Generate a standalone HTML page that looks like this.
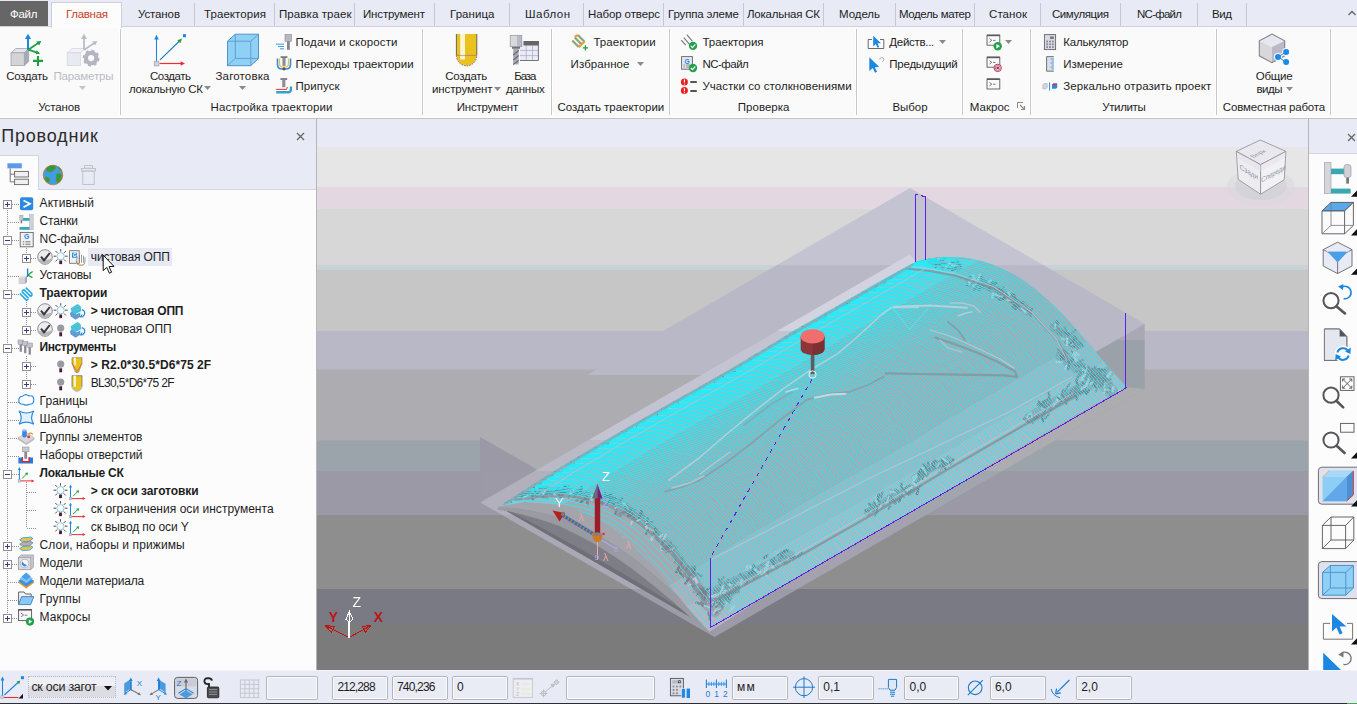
<!DOCTYPE html>
<html lang="ru">
<head>
<meta charset="utf-8">
<title>PowerMill</title>
<style>
html,body{margin:0;padding:0;}
body{width:1357px;height:704px;overflow:hidden;position:relative;background:#e8ebf5;font-family:"Liberation Sans",sans-serif;font-size:11.5px;color:#1e1e1e;}
.t{position:absolute;white-space:nowrap;display:block;}
.abs{position:absolute;}
#tabbar{position:absolute;left:0;top:0;width:1357px;height:27px;background:#e8ebf5;}
#ribbon{position:absolute;left:0;top:27px;width:1357px;height:90px;background:#fafafa;border-top:0;}
.vsep{position:absolute;width:1px;background:#c9c9c9;box-shadow:-1px 0 0 #fff,1px 0 0 #fff;}
.tsep{position:absolute;top:3px;width:1px;height:23px;background:#c6c8d2;}
.tb{position:absolute;height:23.5px;top:676.2px;background:#e9ecf5;border:1px solid #b4b5ba;box-shadow:inset 0 0 0 1px #fcfcfe;box-sizing:border-box;border-radius:2px;}
svg{position:absolute;overflow:visible;}
</style>
</head>
<body>

<div id="tabbar"></div>
<div class="abs" style="left:0;top:26px;width:1357px;height:1px;background:#cfd2dc"></div>
<div id="ribbon"></div>
<div class="abs" style="left:0;top:117px;width:1357px;height:1px;background:#fff"></div>
<div class="abs" style="left:0;top:118px;width:1357px;height:1px;background:#c2c2c2"></div>
<div class="abs" style="left:0;top:1px;width:48px;height:25px;background:#666"></div>
<span class="t" style="left:10.0px;top:7.52px;font-size:11.5px;line-height:13.8px;letter-spacing:-0.258px;color:#fff;">Файл</span>
<div class="abs" style="left:51px;top:2px;width:71px;height:26px;background:#fcfcfc;border:1px solid #cdd0d8;border-bottom:0;box-sizing:border-box"></div>
<span class="t" style="left:66.0px;top:7.52px;font-size:11.5px;line-height:13.8px;letter-spacing:-0.295px;color:#c43e2c;">Главная</span>
<span class="t" style="left:138.0px;top:7.52px;font-size:11.5px;line-height:13.8px;letter-spacing:-0.113px;color:#1e1e1e;">Установ</span>
<span class="t" style="left:204.0px;top:7.52px;font-size:11.5px;line-height:13.8px;letter-spacing:0.077px;color:#1e1e1e;">Траектория</span>
<span class="t" style="left:279.0px;top:7.52px;font-size:11.5px;line-height:13.8px;letter-spacing:0.088px;color:#1e1e1e;">Правка траек</span>
<span class="t" style="left:363.0px;top:7.52px;font-size:11.5px;line-height:13.8px;letter-spacing:-0.160px;color:#1e1e1e;">Инструмент</span>
<span class="t" style="left:450.0px;top:7.52px;font-size:11.5px;line-height:13.8px;letter-spacing:0.062px;color:#1e1e1e;">Граница</span>
<span class="t" style="left:525.0px;top:7.52px;font-size:11.5px;line-height:13.8px;letter-spacing:0.482px;color:#1e1e1e;">Шаблон</span>
<span class="t" style="left:588.0px;top:7.52px;font-size:11.5px;line-height:13.8px;letter-spacing:-0.110px;color:#1e1e1e;">Набор отверс</span>
<span class="t" style="left:668.0px;top:7.52px;font-size:11.5px;line-height:13.8px;letter-spacing:-0.152px;color:#1e1e1e;">Группа элеме</span>
<span class="t" style="left:747.0px;top:7.52px;font-size:11.5px;line-height:13.8px;letter-spacing:-0.227px;color:#1e1e1e;">Локальная СК</span>
<span class="t" style="left:839.0px;top:7.52px;font-size:11.5px;line-height:13.8px;letter-spacing:-0.056px;color:#1e1e1e;">Модель</span>
<span class="t" style="left:899.0px;top:7.52px;font-size:11.5px;line-height:13.8px;letter-spacing:-0.405px;color:#1e1e1e;">Модель матер</span>
<span class="t" style="left:989.0px;top:7.52px;font-size:11.5px;line-height:13.8px;letter-spacing:0.076px;color:#1e1e1e;">Станок</span>
<span class="t" style="left:1052.0px;top:7.52px;font-size:11.5px;line-height:13.8px;letter-spacing:-0.430px;color:#1e1e1e;">Симуляция</span>
<span class="t" style="left:1137.0px;top:7.52px;font-size:11.5px;line-height:13.8px;letter-spacing:-0.739px;color:#1e1e1e;">NC-файл</span>
<span class="t" style="left:1212.0px;top:7.52px;font-size:11.5px;line-height:13.8px;letter-spacing:-0.403px;color:#1e1e1e;">Вид</span>
<div class="tsep" style="left:194px"></div>
<div class="tsep" style="left:274px"></div>
<div class="tsep" style="left:354px"></div>
<div class="tsep" style="left:434px"></div>
<div class="tsep" style="left:509px"></div>
<div class="tsep" style="left:583px"></div>
<div class="tsep" style="left:663px"></div>
<div class="tsep" style="left:743px"></div>
<div class="tsep" style="left:823px"></div>
<div class="tsep" style="left:895px"></div>
<div class="tsep" style="left:974px"></div>
<div class="tsep" style="left:1040px"></div>
<div class="tsep" style="left:1120px"></div>
<div class="tsep" style="left:1197px"></div>
<div class="tsep" style="left:1246px"></div>
<svg style="left:1347px;top:9px" width="10" height="8"><path d="M1.5 6 L5 2.5 L8.5 6" fill="none" stroke="#666" stroke-width="1.4"/></svg>
<div class="vsep" style="left:120px;top:29px;height:86px"></div>
<div class="vsep" style="left:422px;top:29px;height:86px"></div>
<div class="vsep" style="left:551px;top:29px;height:86px"></div>
<div class="vsep" style="left:669px;top:29px;height:86px"></div>
<div class="vsep" style="left:856px;top:29px;height:86px"></div>
<div class="vsep" style="left:962px;top:29px;height:86px"></div>
<div class="vsep" style="left:1030px;top:29px;height:86px"></div>
<div class="vsep" style="left:1216px;top:29px;height:86px"></div>
<div class="vsep" style="left:1330px;top:29px;height:86px"></div>
<span class="t" style="left:38.2px;top:100.72px;font-size:11.5px;line-height:13.8px;letter-spacing:-0.146px;color:#1e1e1e;">Установ</span>
<span class="t" style="left:210.5px;top:100.72px;font-size:11.5px;line-height:13.8px;letter-spacing:0.095px;color:#1e1e1e;">Настройка траектории</span>
<span class="t" style="left:456.8px;top:100.72px;font-size:11.5px;line-height:13.8px;letter-spacing:-0.227px;color:#1e1e1e;">Инструмент</span>
<span class="t" style="left:557.5px;top:100.72px;font-size:11.5px;line-height:13.8px;letter-spacing:-0.035px;color:#1e1e1e;">Создать траектории</span>
<span class="t" style="left:737.8px;top:100.72px;font-size:11.5px;line-height:13.8px;letter-spacing:0.013px;color:#1e1e1e;">Проверка</span>
<span class="t" style="left:892.5px;top:100.72px;font-size:11.5px;line-height:13.8px;letter-spacing:-0.054px;color:#1e1e1e;">Выбор</span>
<span class="t" style="left:969.8px;top:100.72px;font-size:11.5px;line-height:13.8px;letter-spacing:0.024px;color:#1e1e1e;">Макрос</span>
<span class="t" style="left:1102.3px;top:100.72px;font-size:11.5px;line-height:13.8px;letter-spacing:-0.377px;color:#1e1e1e;">Утилиты</span>
<span class="t" style="left:1222.8px;top:100.72px;font-size:11.5px;line-height:13.8px;letter-spacing:-0.177px;color:#1e1e1e;">Совместная работа</span>
<span class="t" style="left:6.2px;top:70.02px;font-size:11.5px;line-height:13.8px;letter-spacing:-0.334px;color:#1e1e1e;">Создать</span>
<span class="t" style="left:53.5px;top:70.02px;font-size:11.5px;line-height:13.8px;letter-spacing:-0.163px;color:#b9bcc6;">Параметры</span>
<span class="t" style="left:150.0px;top:70.02px;font-size:11.5px;line-height:13.8px;letter-spacing:-0.451px;color:#1e1e1e;">Создать</span>
<span class="t" style="left:129.0px;top:83.02px;font-size:11.5px;line-height:13.8px;letter-spacing:-0.231px;color:#1e1e1e;">локальную СК</span>
<span class="t" style="left:215.5px;top:70.02px;font-size:11.5px;line-height:13.8px;letter-spacing:0.156px;color:#1e1e1e;">Заготовка</span>
<span class="t" style="left:445.3px;top:70.02px;font-size:11.5px;line-height:13.8px;letter-spacing:-0.284px;color:#1e1e1e;">Создать</span>
<span class="t" style="left:432.0px;top:83.02px;font-size:11.5px;line-height:13.8px;letter-spacing:-0.111px;color:#1e1e1e;">инструмент</span>
<span class="t" style="left:514.3px;top:70.02px;font-size:11.5px;line-height:13.8px;letter-spacing:-1.127px;color:#1e1e1e;">База</span>
<span class="t" style="left:506.0px;top:83.02px;font-size:11.5px;line-height:13.8px;letter-spacing:-0.205px;color:#1e1e1e;">данных</span>
<span class="t" style="left:1255.8px;top:69.72px;font-size:11.5px;line-height:13.8px;letter-spacing:-0.228px;color:#1e1e1e;">Общие</span>
<span class="t" style="left:1256.5px;top:82.62px;font-size:11.5px;line-height:13.8px;letter-spacing:-0.503px;color:#1e1e1e;">виды</span>
<span class="t" style="left:295.4px;top:36.02px;font-size:11.5px;line-height:13.8px;letter-spacing:0.129px;color:#1e1e1e;">Подачи и скорости</span>
<span class="t" style="left:295.4px;top:58.02px;font-size:11.5px;line-height:13.8px;letter-spacing:0.043px;color:#1e1e1e;">Переходы траектории</span>
<span class="t" style="left:295.4px;top:79.82px;font-size:11.5px;line-height:13.8px;letter-spacing:0.081px;color:#1e1e1e;">Припуск</span>
<span class="t" style="left:593.4px;top:36.02px;font-size:11.5px;line-height:13.8px;letter-spacing:0.077px;color:#1e1e1e;">Траектории</span>
<span class="t" style="left:570.6px;top:58.02px;font-size:11.5px;line-height:13.8px;letter-spacing:0.077px;color:#1e1e1e;">Избранное</span>
<span class="t" style="left:702.4px;top:36.02px;font-size:11.5px;line-height:13.8px;letter-spacing:-0.012px;color:#1e1e1e;">Траектория</span>
<span class="t" style="left:702.4px;top:58.02px;font-size:11.5px;line-height:13.8px;letter-spacing:-0.505px;color:#1e1e1e;">NC-файл</span>
<span class="t" style="left:702.4px;top:79.82px;font-size:11.5px;line-height:13.8px;letter-spacing:0.048px;color:#1e1e1e;">Участки со столкновениями</span>
<span class="t" style="left:889.3px;top:36.02px;font-size:11.5px;line-height:13.8px;letter-spacing:-0.290px;color:#1e1e1e;">Действ...</span>
<span class="t" style="left:889.3px;top:58.02px;font-size:11.5px;line-height:13.8px;letter-spacing:-0.239px;color:#1e1e1e;">Предыдущий</span>
<span class="t" style="left:1063.3px;top:36.02px;font-size:11.5px;line-height:13.8px;letter-spacing:-0.232px;color:#1e1e1e;">Калькулятор</span>
<span class="t" style="left:1063.3px;top:58.02px;font-size:11.5px;line-height:13.8px;letter-spacing:-0.038px;color:#1e1e1e;">Измерение</span>
<span class="t" style="left:1063.3px;top:79.82px;font-size:11.5px;line-height:13.8px;letter-spacing:0.074px;color:#1e1e1e;">Зеркально отразить проект</span>
<svg style="left:79.0px;top:86.4px" width="7" height="4"><path d="M0 0 H7 L3.5 4 Z" fill="#c3c5cc"/></svg>
<svg style="left:203.9px;top:86.4px" width="7" height="4"><path d="M0 0 H7 L3.5 4 Z" fill="#8a8a8a"/></svg>
<svg style="left:239.0px;top:86.4px" width="7" height="4"><path d="M0 0 H7 L3.5 4 Z" fill="#8a8a8a"/></svg>
<svg style="left:493.5px;top:87px" width="7" height="4"><path d="M0 0 H7 L3.5 4 Z" fill="#8a8a8a"/></svg>
<svg style="left:637.0px;top:61.5px" width="7" height="4"><path d="M0 0 H7 L3.5 4 Z" fill="#8a8a8a"/></svg>
<svg style="left:939.0px;top:40px" width="7" height="4"><path d="M0 0 H7 L3.5 4 Z" fill="#8a8a8a"/></svg>
<svg style="left:1285.5px;top:87px" width="7" height="4"><path d="M0 0 H7 L3.5 4 Z" fill="#8a8a8a"/></svg>
<svg style="left:1004.5px;top:40px" width="7" height="4"><path d="M0 0 H7 L3.5 4 Z" fill="#8a8a8a"/></svg>
<svg style="left:1017px;top:102px" width="9" height="9"><path d="M0.5 6 V0.5 H6" fill="none" stroke="#8a8a8a"/><path d="M3 3 L7.5 7.5 M7.5 4 V7.5 H4" fill="none" stroke="#8a8a8a" stroke-width="1.2"/></svg>
<svg style="left:0;top:0" width="1357" height="120" viewBox="0 0 1357 120">
<!-- Setup create -->
<g>
<path d="M11 52.8 L15.9 48.5 H28.7 L24.3 52.8 Z" fill="#e4e6ee" stroke="#a2a2b0" stroke-width="0.8"/>
<path d="M24.3 52.8 L28.7 48.5 V61.5 L24.3 65.6 Z" fill="#a9a9b5" stroke="#a2a2b0" stroke-width="0.8"/>
<rect x="11" y="52.8" width="13.3" height="12.8" fill="#d4d4d6" stroke="#a2a2b0" stroke-width="0.8"/>
<path d="M28 50 V38" stroke="#1c86e0" stroke-width="2"/><path d="M24.9 39 H31.1 L28 33.8 Z" fill="#1c86e0"/>
<path d="M28.3 49.7 L39 42.6 M28.3 49.7 L38.5 53.2" stroke="#1fa040" stroke-width="1.8" fill="none"/>
<path d="M41.3 41.1 L36.2 41.6 L39.2 45.6 Z M40.2 53.8 L36.6 50.2 L35.8 54.2 Z" fill="#1fa040"/>
<path d="M33 60.9 H43 M38 56 V66" stroke="#1fa040" stroke-width="2.1"/>
</g>
<!-- Setup params (disabled) -->
<g>
<path d="M67.2 52.8 L72.1 48.5 H84.9 L80.5 52.8 Z" fill="#f1f2f7" stroke="#d6d6de" stroke-width="0.8"/>
<rect x="67.2" y="52.8" width="13.3" height="12.8" fill="#e8eaf2" stroke="#d6d6de" stroke-width="0.8"/>
<path d="M84 50 V38" stroke="#babbc7" stroke-width="1.8"/><path d="M81 39 H87 L84 33.8 Z" fill="#babbc7"/>
<path d="M84.3 49.7 L95 42.6" stroke="#babbc7" stroke-width="1.8" fill="none"/><path d="M97.3 41.1 L92.2 41.6 L95.2 45.6 Z" fill="#babbc7"/>
<circle cx="91.1" cy="58.1" r="5.2" fill="none" stroke="#b4b5c2" stroke-width="4.2"/>
<circle cx="91.1" cy="58.1" r="7.2" fill="none" stroke="#b4b5c2" stroke-width="2.4" stroke-dasharray="2.9 2.75"/>
</g>
<!-- create workplane -->
<g>
<path d="M156.5 61 V38" stroke="#1c86e0" stroke-width="1.1"/><path d="M154.2 39.4 H158.8 L156.5 34.8 Z" fill="#1c86e0"/>
<path d="M159.5 63.5 H181" stroke="#e83030" stroke-width="1.2"/><path d="M180.6 61.2 V65.8 L185 63.5 Z" fill="#e83030"/>
<path d="M160 59.8 L179.5 41" stroke="#1c7ab8" stroke-width="1.1"/><path d="M182 38.6 L177.4 40.2 L180.4 43.2 Z" fill="#2a9a40"/>
<rect x="183" y="34.2" width="3" height="3" fill="#1c86e0"/>
<rect x="154.3" y="61.3" width="4.6" height="4.6" fill="#d2d2da" stroke="#a4a4b2" stroke-width="0.8"/>
</g>
<!-- block -->
<g stroke="#4f93cc" stroke-width="1" fill="#8fd0f5">
<path d="M227.5 41.2 L235.3 34.2 H258.5 V58.4 L250.8 65.7 H227.5 Z"/>
<path d="M227.5 41.2 H250.8 V65.7 M250.8 41.2 L258.5 34.2 M235.3 34.2 V58.4 H258.5 M235.3 58.4 L227.5 65.7" fill="none" stroke="#5a9ad0" stroke-width="0.9"/>
</g>
<!-- feeds -->
<g>
<path d="M276 44.2 H284 M278 46.5 H284 M280 48.8 H284" stroke="#3a9ae8" stroke-width="1"/>
<rect x="285" y="34.3" width="6.5" height="7" fill="#b8b8c2" stroke="#8c8c96" stroke-width="0.6"/>
<rect x="287" y="41.3" width="2.8" height="8.5" fill="#85858f"/>
</g>
<!-- links -->
<g fill="none">
<path d="M277.5 58.5 V64.5 Q277.5 69 282 69 H286 Q290.5 69 290.5 64.5 V58.5" stroke="#3a8ad8" stroke-width="1.6"/>
<path d="M279.6 58.5 V64 Q279.6 67 282.4 67 H285.6 Q288.4 67 288.4 64 V58.5" stroke="#e8c040" stroke-width="1.1"/>
<rect x="280.6" y="56.3" width="6.8" height="1.6" fill="#6a6a74"/>
<rect x="282.4" y="57.9" width="3.2" height="8" fill="#8e8e98"/>
<circle cx="284" cy="68.8" r="1.6" fill="#55555f"/>
</g>
<!-- thickness -->
<g fill="none">
<rect x="280.4" y="78.2" width="6.8" height="1.6" fill="#6a6a74"/>
<rect x="282.2" y="79.8" width="3.2" height="7.4" fill="#8e8e98"/>
<path d="M276.2 89.4 H286.6 L287.4 87" stroke="#e83030" stroke-width="1"/>
<path d="M276.2 92.3 H288.5 Q290.6 92.3 290.8 90 L291 86.5" stroke="#38a0c8" stroke-width="2.4"/>
</g>
<!-- create tool -->
<g>
<path d="M456.4 34 V55.5 A10.2 10.4 0 0 0 476.8 55.5 V34 Z" fill="#e9c21e"/>
<path d="M460.2 34 H465 V59.5 H460.2 Z" fill="#fbf5d2"/>
<path d="M456.4 34 V55.5 M476.8 34 V55.5" stroke="#5a5a5e" stroke-width="0.9" fill="none"/>
<path d="M456.4 55.5 A10.2 10.4 0 0 0 476.8 55.5" stroke="#6a5ab0" stroke-width="0.9" fill="none" stroke-dasharray="1.5 1.2"/>
<path d="M456.4 55.4 H476.8" stroke="#9a6a90" stroke-width="0.6"/>
</g>
<!-- database -->
<g>
<rect x="520" y="41" width="18.8" height="19.9" fill="#e9ebf5"/>
<path d="M526.3 45.5 V60.5 M532.5 45.5 V60.5 M520 50.5 H538.5 M520 55.6 H538.5" stroke="#a6a6c8" stroke-width="0.7"/>
<rect x="523.5" y="41" width="15.3" height="4.5" fill="#666"/>
<path d="M538.4 41 V60.5 H520" stroke="#666" stroke-width="0.9" fill="none"/>
<rect x="510.2" y="35.3" width="6.6" height="11.4" fill="#d9d9db"/><rect x="516.8" y="35.3" width="5" height="11.4" fill="#b9b9c9"/>
<rect x="510.2" y="35.3" width="11.6" height="11.4" fill="none" stroke="#9494a4" stroke-width="0.7"/>
<rect x="512" y="46.8" width="8" height="2" fill="#70707a"/>
<rect x="513.2" y="48.8" width="5.5" height="15.6" fill="#a9a9b5"/>
<path d="M513.2 55 L518.7 50.5 M513.2 60 L518.7 55.5 M513.2 64.4 L518.7 60.5" stroke="#6c6c78" stroke-width="1.2"/>
</g>
<!-- toolpaths (create) -->
<g fill="none">
<path d="M572.5 41.5 L579 35 M575 44.5 L581.5 38 M578 47 L584.3 40.8 M579 35 Q580.8 36 581.5 38 M575 44.5 Q573 43.5 572.5 41.5 M581.5 38 Q583.5 39 584.3 40.8" stroke="#f0a030" stroke-width="2.4" transform="rotate(90 578.4 41)"/>
<path d="M572.5 41.5 L579 35 M575 44.5 L581.5 38 M578 47 L584.3 40.8" stroke="#38b4ea" stroke-width="1.2" transform="rotate(90 578.4 41)"/>
<path d="M582.8 47.8 H588 M585.4 45.2 V50.4" stroke="#1fa040" stroke-width="1.3"/>
</g>
<!-- verify toolpath -->
<g fill="none">
<path d="M681.5 40 L688 34.5 M684.5 43 L691 37.5 M687 45.5 L692 41" stroke="#7c7c86" stroke-width="1.2" transform="rotate(90 686.8 40)"/>
<circle cx="693" cy="45.9" r="4.2" fill="#22a04a"/><path d="M690.8 45.9 L692.5 47.6 L695.3 44.4" stroke="#fff" stroke-width="1.2"/>
</g>
<!-- verify NC -->
<g fill="none">
<rect x="681.6" y="56.6" width="10.8" height="12.6" fill="#e4e6ee" stroke="#666" stroke-width="0.9"/>
<text x="684.4" y="63.6" font-family="Liberation Sans, sans-serif" font-size="6.5" font-weight="bold" fill="#1c86e0">G</text>
<path d="M683.5 65 H685 M686 65 H690 M683.5 67 H685 M686 67 H690" stroke="#666" stroke-width="0.7"/>
<circle cx="693" cy="68" r="4.2" fill="#22a04a"/><path d="M690.8 68 L692.5 69.7 L695.3 66.5" stroke="#fff" stroke-width="1.2"/>
</g>
<!-- collisions -->
<g>
<circle cx="684.4" cy="81.9" r="3.5" fill="#e82020"/><circle cx="684.4" cy="90.6" r="3.5" fill="#e82020"/>
<path d="M684.4 79.6 V82.6 M684.4 88.3 V91.3" stroke="#fff" stroke-width="1.1"/><circle cx="684.4" cy="84" r="0.6" fill="#fff"/><circle cx="684.4" cy="92.7" r="0.6" fill="#fff"/>
<path d="M690.3 82 H696.8 M690.3 91 H696.8" stroke="#555" stroke-width="1.8"/>
</g>
<!-- select -->
<g fill="none">
<path d="M872 39.5 H868.2 V48.5 H883.8 V39.5 H880" stroke="#5a5a5e" stroke-width="0.9"/>
<path d="M873.2 35.8 L873.2 46.4 L875.8 44 L877.6 47.8 L879.2 47 L877.5 43.3 L881 43.2 Z" fill="#1c86e0"/>
<path d="M869.3 57.3 L869.3 71 L872.7 68 L875 72.8 L877 71.8 L874.8 67.2 L879.2 67 Z" fill="#1c86e0"/>
<path d="M879.8 59.6 A2 2 0 1 1 882 61.5" stroke="#9a9aa4" stroke-width="0.8"/>
</g>
<!-- macros -->
<g fill="none" stroke="#5a5a5e">
<rect x="987" y="35.2" width="12.8" height="10" stroke-width="0.9"/><path d="M987 35.4 H999.8" stroke-width="1.6"/><path d="M989.5 38.6 L991.8 40.3 L989.5 42 M993 40.4 H995.5" stroke-width="0.8"/>
<rect x="987" y="57.2" width="12.8" height="10" stroke-width="0.9"/><path d="M987 57.4 H999.8" stroke-width="1.6"/><path d="M989.5 60.6 L991.8 62.3 L989.5 64 M993 62.4 H995.5" stroke-width="0.8"/>
<rect x="987" y="79" width="12.8" height="10" stroke-width="0.9"/><path d="M987 79.2 H999.8" stroke-width="1.6"/><path d="M989.5 82.4 L991.8 84.1 L989.5 85.8 M993 84.2 H995.5" stroke-width="0.8"/>
</g>
<circle cx="997.7" cy="46.3" r="4.2" fill="#22a04a"/><path d="M996.4 44 V48.6 L1000 46.3 Z" fill="#fff"/>
<circle cx="997.7" cy="67.9" r="3.7" fill="#fff" stroke="#e02828" stroke-width="1"/><circle cx="997.7" cy="67.9" r="2.4" fill="none" stroke="#3a6ae0" stroke-width="0.8"/><circle cx="997.7" cy="67.9" r="1.4" fill="#e02828"/>
<!-- calculator -->
<g>
<rect x="1044.4" y="34.6" width="11.2" height="15" fill="#d9d9e1" stroke="#66666a" stroke-width="0.9"/>
<rect x="1050" y="36.5" width="3.8" height="2.4" fill="#74747e"/>
<g fill="#8a8a96"><rect x="1046.2" y="40.6" width="1.8" height="1.8"/><rect x="1049.1" y="40.6" width="1.8" height="1.8"/><rect x="1052" y="40.6" width="1.8" height="1.8"/><rect x="1046.2" y="43.4" width="1.8" height="1.8"/><rect x="1049.1" y="43.4" width="1.8" height="1.8"/><rect x="1052" y="43.4" width="1.8" height="1.8"/><rect x="1046.2" y="46.2" width="1.8" height="1.8"/><rect x="1049.1" y="46.2" width="1.8" height="1.8"/><rect x="1052" y="46.2" width="1.8" height="1.8"/></g>
</g>
<!-- ruler -->
<g>
<path d="M1053.8 56.6 H1046.6 V71.2 H1053.8" fill="#dcdee8" stroke="#66666a" stroke-width="0.9"/>
<path d="M1050.5 59 H1053.8 M1051.8 61 H1053.8 M1050.5 63 H1053.8 M1051.8 65 H1053.8 M1050.5 67 H1053.8 M1051.8 69 H1053.8" stroke="#2a8ae0" stroke-width="0.8"/>
</g>
<!-- mirror -->
<g>
<path d="M1042.8 85 L1044 83.6 H1047.2 V87.4 L1046 88.8 H1042.8 Z" fill="#d4d4dc" stroke="#a8a8b4" stroke-width="0.6"/>
<path d="M1049.6 82.4 V90.6" stroke="#2a8ae0" stroke-width="1"/>
<path d="M1052 85 L1053.2 83.6 H1057.2 V87.4 L1056 88.8 H1052 Z" fill="#2a8ae0"/><path d="M1052 85 L1053.2 83.6 H1057.2 L1056 85 Z" fill="#e03030"/>
</g>
<!-- shared views -->
<g>
<path d="M1271.9 34.1 L1284.7 40.8 L1271.9 47.1 L1259.3 40.8 Z" fill="#e6e8f0"/>
<path d="M1259.3 40.8 L1271.9 47.1 V62.7 L1259.3 55.8 Z" fill="#d8d8da"/>
<path d="M1284.7 40.8 L1271.9 47.1 V62.7 L1284.7 55.8 Z" fill="#b9b9c7"/>
<path d="M1271.9 34.1 L1284.7 40.8 V55.8 L1271.9 62.7 L1259.3 55.8 V40.8 Z" fill="none" stroke="#84848c" stroke-width="1.1"/>
<path d="M1286.1 52.1 L1278 56.9 L1286.1 62.1" stroke="#fafafa" stroke-width="3" fill="none"/>
<circle cx="1286.1" cy="52.1" r="4" fill="#fafafa"/><circle cx="1278" cy="56.9" r="4" fill="#fafafa"/><circle cx="1286.1" cy="62.1" r="4" fill="#fafafa"/>
<path d="M1286.1 52.1 L1278 56.9 L1286.1 62.1" stroke="#1c8ae6" stroke-width="1" fill="none"/>
<circle cx="1286.1" cy="52.1" r="3" fill="#1c8ae6"/><circle cx="1278" cy="56.9" r="3" fill="#1c8ae6"/><circle cx="1286.1" cy="62.1" r="3" fill="#1c8ae6"/>
</g>
</svg>

<div class="abs" style="left:0;top:119px;width:316px;height:71px;background:#e8ebf5"></div>
<div class="abs" style="left:0;top:190px;width:316px;height:480px;background:#fcfcfc"></div>
<div class="abs" style="left:0;top:189px;width:316px;height:1px;background:#d4d6de"></div>
<div class="abs" style="left:316px;top:119px;width:1px;height:551px;background:#b5b5b5"></div>
<div class="abs" style="left:0;top:155px;width:39px;height:35px;background:#fcfcfc;border-top:1px solid #d4d6de;border-right:1px solid #d4d6de;box-sizing:border-box"></div>
<span class="t" style="left:1.2px;top:126.46px;font-size:18px;line-height:21.6px;letter-spacing:0.799px;color:#2b2b2b;">Проводник</span>
<svg style="left:296px;top:132px" width="9" height="9"><path d="M1 1 L8 8 M8 1 L1 8" stroke="#6a6a6a" stroke-width="1.4" fill="none"/></svg>
<div class="abs" style="left:88px;top:248px;width:84px;height:18px;background:#e7eaf4"></div>
<span class="t" style="left:39.6px;top:196.14px;font-size:12px;line-height:14.4px;letter-spacing:0.069px;color:#1e1e1e;">Активный</span>
<span class="t" style="left:39.6px;top:214.14px;font-size:12px;line-height:14.4px;letter-spacing:-0.176px;color:#1e1e1e;">Станки</span>
<span class="t" style="left:39.6px;top:232.14px;font-size:12px;line-height:14.4px;letter-spacing:-0.115px;color:#1e1e1e;">NC-файлы</span>
<span class="t" style="left:90.8px;top:250.14px;font-size:12px;line-height:14.4px;letter-spacing:-0.102px;color:#1e1e1e;">чистовая ОПП</span>
<span class="t" style="left:39.6px;top:268.14px;font-size:12px;line-height:14.4px;letter-spacing:-0.180px;color:#1e1e1e;">Установы</span>
<span class="t" style="left:39.6px;top:286.14px;font-size:12px;line-height:14.4px;letter-spacing:-0.110px;color:#1e1e1e;font-weight:bold;">Траектории</span>
<span class="t" style="left:90.8px;top:304.14px;font-size:12px;line-height:14.4px;letter-spacing:-0.194px;color:#1e1e1e;font-weight:bold;">&gt; чистовая ОПП</span>
<span class="t" style="left:90.8px;top:322.14px;font-size:12px;line-height:14.4px;letter-spacing:-0.121px;color:#1e1e1e;">черновая ОПП</span>
<span class="t" style="left:39.6px;top:340.14px;font-size:12px;line-height:14.4px;letter-spacing:-0.434px;color:#1e1e1e;font-weight:bold;">Инструменты</span>
<span class="t" style="left:90.8px;top:358.14px;font-size:12px;line-height:14.4px;letter-spacing:0.064px;color:#1e1e1e;font-weight:bold;">&gt; R2.0*30.5*D6*75 2F</span>
<span class="t" style="left:90.8px;top:376.14px;font-size:12px;line-height:14.4px;letter-spacing:-0.693px;color:#1e1e1e;">BL30,5*D6*75 2F</span>
<span class="t" style="left:39.6px;top:394.14px;font-size:12px;line-height:14.4px;letter-spacing:0.017px;color:#1e1e1e;">Границы</span>
<span class="t" style="left:39.6px;top:412.14px;font-size:12px;line-height:14.4px;letter-spacing:-0.028px;color:#1e1e1e;">Шаблоны</span>
<span class="t" style="left:39.6px;top:430.14px;font-size:12px;line-height:14.4px;letter-spacing:0.006px;color:#1e1e1e;">Группы элементов</span>
<span class="t" style="left:39.6px;top:448.14px;font-size:12px;line-height:14.4px;letter-spacing:-0.068px;color:#1e1e1e;">Наборы отверстий</span>
<span class="t" style="left:39.6px;top:466.14px;font-size:12px;line-height:14.4px;letter-spacing:-0.248px;color:#1e1e1e;font-weight:bold;">Локальные СК</span>
<span class="t" style="left:90.8px;top:484.14px;font-size:12px;line-height:14.4px;letter-spacing:-0.075px;color:#1e1e1e;font-weight:bold;">&gt; ск оси заготовки</span>
<span class="t" style="left:90.8px;top:502.14px;font-size:12px;line-height:14.4px;letter-spacing:0.030px;color:#1e1e1e;">ск ограничения оси инструмента</span>
<span class="t" style="left:90.8px;top:520.14px;font-size:12px;line-height:14.4px;letter-spacing:-0.118px;color:#1e1e1e;">ск вывод по оси Y</span>
<span class="t" style="left:39.6px;top:538.14px;font-size:12px;line-height:14.4px;letter-spacing:0.107px;color:#1e1e1e;">Слои, наборы и прижимы</span>
<span class="t" style="left:39.6px;top:556.14px;font-size:12px;line-height:14.4px;letter-spacing:-0.125px;color:#1e1e1e;">Модели</span>
<span class="t" style="left:39.6px;top:574.14px;font-size:12px;line-height:14.4px;letter-spacing:-0.172px;color:#1e1e1e;">Модели материала</span>
<span class="t" style="left:39.6px;top:592.14px;font-size:12px;line-height:14.4px;letter-spacing:0.223px;color:#1e1e1e;">Группы</span>
<span class="t" style="left:39.6px;top:610.14px;font-size:12px;line-height:14.4px;letter-spacing:0.112px;color:#1e1e1e;">Макросы</span>
<div class="abs" style="left:7px;top:204px;width:1px;height:414px;background:repeating-linear-gradient(180deg,#8f8f8f 0 1px,transparent 1px 2px)"></div>
<div class="abs" style="left:8px;top:204px;width:11px;height:1px;background:repeating-linear-gradient(90deg,#8f8f8f 0 1px,transparent 1px 2px)"></div>
<div class="abs" style="left:8px;top:222px;width:11px;height:1px;background:repeating-linear-gradient(90deg,#8f8f8f 0 1px,transparent 1px 2px)"></div>
<div class="abs" style="left:8px;top:240px;width:11px;height:1px;background:repeating-linear-gradient(90deg,#8f8f8f 0 1px,transparent 1px 2px)"></div>
<div class="abs" style="left:27px;top:258px;width:10px;height:1px;background:repeating-linear-gradient(90deg,#8f8f8f 0 1px,transparent 1px 2px)"></div>
<div class="abs" style="left:8px;top:276px;width:11px;height:1px;background:repeating-linear-gradient(90deg,#8f8f8f 0 1px,transparent 1px 2px)"></div>
<div class="abs" style="left:8px;top:294px;width:11px;height:1px;background:repeating-linear-gradient(90deg,#8f8f8f 0 1px,transparent 1px 2px)"></div>
<div class="abs" style="left:27px;top:312px;width:10px;height:1px;background:repeating-linear-gradient(90deg,#8f8f8f 0 1px,transparent 1px 2px)"></div>
<div class="abs" style="left:27px;top:330px;width:10px;height:1px;background:repeating-linear-gradient(90deg,#8f8f8f 0 1px,transparent 1px 2px)"></div>
<div class="abs" style="left:8px;top:348px;width:11px;height:1px;background:repeating-linear-gradient(90deg,#8f8f8f 0 1px,transparent 1px 2px)"></div>
<div class="abs" style="left:27px;top:366px;width:10px;height:1px;background:repeating-linear-gradient(90deg,#8f8f8f 0 1px,transparent 1px 2px)"></div>
<div class="abs" style="left:27px;top:384px;width:10px;height:1px;background:repeating-linear-gradient(90deg,#8f8f8f 0 1px,transparent 1px 2px)"></div>
<div class="abs" style="left:8px;top:402px;width:11px;height:1px;background:repeating-linear-gradient(90deg,#8f8f8f 0 1px,transparent 1px 2px)"></div>
<div class="abs" style="left:8px;top:420px;width:11px;height:1px;background:repeating-linear-gradient(90deg,#8f8f8f 0 1px,transparent 1px 2px)"></div>
<div class="abs" style="left:8px;top:438px;width:11px;height:1px;background:repeating-linear-gradient(90deg,#8f8f8f 0 1px,transparent 1px 2px)"></div>
<div class="abs" style="left:8px;top:456px;width:11px;height:1px;background:repeating-linear-gradient(90deg,#8f8f8f 0 1px,transparent 1px 2px)"></div>
<div class="abs" style="left:8px;top:474px;width:11px;height:1px;background:repeating-linear-gradient(90deg,#8f8f8f 0 1px,transparent 1px 2px)"></div>
<div class="abs" style="left:27px;top:492px;width:10px;height:1px;background:repeating-linear-gradient(90deg,#8f8f8f 0 1px,transparent 1px 2px)"></div>
<div class="abs" style="left:27px;top:510px;width:10px;height:1px;background:repeating-linear-gradient(90deg,#8f8f8f 0 1px,transparent 1px 2px)"></div>
<div class="abs" style="left:27px;top:528px;width:10px;height:1px;background:repeating-linear-gradient(90deg,#8f8f8f 0 1px,transparent 1px 2px)"></div>
<div class="abs" style="left:8px;top:546px;width:11px;height:1px;background:repeating-linear-gradient(90deg,#8f8f8f 0 1px,transparent 1px 2px)"></div>
<div class="abs" style="left:8px;top:564px;width:11px;height:1px;background:repeating-linear-gradient(90deg,#8f8f8f 0 1px,transparent 1px 2px)"></div>
<div class="abs" style="left:8px;top:582px;width:11px;height:1px;background:repeating-linear-gradient(90deg,#8f8f8f 0 1px,transparent 1px 2px)"></div>
<div class="abs" style="left:8px;top:600px;width:11px;height:1px;background:repeating-linear-gradient(90deg,#8f8f8f 0 1px,transparent 1px 2px)"></div>
<div class="abs" style="left:8px;top:618px;width:11px;height:1px;background:repeating-linear-gradient(90deg,#8f8f8f 0 1px,transparent 1px 2px)"></div>
<div class="abs" style="left:26px;top:248px;width:1px;height:10px;background:repeating-linear-gradient(180deg,#8f8f8f 0 1px,transparent 1px 2px)"></div>
<div class="abs" style="left:26px;top:302px;width:1px;height:28px;background:repeating-linear-gradient(180deg,#8f8f8f 0 1px,transparent 1px 2px)"></div>
<div class="abs" style="left:26px;top:356px;width:1px;height:28px;background:repeating-linear-gradient(180deg,#8f8f8f 0 1px,transparent 1px 2px)"></div>
<div class="abs" style="left:26px;top:482px;width:1px;height:46px;background:repeating-linear-gradient(180deg,#8f8f8f 0 1px,transparent 1px 2px)"></div>
<svg style="left:3px;top:200px" width="9" height="9"><rect x="0.5" y="0.5" width="8" height="8" fill="#fff" stroke="#919191"/><path d="M2 4.5 H7 M4.5 2 V7" stroke="#3a3a8a" stroke-width="1" fill="none"/></svg>
<svg style="left:3px;top:236px" width="9" height="9"><rect x="0.5" y="0.5" width="8" height="8" fill="#fff" stroke="#919191"/><path d="M2 4.5 H7" stroke="#3a3a8a" stroke-width="1" fill="none"/></svg>
<svg style="left:22px;top:254px" width="9" height="9"><rect x="0.5" y="0.5" width="8" height="8" fill="#fff" stroke="#919191"/><path d="M2 4.5 H7 M4.5 2 V7" stroke="#3a3a8a" stroke-width="1" fill="none"/></svg>
<svg style="left:3px;top:290px" width="9" height="9"><rect x="0.5" y="0.5" width="8" height="8" fill="#fff" stroke="#919191"/><path d="M2 4.5 H7" stroke="#3a3a8a" stroke-width="1" fill="none"/></svg>
<svg style="left:22px;top:308px" width="9" height="9"><rect x="0.5" y="0.5" width="8" height="8" fill="#fff" stroke="#919191"/><path d="M2 4.5 H7 M4.5 2 V7" stroke="#3a3a8a" stroke-width="1" fill="none"/></svg>
<svg style="left:22px;top:326px" width="9" height="9"><rect x="0.5" y="0.5" width="8" height="8" fill="#fff" stroke="#919191"/><path d="M2 4.5 H7 M4.5 2 V7" stroke="#3a3a8a" stroke-width="1" fill="none"/></svg>
<svg style="left:3px;top:344px" width="9" height="9"><rect x="0.5" y="0.5" width="8" height="8" fill="#fff" stroke="#919191"/><path d="M2 4.5 H7" stroke="#3a3a8a" stroke-width="1" fill="none"/></svg>
<svg style="left:22px;top:362px" width="9" height="9"><rect x="0.5" y="0.5" width="8" height="8" fill="#fff" stroke="#919191"/><path d="M2 4.5 H7 M4.5 2 V7" stroke="#3a3a8a" stroke-width="1" fill="none"/></svg>
<svg style="left:22px;top:380px" width="9" height="9"><rect x="0.5" y="0.5" width="8" height="8" fill="#fff" stroke="#919191"/><path d="M2 4.5 H7 M4.5 2 V7" stroke="#3a3a8a" stroke-width="1" fill="none"/></svg>
<svg style="left:3px;top:470px" width="9" height="9"><rect x="0.5" y="0.5" width="8" height="8" fill="#fff" stroke="#919191"/><path d="M2 4.5 H7" stroke="#3a3a8a" stroke-width="1" fill="none"/></svg>
<svg style="left:3px;top:542px" width="9" height="9"><rect x="0.5" y="0.5" width="8" height="8" fill="#fff" stroke="#919191"/><path d="M2 4.5 H7 M4.5 2 V7" stroke="#3a3a8a" stroke-width="1" fill="none"/></svg>
<svg style="left:3px;top:560px" width="9" height="9"><rect x="0.5" y="0.5" width="8" height="8" fill="#fff" stroke="#919191"/><path d="M2 4.5 H7 M4.5 2 V7" stroke="#3a3a8a" stroke-width="1" fill="none"/></svg>
<svg style="left:3px;top:614px" width="9" height="9"><rect x="0.5" y="0.5" width="8" height="8" fill="#fff" stroke="#919191"/><path d="M2 4.5 H7 M4.5 2 V7" stroke="#3a3a8a" stroke-width="1" fill="none"/></svg>
<svg style="left:0;top:119px" width="316" height="551" viewBox="0 119 316 551">
<rect x="7.4" y="163.3" width="14.4" height="5" fill="#5a9ae8"/>
<path d="M10.2 168.3 V181.8 H14.4 M10.2 174.2 H14.4" stroke="#666" stroke-width="0.9" fill="none"/>
<rect x="14.6" y="171.4" width="13.8" height="5.6" fill="#f0f0f4" stroke="#666" stroke-width="0.9"/><rect x="14.6" y="179.2" width="13.8" height="5.4" fill="#f0f0f4" stroke="#666" stroke-width="0.9"/>
<circle cx="53" cy="175" r="9.8" fill="#3a9ee8" stroke="#c07828" stroke-width="0.8"/>
<path d="M46 168 Q50 164.5 55 165.5 Q57 168 54 170 Q52 173 49 172 Q46 172 46 168 Z M56 174 Q60 172 62 175 Q62 180 58 183 Q55 181 56 178 Z M45 177 Q48 176 50 179 Q50 183 47.5 182.5 Q44.5 180 45 177 Z M58 166.5 Q61 168 62 171 Q59 171 58 166.5Z" fill="#2a9c44" stroke="#c07828" stroke-width="0.5"/>
<rect x="84.6" y="165.6" width="7.8" height="2.6" fill="none" stroke="#bcbcc2" stroke-width="0.9"/><rect x="81.6" y="168.4" width="13.8" height="2.6" fill="#e8ebf5" stroke="#bcbcc2" stroke-width="0.9"/><rect x="82.8" y="171.2" width="11.4" height="13.2" fill="#e8ebf5" stroke="#bcbcc2" stroke-width="0.9"/>
<rect x="20" y="197.2" width="13.2" height="13" rx="2" fill="#2a8ae0"/><path d="M23.5 200.4 L30 203.8 L23.5 207.2" stroke="#fff" stroke-width="1.7" fill="none"/>
<rect x="29.5" y="214.4" width="3.7" height="15.4" fill="#d0d0d4" stroke="#b0b0b8" stroke-width="0.5"/><rect x="21" y="218" width="8.5" height="2.8" fill="#3aa8b0"/><rect x="19.5" y="227" width="10" height="2.8" fill="#3aa8b0"/><rect x="19.8" y="215.2" width="3.2" height="5.5" fill="#c8c8d0" stroke="#9a9aa4" stroke-width="0.5"/><rect x="20.7" y="220.7" width="1.5" height="2.6" fill="#777"/>
<rect x="20.2" y="232.4" width="13" height="14.4" fill="#f1f1f5" stroke="#666" stroke-width="0.9"/>
<text x="24.1" y="239.0" font-family="Liberation Sans, sans-serif" font-size="6.8" font-weight="bold" fill="#1c86e0">G</text>
<path d="M22.8 241.8 h1.4 m1.2 0 h5 M22.8 244.2 h1.4 m1.2 0 h5" stroke="#555" stroke-width="0.8" fill="none"/>
<circle cx="45" cy="257.0" r="7.3" fill="#ececee" stroke="#8e8e92" stroke-width="1"/><path d="M38.2 258.5 A6.9 6.9 0 0 0 51.8 258.5 Q45 261.4 38.2 258.5Z" fill="#b8b8bc"/><path d="M41 256.6 L44 260.4 L49.8 253.0" stroke="#3a3a3e" stroke-width="2" fill="none"/>
<path d="M53.7 256.2 h2.6 M65.10000000000001 256.2 h2.6 M60.7 249.2 v2.4 M55.5 251.0 l1.9 1.9 M65.9 251.0 l-1.9 1.9 M55.5 261.4 l1.9 -1.9 M65.9 261.4 l-1.9 -1.9" stroke="#222" stroke-width="0.8" fill="none"/>
<circle cx="60.7" cy="256.2" r="3.6" fill="#fdfdf4" stroke="#8cc4ec" stroke-width="1"/><rect x="59.300000000000004" y="260.5" width="2.8" height="3.6" fill="#4a1a30"/>
<rect x="69.6" y="250.7" width="9.6" height="12.6" fill="#f1f1f5" stroke="#666" stroke-width="0.8"/><rect x="72" y="252.7" width="5" height="5" fill="#1c86e0"/><text x="72.7" y="256.9" font-family="Liberation Sans, sans-serif" font-size="5" font-weight="bold" fill="#fff">G</text>
<path d="M77 263.7 Q76 258.7 77.5 256.7 M79.5 262.7 V255.2 M81.5 262.7 V254.89999999999998 M83.5 262.7 V255.7  M85 261.7 V257.2 M76 261.2 Q77.5 265.7 82 265.3 Q85 264.7 85 261.7" stroke="#777" stroke-width="0.7" fill="none"/><path d="M75.5 263.2 Q79 266.5 83.5 264.7" stroke="#e8b040" stroke-width="0.8" fill="none"/>
<path d="M18.6 277.5 L20.8 275.5 H27 L25 277.5 Z" fill="#e4e6ee"/><rect x="18.6" y="277.5" width="6.4" height="6.6" fill="#d2d2d6"/><path d="M25 277.5 L27 275.5 V282 L25 284.1 Z" fill="#a9a9b5"/>
<path d="M27.6 277 V268.5" stroke="#1c86e0" stroke-width="1.4"/><path d="M27.8 275 L32.6 271.4 M27.8 275 L32.4 277.6" stroke="#1fa040" stroke-width="1.3" fill="none"/>
<g transform="rotate(45 26.2 294)" stroke="#20a8e0" stroke-width="1.5" fill="none"><path d="M21.4 289.8 H31 M21.4 292.6 H31 M21.4 295.4 H31 M21.4 298.2 H31 M31 289.8 V292.6 M21.4 292.6 V295.4 M31 295.4 V298.2"/></g>
<circle cx="45" cy="311.0" r="7.3" fill="#ececee" stroke="#8e8e92" stroke-width="1"/><path d="M38.2 312.5 A6.9 6.9 0 0 0 51.8 312.5 Q45 315.4 38.2 312.5Z" fill="#b8b8bc"/><path d="M41 310.6 L44 314.4 L49.8 307.0" stroke="#3a3a3e" stroke-width="2" fill="none"/>
<path d="M53.7 310.2 h2.6 M65.10000000000001 310.2 h2.6 M60.7 303.2 v2.4 M55.5 305.0 l1.9 1.9 M65.9 305.0 l-1.9 1.9 M55.5 315.4 l1.9 -1.9 M65.9 315.4 l-1.9 -1.9" stroke="#222" stroke-width="0.8" fill="none"/>
<circle cx="60.7" cy="310.2" r="3.6" fill="#fdfdf4" stroke="#8cc4ec" stroke-width="1"/><rect x="59.300000000000004" y="314.5" width="2.8" height="3.6" fill="#4a1a30"/>
<path d="M70 312.9 L72 311.3 L76 314.5 L80.4 312.5 L80 316.7 L75.6 319.7 L70.6 316.3 Z" fill="#5a98d8"/>
<path d="M70.6 308.3 L77.6 304.09999999999997 L80.6 306.3 L81.4 311.09999999999997 L75.2 314.3 L71.6 312.09999999999997 Z" fill="#3cc4e4"/>
<path d="M72.6 308.7 l0.1 0 M75.4 307.09999999999997 l0.1 0 M78 306.3 l0.1 0 M74 311.09999999999997 l0.1 0 M77 309.7 l0.1 0 M79.6 308.9 l0.1 0 M72.6 315.3 l0.1 0 M76 317.09999999999997 l0.1 0 M78.6 315.3 l0.1 0" stroke="#e8a850" stroke-width="0.9" stroke-linecap="round" fill="none"/>
<path d="M82 309.7 A3.6 3.6 0 0 1 83 316.3 M83.4 316.7 l-2.8 0.2 l1.6 -2.4" stroke="#1c86e0" stroke-width="1.2" fill="none"/>
<circle cx="45" cy="329.0" r="7.3" fill="#ececee" stroke="#8e8e92" stroke-width="1"/><path d="M38.2 330.5 A6.9 6.9 0 0 0 51.8 330.5 Q45 333.4 38.2 330.5Z" fill="#b8b8bc"/><path d="M41 328.6 L44 332.4 L49.8 325.0" stroke="#3a3a3e" stroke-width="2" fill="none"/>
<circle cx="60.7" cy="328.09999999999997" r="3.6" fill="#9a9aa2"/><rect x="59.300000000000004" y="332.3" width="2.8" height="4" fill="#4a1a30"/>
<path d="M70 330.9 L72 329.3 L76 332.5 L80.4 330.5 L80 334.7 L75.6 337.7 L70.6 334.3 Z" fill="#5a98d8"/>
<path d="M70.6 326.3 L77.6 322.09999999999997 L80.6 324.3 L81.4 329.09999999999997 L75.2 332.3 L71.6 330.09999999999997 Z" fill="#3cc4e4"/>
<path d="M72.6 326.7 l0.1 0 M75.4 325.09999999999997 l0.1 0 M78 324.3 l0.1 0 M74 329.09999999999997 l0.1 0 M77 327.7 l0.1 0 M79.6 326.9 l0.1 0 M72.6 333.3 l0.1 0 M76 335.09999999999997 l0.1 0 M78.6 333.3 l0.1 0" stroke="#e8a850" stroke-width="0.9" stroke-linecap="round" fill="none"/>
<path d="M82 327.7 A3.6 3.6 0 0 1 83 334.3 M83.4 334.7 l-2.8 0.2 l1.6 -2.4" stroke="#1c86e0" stroke-width="1.2" fill="none"/>
<rect x="18" y="340" width="5.4" height="4.2" fill="#c4c4cc" stroke="#8c8c96" stroke-width="0.5"/><rect x="19.6" y="344.2" width="2.3" height="7.5" fill="#8a8a94"/>
<rect x="22.5" y="341.5" width="5.4" height="4.2" fill="#c4c4cc" stroke="#8c8c96" stroke-width="0.5"/><rect x="24.1" y="345.7" width="2.3" height="7.5" fill="#8a8a94"/>
<rect x="27" y="343" width="5.4" height="4.2" fill="#c4c4cc" stroke="#8c8c96" stroke-width="0.5"/><rect x="28.6" y="347.2" width="2.3" height="7.5" fill="#8a8a94"/>
<circle cx="60.7" cy="364.09999999999997" r="3.6" fill="#9a9aa2"/><rect x="59.300000000000004" y="368.3" width="2.8" height="4" fill="#4a1a30"/>
<path d="M72 357.7 H82 V363.2 L78.6 372.09999999999997 Q77 373.7 75.4 372.09999999999997 L72 363.2 Z" fill="#e9c21e" stroke="#77705a" stroke-width="0.6"/><path d="M73.5 357.7 h2.4 v6 l-0.4 2 h-1 Z" fill="#fbf5d2"/><path d="M72 363.2 L77 371.7 L82 363.2" stroke="#e05050" stroke-width="0.7" fill="none"/>
<circle cx="60.7" cy="382.09999999999997" r="3.6" fill="#9a9aa2"/><rect x="59.300000000000004" y="386.3" width="2.8" height="4" fill="#4a1a30"/>
<path d="M72 375.7 H82 V386.09999999999997 A5 5 0 0 1 72 386.09999999999997 Z" fill="#e9c21e" stroke="#66666a" stroke-width="0.7"/><path d="M73.6 375.7 h2.4 v11 h-2.4 Z" fill="#fbf5d2"/><path d="M72.6 386.7 A4.4 4.4 0 0 0 81.4 386.7" stroke="#c8c8d0" stroke-width="1.3" fill="none"/>
<path d="M22.6 396.2 Q26 393.2 29 396.0 Q33.4 394.8 33.8 399.2 Q34.2 404.40000000000003 29.4 404.2 Q26 406.0 23.2 404.2 Q18.4 404.40000000000003 18.8 400.2 Q18.8 396.40000000000003 22.6 396.2 Z" fill="#fdfdff" stroke="#2a8ae0" stroke-width="1.1"/>
<path d="M19 411.0 Q26.4 415.0 33.8 411.0 Q29.4 417.6 33.8 424.20000000000005 Q26.4 420.20000000000005 19 424.20000000000005 Q23.4 417.6 19 411.0 Z" fill="#e4f0fc" stroke="#2a8ae0" stroke-width="1.2"/>
<path d="M18 437.9 L26.4 432.5 L34.4 437.9 L26.4 443.5 Z" fill="#d8d8dc" stroke="#b0b0b8" stroke-width="0.6"/><path d="M18 437.9 L26.4 443.5 L34.4 437.9 V439.5 L26.4 445.1 L18 439.5 Z" fill="#b4b4bc"/>
<rect x="22.2" y="429.9" width="4.6" height="7.6" rx="2" fill="#3a8ae0"/><ellipse cx="24.5" cy="430.3" rx="2.3" ry="1.1" fill="#8cc0f0"/><path d="M28.4 433.9 q2.6 -2 4.4 0.6" stroke="#e88a30" stroke-width="1.2" fill="none"/><rect x="27.4" y="435.5" width="2.6" height="2.6" fill="#e04040"/>
<rect x="22.4" y="447" width="6.6" height="4.8" fill="#c8c8d0" stroke="#8c8c96" stroke-width="0.5"/><rect x="24.3" y="451.8" width="2.8" height="7" fill="#8a8a94"/><path d="M18.4 457.6 H23 V461 H28.6 V457.6 H33 V463.4 H18.4 Z" fill="#2a7ad8"/><path d="M22.4 457 V461.6 H29.2 V457" stroke="#e02828" stroke-width="1.2" fill="none"/>
<path d="M19.4 480.9 V468.3" stroke="#1c86e0" stroke-width="1"/><path d="M17.9 469.9 L19.4 467.1 L20.9 469.9 Z" fill="#1c86e0"/>
<path d="M19.4 480.9 H32.4" stroke="#e83030" stroke-width="1"/><path d="M31.599999999999998 479.4 L34.4 480.9 L31.599999999999998 482.4 Z" fill="#e83030"/>
<path d="M22.0 478.5 L27.0 473.5" stroke="#1fa040" stroke-width="1"/><path d="M28.0 472.5 l-3 0.6 l2.4 2.4 Z" fill="#1fa040"/>
<rect x="18.099999999999998" y="479.6" width="2.6" height="2.6" fill="#c8c8d0" stroke="#9a9aa8" stroke-width="0.4"/>
<path d="M53.5 490.2 h2.6 M64.9 490.2 h2.6 M60.5 483.2 v2.4 M55.3 485.0 l1.9 1.9 M65.7 485.0 l-1.9 1.9 M55.3 495.4 l1.9 -1.9 M65.7 495.4 l-1.9 -1.9" stroke="#222" stroke-width="0.8" fill="none"/>
<circle cx="60.5" cy="490.2" r="3.6" fill="#fdfdf4" stroke="#8cc4ec" stroke-width="1"/><rect x="59.1" y="494.5" width="2.8" height="3.6" fill="#4a1a30"/>
<path d="M70.5 498.59999999999997 V486.0" stroke="#1c86e0" stroke-width="1"/><path d="M69.0 487.59999999999997 L70.5 484.8 L72.0 487.59999999999997 Z" fill="#1c86e0"/>
<path d="M70.5 498.59999999999997 H83.5" stroke="#e83030" stroke-width="1"/><path d="M82.7 497.09999999999997 L85.5 498.59999999999997 L82.7 500.09999999999997 Z" fill="#e83030"/>
<path d="M73.1 496.2 L78.1 491.2" stroke="#1fa040" stroke-width="1"/><path d="M79.1 490.2 l-3 0.6 l2.4 2.4 Z" fill="#1fa040"/>
<rect x="69.2" y="497.3" width="2.6" height="2.6" fill="#c8c8d0" stroke="#9a9aa8" stroke-width="0.4"/>
<path d="M53.5 508.2 h2.6 M64.9 508.2 h2.6 M60.5 501.2 v2.4 M55.3 503.0 l1.9 1.9 M65.7 503.0 l-1.9 1.9 M55.3 513.4 l1.9 -1.9 M65.7 513.4 l-1.9 -1.9" stroke="#222" stroke-width="0.8" fill="none"/>
<circle cx="60.5" cy="508.2" r="3.6" fill="#fdfdf4" stroke="#8cc4ec" stroke-width="1"/><rect x="59.1" y="512.5" width="2.8" height="3.6" fill="#4a1a30"/>
<path d="M70.5 516.6 V504.0" stroke="#1c86e0" stroke-width="1"/><path d="M69.0 505.59999999999997 L70.5 502.8 L72.0 505.59999999999997 Z" fill="#1c86e0"/>
<path d="M70.5 516.6 H83.5" stroke="#e83030" stroke-width="1"/><path d="M82.7 515.1 L85.5 516.6 L82.7 518.1 Z" fill="#e83030"/>
<path d="M73.1 514.2 L78.1 509.2" stroke="#1fa040" stroke-width="1"/><path d="M79.1 508.2 l-3 0.6 l2.4 2.4 Z" fill="#1fa040"/>
<rect x="69.2" y="515.3" width="2.6" height="2.6" fill="#c8c8d0" stroke="#9a9aa8" stroke-width="0.4"/>
<path d="M53.5 526.2 h2.6 M64.9 526.2 h2.6 M60.5 519.2 v2.4 M55.3 521.0 l1.9 1.9 M65.7 521.0 l-1.9 1.9 M55.3 531.4000000000001 l1.9 -1.9 M65.7 531.4000000000001 l-1.9 -1.9" stroke="#222" stroke-width="0.8" fill="none"/>
<circle cx="60.5" cy="526.2" r="3.6" fill="#fdfdf4" stroke="#8cc4ec" stroke-width="1"/><rect x="59.1" y="530.5" width="2.8" height="3.6" fill="#4a1a30"/>
<path d="M70.5 534.6 V522.0" stroke="#1c86e0" stroke-width="1"/><path d="M69.0 523.6 L70.5 520.8000000000001 L72.0 523.6 Z" fill="#1c86e0"/>
<path d="M70.5 534.6 H83.5" stroke="#e83030" stroke-width="1"/><path d="M82.7 533.1 L85.5 534.6 L82.7 536.1 Z" fill="#e83030"/>
<path d="M73.1 532.2 L78.1 527.2" stroke="#1fa040" stroke-width="1"/><path d="M79.1 526.2 l-3 0.6 l2.4 2.4 Z" fill="#1fa040"/>
<rect x="69.2" y="533.3000000000001" width="2.6" height="2.6" fill="#c8c8d0" stroke="#9a9aa8" stroke-width="0.4"/>
<path d="M19.6 539.8 Q23 536.4 27 537.5999999999999 Q30.6 536.0 33 538.4 Q30 542.4 26 541.5999999999999 Q22 543.0 19.6 539.8 Z" fill="#e8c050" stroke="#38a8d8" stroke-width="0.9"/>
<path d="M19.6 544.1999999999999 Q23 540.8 27 541.9999999999999 Q30.6 540.4 33 542.8 Q30 546.8 26 545.9999999999999 Q22 547.4 19.6 544.1999999999999 Z" fill="#b0b0b8" stroke="#8a8a94" stroke-width="0.9"/>
<path d="M19.6 548.5999999999999 Q23 545.1999999999999 27 546.3999999999999 Q30.6 544.8 33 547.1999999999999 Q30 551.1999999999999 26 550.3999999999999 Q22 551.8 19.6 548.5999999999999 Z" fill="#e8c050" stroke="#38a8d8" stroke-width="0.9"/>
<path d="M18.4 557.4 L21 555 H33.4 V567.2 L30.8 569.6 H18.4 Z" fill="#c8c8cc" stroke="#9a9aa2" stroke-width="0.7"/><rect x="18.4" y="557.4" width="12.4" height="12.2" fill="#dcdce0" stroke="#9a9aa2" stroke-width="0.7"/><circle cx="24.6" cy="563.5" r="4.3" fill="#f4f4f8" stroke="#a8a8b4" stroke-width="0.8"/><path d="M22.6 561.6 A2.8 2.8 0 1 0 27 565 Q24 564.8 22.6 561.6 Z" fill="#3a8ae0"/>
<path d="M18 582.6 L26.2 577 L34.4 582.6 L26.2 588.4 Z" fill="#e8982a"/><path d="M18 581 L26.2 575.4 L34.4 581 L26.2 586.6 Z" fill="#3a90e0"/><path d="M19.6 578.4 L26.2 573.4 L32.8 578.4 L26.2 583.2 Z" fill="#7cc0f4"/><path d="M21.6 576.4 L26.2 572.6 L30.8 576.4 L26.2 580 Z" fill="#4aa0e8"/>
<path d="M18.6 604.6 V592.0 H24 L25.6 594.0 H31.2 V596.6" fill="#f4f4f8" stroke="#55555a" stroke-width="0.9"/><path d="M18.6 604.6 L21.6 596.6 H33.8 L30.6 604.6 Z" fill="#8cc8f4" stroke="#3a80c0" stroke-width="0.9"/>
<rect x="18.6" y="609.6" width="13" height="11" fill="#f6f6f8" stroke="#55555a" stroke-width="0.9"/><path d="M18.6 609.8 H31.6" stroke="#55555a" stroke-width="1.6"/><path d="M21 613.2 L23.6 615 L21 616.8 M24.6 615.2 H27.4" stroke="#66666a" stroke-width="0.8" fill="none"/><circle cx="30" cy="621.6" r="4.1" fill="#22a04a"/><path d="M28.8 619.4 V623.8 L32.2 621.6 Z" fill="#fff"/>
<path d="M103.2 255.2 V270.6 L106.8 267.4 L109.4 273.2 L111.6 272.2 L109 266.6 L114 266.4 Z" fill="#fff" stroke="#111" stroke-width="1" stroke-linejoin="round"/>
</svg>
<svg id="vp" style="left:317px;top:119px" width="991" height="551" viewBox="317 119 991 551">
<rect x="317" y="119" width="991" height="551" fill="#e8ebf5"/>
<rect x="317" y="147" width="991" height="523" fill="#e6e6e6"/>
<rect x="317" y="187" width="991" height="483" fill="#e3d8e2"/>
<rect x="317" y="209" width="991" height="461" fill="#d7d7d7"/>
<rect x="317" y="265" width="991" height="405" fill="#c7d2d8"/>
<rect x="317" y="270" width="991" height="400" fill="#c6c6c6"/>
<rect x="317" y="331" width="991" height="339" fill="#b9b8c6"/>
<rect x="317" y="369.5" width="991" height="300.5" fill="#adacb0"/>
<rect x="317" y="440.5" width="991" height="229.5" fill="#9ca4ab"/>
<rect x="317" y="471" width="991" height="199" fill="#9a99a5"/>
<rect x="317" y="515" width="991" height="155" fill="#8e8e8e"/>
<rect x="317" y="589" width="991" height="81" fill="#7a7a84"/>
<rect x="317" y="624" width="991" height="46" fill="#7b7b7b"/>
<clipPath id="c1"><polygon points="480.0,437.0 910.0,188.0 1144.7,323.8 714.5,571.3"/></clipPath>
<g clip-path="url(#c1)">
<rect x="479" y="180" width="667" height="85" fill="#c4c3d1"/>
<rect x="479" y="265" width="667" height="110" fill="#b9b8c6"/>
<rect x="479" y="375" width="667" height="205" fill="#adacb0"/>
</g>
<clipPath id="c2"><polygon points="480.0,437.0 714.5,571.3 714.5,637.0 480.3,502.5"/></clipPath>
<g clip-path="url(#c2)">
<rect x="479" y="430" width="236" height="41" fill="#9a99a5"/>
<rect x="479" y="471" width="236" height="44" fill="#9b9aa6"/>
<rect x="479" y="515" width="236" height="74" fill="#908f97"/>
<rect x="479" y="589" width="236" height="51" fill="#84848e"/>
</g>
<clipPath id="c3"><polygon points="714.5,571.3 1144.7,323.8 1144.7,388.9 714.5,637.0"/></clipPath>
<g clip-path="url(#c3)">
<rect x="714" y="320" width="432" height="19.5" fill="#a9a8b4"/>
<rect x="714" y="339.5" width="432" height="101.0" fill="#9ba1a9"/>
<rect x="714" y="440.5" width="432" height="30.5" fill="#9a9fa8"/>
<rect x="714" y="471" width="432" height="44" fill="#96959f"/>
<rect x="714" y="515" width="432" height="74" fill="#8f8f97"/>
<rect x="714" y="589" width="432" height="51" fill="#85858f"/>
</g>
<clipPath id="c4"><polygon points="480.3,502.5 714.5,637.0 709.7,628.3 498.7,506.5 516.1,495.4 533.5,484.3 550.8,473.3 568.2,462.6 585.6,452.2 603.0,441.9 620.4,431.8 637.7,421.7 655.1,411.9 672.5,402.1 689.9,392.2 707.2,382.4 724.6,372.5 742.0,362.3 759.4,351.8 776.8,341.2 794.1,330.6 811.5,320.7 828.9,310.8 846.3,300.8 863.7,290.8 881.0,280.7 898.4,271.3 915.8,261.8 910.0,254.3"/></clipPath>
<g clip-path="url(#c4)">
<rect x="479" y="250" width="437" height="81" fill="#d3d3df"/>
<rect x="479" y="331" width="437" height="109.5" fill="#c4c3d1"/>
<rect x="479" y="440.5" width="437" height="30.5" fill="#bab9c6"/>
<rect x="479" y="471" width="437" height="44" fill="#b1b0bc"/>
<rect x="479" y="515" width="437" height="74" fill="#a9a8b4"/>
<rect x="479" y="589" width="437" height="51" fill="#9c9ba7"/>
</g>
<clipPath id="c5"><polygon points="714.5,637.0 1144.7,388.9 1127.0,387.3 709.7,628.3"/></clipPath>
<g clip-path="url(#c5)">
<rect x="709" y="375" width="437" height="96" fill="#adacb0"/>
<rect x="709" y="471" width="437" height="44" fill="#a0a5ae"/>
<rect x="709" y="515" width="437" height="74" fill="#a3a2ae"/>
<rect x="709" y="589" width="437" height="51" fill="#9c9ba7"/>
</g>
<polygon points="498.7,507.4 512.0,508.0 526.2,509.8 545.0,513.5 562.4,518.3 580.0,526.0 598.6,535.2 617.0,546.5 634.9,559.3 650.0,571.5 663.8,583.5 676.0,595.0 688.0,607.6 698.0,619.0 709.7,628.3 709.7,628.3 498.7,506.5" fill="#7e7e87"/>
<polygon points="498.7,506.5 709.7,628.3 709.7,628.3 688.0,613.5 666.3,599.8 644.8,586.6 623.4,573.8 602.2,561.4 581.2,549.4 560.4,537.9 539.7,526.7 519.2,516.0 498.7,506.5" fill="#6f6f78"/>
<polygon points="498.7,507.4 512.0,508.0 526.2,509.8 545.0,513.5 562.4,518.3 580.0,526.0 598.6,535.2 617.0,546.5 634.9,559.3 650.0,571.5 663.8,583.5 676.0,595.0 688.0,607.6 698.0,619.0 709.7,628.3 707.7,630.3 695.6,622.6 685.1,612.6 672.8,601.4 660.2,591.0 646.2,579.8 631.0,568.1 613.0,555.5 594.7,544.0 576.2,534.3 558.8,525.8 541.8,519.9 523.3,514.8 509.6,511.6 496.7,509.4" fill="#9a9aa2"/>
<clipPath id="msil"><polygon points="498.7,506.5 516.1,495.4 533.5,484.3 550.8,473.3 568.2,462.6 585.6,452.2 603.0,441.9 620.4,431.8 637.7,421.7 655.1,411.9 672.5,402.1 689.9,392.2 707.2,382.4 724.6,372.5 742.0,362.3 759.4,351.8 776.8,341.2 794.1,330.6 811.5,320.7 828.9,310.8 846.3,300.8 863.7,290.8 881.0,280.7 898.4,271.3 915.8,261.8 921.2,260.2 926.6,259.1 932.0,258.3 937.4,257.8 942.8,257.3 948.2,257.0 953.7,257.1 959.1,257.3 964.5,257.8 969.9,258.5 975.3,259.7 980.7,260.9 986.1,262.5 991.5,264.2 996.9,266.5 1002.3,268.8 1007.7,271.4 1013.1,273.9 1018.5,277.3 1024.0,280.8 1029.4,284.7 1034.8,288.8 1040.2,293.2 1045.6,297.9 1051.0,302.8 1056.4,307.9 1061.8,313.3 1067.2,319.0 1072.6,324.9 1078.0,331.1 1083.4,337.4 1088.8,343.6 1094.3,350.0 1099.7,356.7 1105.1,363.4 1110.5,369.6 1115.9,375.9 1121.3,381.7 1126.7,387.0 1127.0,387.3 709.7,628.3 704.2,626.4 698.8,620.6 693.4,614.3 688.0,608.1 682.6,601.4 677.2,594.7 671.7,588.3 666.3,582.1 660.9,575.8 655.5,569.6 650.1,563.7 644.7,558.0 639.3,552.6 633.9,547.5 628.5,542.6 623.1,537.9 617.7,533.5 612.3,529.4 606.9,525.5 601.4,522.0 596.0,518.6 590.6,516.1 585.2,513.5 579.8,511.2 574.4,508.9 569.0,507.2 563.6,505.6 558.2,504.4 552.8,503.2 547.4,502.5 542.0,502.0 536.6,501.8 531.1,501.7 525.7,502.0 520.3,502.5 514.9,503.0 509.5,503.8 504.1,504.9 498.7,506.5"/></clipPath>
<polygon points="498.7,506.5 504.1,504.9 509.5,503.8 514.9,503.0 520.3,502.5 525.7,502.0 531.1,501.7 536.6,501.8 542.0,502.0 547.4,502.5 552.8,503.2 558.2,504.4 563.6,505.6 569.0,507.2 574.4,508.9 579.8,511.2 585.2,513.5 590.6,516.1 596.0,518.6 601.4,522.0 606.9,525.5 612.3,529.4 617.7,533.5 623.1,537.9 628.5,542.6 633.9,547.5 639.3,552.6 644.7,558.0 650.1,563.7 655.5,569.6 660.9,575.8 666.3,582.1 671.7,588.3 677.2,594.7 682.6,601.4 688.0,608.1 693.4,614.3 698.8,620.6 704.2,626.4 709.6,631.7 709.7,628.3 698.0,619.0 688.0,607.6 676.0,595.0 663.8,583.5 650.0,571.5 634.9,559.3 617.0,546.5 598.6,535.2 580.0,526.0 562.4,518.3 545.0,513.5 526.2,509.8 512.0,508.0 498.7,507.4" fill="#a4a4ac"/>
<polygon points="498.7,506.5 516.1,495.4 533.5,484.3 550.8,473.3 568.2,462.6 585.6,452.2 603.0,441.9 620.4,431.8 637.7,421.7 655.1,411.9 672.5,402.1 689.9,392.2 707.2,382.4 724.6,372.5 742.0,362.3 759.4,351.8 776.8,341.2 794.1,330.6 811.5,320.7 828.9,310.8 846.3,300.8 863.7,290.8 881.0,280.7 898.4,271.3 915.8,261.8 921.2,260.2 926.6,259.1 932.0,258.3 937.4,257.8 942.8,257.3 948.2,257.0 953.7,257.1 959.1,257.3 964.5,257.8 969.9,258.5 975.3,259.7 980.7,260.9 986.1,262.5 991.5,264.2 996.9,266.5 1002.3,268.8 1007.7,271.4 1013.1,273.9 1018.5,277.3 1024.0,280.8 1029.4,284.7 1034.8,288.8 1040.2,293.2 1045.6,297.9 1051.0,302.8 1056.4,307.9 1061.8,313.3 1067.2,319.0 1072.6,324.9 1078.0,331.1 1083.4,337.4 1088.8,343.6 1094.3,350.0 1099.7,356.7 1105.1,363.4 1110.5,369.6 1115.9,375.9 1121.3,381.7 1126.7,387.0 1127.0,387.3 709.7,628.3 704.2,626.4 698.8,620.6 693.4,614.3 688.0,608.1 682.6,601.4 677.2,594.7 671.7,588.3 666.3,582.1 660.9,575.8 655.5,569.6 650.1,563.7 644.7,558.0 639.3,552.6 633.9,547.5 628.5,542.6 623.1,537.9 617.7,533.5 612.3,529.4 606.9,525.5 601.4,522.0 596.0,518.6 590.6,516.1 585.2,513.5 579.8,511.2 574.4,508.9 569.0,507.2 563.6,505.6 558.2,504.4 552.8,503.2 547.4,502.5 542.0,502.0 536.6,501.8 531.1,501.7 525.7,502.0 520.3,502.5 514.9,503.0 509.5,503.8 504.1,504.9 498.7,506.5" fill="#a8a8b0"/>
<polygon points="498.7,506.5 513.1,497.3 527.5,488.1 541.8,479.0 556.2,469.9 570.6,461.2 585.0,452.6 599.4,444.0 613.8,435.6 628.1,427.3 642.5,419.0 656.9,410.9 671.3,402.7 685.7,394.6 700.1,386.5 714.4,378.4 728.8,370.0 743.2,361.6 757.6,352.9 772.0,344.1 786.4,335.3 800.7,326.9 815.1,318.7 829.5,310.4 843.9,302.2 858.3,293.9 872.7,285.6 887.0,277.5 901.4,269.6 915.8,261.8 941.1,257.4 926.7,265.3 912.3,273.1 898.0,281.2 883.6,289.5 869.2,297.8 854.8,306.1 840.4,314.3 826.0,322.5 811.7,330.9 797.3,339.7 782.9,348.5 768.5,357.3 754.1,365.7 739.7,374.0 725.4,382.1 711.0,390.3 696.6,398.4 682.2,406.5 667.8,414.6 653.5,422.9 639.1,431.3 624.7,439.6 610.3,448.2 595.9,456.8 581.5,465.5 567.2,474.6 552.8,483.8 538.4,492.9 524.0,502.1" fill="#86ccd8" opacity="1"/>
<polygon points="524.0,502.1 538.4,492.9 552.8,483.8 567.2,474.6 581.5,465.5 595.9,456.8 610.3,448.2 624.7,439.6 639.1,431.3 653.5,422.9 667.8,414.6 682.2,406.5 696.6,398.4 711.0,390.3 725.4,382.1 739.7,374.0 754.1,365.7 768.5,357.3 782.9,348.5 797.3,339.7 811.7,330.9 826.0,322.5 840.4,314.3 854.8,306.1 869.2,297.8 883.6,289.5 898.0,281.2 912.3,273.1 926.7,265.3 941.1,257.4 979.1,260.4 964.7,268.3 950.3,276.1 935.9,284.2 921.5,292.5 907.2,300.8 892.8,309.1 878.4,317.3 864.0,325.5 849.6,333.9 835.2,342.7 820.9,351.5 806.5,360.3 792.1,368.7 777.7,377.0 763.3,385.1 748.9,393.3 734.6,401.4 720.2,409.5 705.8,417.7 691.4,425.9 677.0,434.3 662.6,442.6 648.3,451.2 633.9,459.8 619.5,468.5 605.1,477.7 590.7,486.8 576.4,495.9 562.0,505.1" fill="#98bcc8" opacity="1"/>
<polygon points="712.0,559.0 870.0,478.0 1010.0,411.5 1072.0,377.0 1057.4,357.0 1041.8,365.8 1026.1,374.9 1010.5,383.9 994.9,392.8 979.2,401.8 963.6,410.7 947.9,420.2 932.3,429.8 916.7,439.4 901.0,448.5 885.4,457.6 869.7,466.4 854.1,475.3 838.5,484.1 822.8,492.9 807.2,501.8 791.5,510.9 775.9,519.9 760.2,529.2 744.6,538.5 729.0,548.0 713.3,557.9 697.7,567.8 682.0,577.8" fill="#c0c0cc"/>
<polygon points="669.5,585.8 683.9,576.6 698.3,567.4 712.7,558.3 727.1,549.2 741.4,540.4 755.8,531.8 770.2,523.2 784.6,514.9 799.0,506.6 813.4,498.3 827.7,490.2 842.1,482.0 856.5,473.9 870.9,465.8 885.3,457.6 899.7,449.3 914.0,440.9 928.4,432.2 942.8,423.4 957.2,414.6 971.6,406.2 985.9,397.9 1000.3,389.7 1014.7,381.5 1029.1,373.2 1043.5,364.9 1057.9,356.7 1072.2,348.9 1086.6,341.1 1103.5,361.5 1089.1,369.3 1074.7,377.1 1060.4,385.2 1046.0,393.5 1031.6,401.8 1017.2,410.1 1002.8,418.3 988.4,426.5 974.1,434.9 959.7,443.8 945.3,452.6 930.9,461.3 916.5,469.7 902.1,478.0 887.8,486.1 873.4,494.3 859.0,502.4 844.6,510.5 830.2,518.7 815.8,526.9 801.5,535.3 787.1,543.6 772.7,552.2 758.3,560.8 743.9,569.5 729.5,578.7 715.2,587.8 700.8,597.0 686.4,606.2" fill="#b0b0bc" opacity="1"/>
<polygon points="686.4,606.2 700.8,597.0 715.2,587.8 729.5,578.7 743.9,569.5 758.3,560.8 772.7,552.2 787.1,543.6 801.5,535.3 815.8,526.9 830.2,518.7 844.6,510.5 859.0,502.4 873.4,494.3 887.8,486.1 902.1,478.0 916.5,469.7 930.9,461.3 945.3,452.6 959.7,443.8 974.1,434.9 988.4,426.5 1002.8,418.3 1017.2,410.1 1031.6,401.8 1046.0,393.5 1060.4,385.2 1074.7,377.1 1089.1,369.3 1103.5,361.5 1126.7,387.0 1112.3,394.8 1097.9,402.7 1083.6,410.8 1069.2,419.1 1054.8,427.4 1040.4,435.6 1026.0,443.9 1011.6,452.1 997.3,460.5 982.9,469.3 968.5,478.1 954.1,486.8 939.7,495.2 925.3,503.6 911.0,511.7 896.6,519.8 882.2,527.9 867.8,536.1 853.4,544.2 839.0,552.5 824.7,560.8 810.3,569.2 795.9,577.8 781.5,586.4 767.1,595.1 752.7,604.2 738.4,613.3 724.0,622.5 709.6,631.7" fill="#b6b6c2" opacity="1"/>
<g clip-path="url(#msil)" stroke-linecap="round" fill="none"><path d="M868.0 512.0 L892.0 498.0 L915.0 486.0" stroke="#8a8a94" stroke-width="8.3" opacity="0.45"/>
<path d="M873.4 508.2l0.1 4.6" stroke="#7f7f89" stroke-width="1.7"/>
<path d="M869.3 510.1l-0.6 5.3" stroke="#94949e" stroke-width="1.9"/>
<path d="M865.7 510.3l3.0 1.4" stroke="#7f7f89" stroke-width="2.4"/>
<path d="M869.4 503.6l2.5 2.4" stroke="#878791" stroke-width="2.5"/>
<path d="M876.6 510.0l-3.8 3.7" stroke="#c4c4d0" stroke-width="1.7"/>
<path d="M868.5 511.5l3.7 -5.3" stroke="#8f8f99" stroke-width="2.2"/>
<path d="M875.1 506.0l-0.5 4.2" stroke="#878791" stroke-width="1.7"/>
<path d="M874.5 501.8l-2.3 3.8" stroke="#94949e" stroke-width="2.6"/>
<path d="M876.9 506.4l-0.3 3.8" stroke="#94949e" stroke-width="2.2"/>
<path d="M875.5 499.4l2.6 6.2" stroke="#8f8f99" stroke-width="2.0"/>
<path d="M880.2 508.2l3.6 -1.7" stroke="#94949e" stroke-width="2.0"/>
<path d="M874.8 515.4l3.2 -5.0" stroke="#8f8f99" stroke-width="2.5"/>
<path d="M876.1 500.8l4.6 0.9" stroke="#8f8f99" stroke-width="1.8"/>
<path d="M877.4 501.4l1.4 -6.7" stroke="#7f7f89" stroke-width="2.7"/>
<path d="M885.5 501.0l-3.8 5.0" stroke="#8f8f99" stroke-width="2.6"/>
<path d="M880.0 505.0l-2.6 5.6" stroke="#7f7f89" stroke-width="2.8"/>
<path d="M875.6 502.9l2.2 5.2" stroke="#7f7f89" stroke-width="2.6"/>
<path d="M875.4 497.8l1.7 6.8" stroke="#c4c4d0" stroke-width="2.0"/>
<path d="M878.7 509.3l2.4 -3.7" stroke="#c4c4d0" stroke-width="2.1"/>
<path d="M890.5 499.6l-0.4 3.2" stroke="#8f8f99" stroke-width="1.8"/>
<path d="M885.6 503.3l5.2 -4.2" stroke="#c4c4d0" stroke-width="1.7"/>
<path d="M887.8 500.9l0.8 -4.0" stroke="#878791" stroke-width="2.7"/>
<path d="M882.4 492.7l-1.2 4.5" stroke="#8f8f99" stroke-width="2.6"/>
<path d="M888.3 508.9l2.1 -2.9" stroke="#878791" stroke-width="1.8"/>
<path d="M888.1 500.7l3.5 -5.3" stroke="#878791" stroke-width="2.0"/>
<path d="M893.5 499.4l5.0 1.1" stroke="#94949e" stroke-width="2.4"/>
<path d="M888.8 500.6l4.6 -2.2" stroke="#94949e" stroke-width="2.5"/>
<path d="M888.3 495.8l5.8 2.9" stroke="#94949e" stroke-width="2.1"/>
<path d="M887.5 501.7l0.9 -4.8" stroke="#c4c4d0" stroke-width="1.7"/>
<path d="M891.6 499.2l3.0 3.7" stroke="#7f7f89" stroke-width="2.1"/>
<path d="M890.6 490.2l5.2 1.0" stroke="#94949e" stroke-width="1.7"/>
<path d="M894.5 500.2l0.9 3.2" stroke="#878791" stroke-width="2.5"/>
<path d="M891.9 494.6l6.0 -3.2" stroke="#94949e" stroke-width="2.1"/>
<path d="M890.8 491.5l4.9 0.9" stroke="#c4c4d0" stroke-width="2.3"/>
<path d="M895.9 489.8l2.2 2.6" stroke="#8f8f99" stroke-width="2.6"/>
<path d="M902.7 495.1l1.9 -3.1" stroke="#7f7f89" stroke-width="1.9"/>
<path d="M901.0 495.8l-1.8 5.5" stroke="#7f7f89" stroke-width="2.7"/>
<path d="M905.5 489.6l-0.1 6.5" stroke="#8f8f99" stroke-width="2.3"/>
<path d="M901.1 496.7l2.9 -2.6" stroke="#94949e" stroke-width="2.7"/>
<path d="M901.1 484.2l1.4 5.3" stroke="#878791" stroke-width="2.7"/>
<path d="M904.5 496.7l1.7 -3.5" stroke="#94949e" stroke-width="2.3"/>
<path d="M903.6 486.3l3.9 4.8" stroke="#c4c4d0" stroke-width="2.0"/>
<path d="M906.2 487.6l-3.4 3.4" stroke="#8f8f99" stroke-width="2.9"/>
<path d="M903.9 493.5l2.2 2.6" stroke="#c4c4d0" stroke-width="1.9"/>
<path d="M909.0 494.4l5.7 -4.0" stroke="#94949e" stroke-width="2.8"/>
<path d="M908.3 493.7l2.5 -3.6" stroke="#7f7f89" stroke-width="2.8"/>
<path d="M906.6 486.8l4.1 4.5" stroke="#878791" stroke-width="2.3"/>
<path d="M905.3 490.3l4.4 -3.4" stroke="#7f7f89" stroke-width="2.7"/>
<path d="M917.0 494.0l1.4 -5.8" stroke="#7f7f89" stroke-width="2.6"/>
<path d="M908.8 486.7l3.0 -0.6" stroke="#94949e" stroke-width="2.9"/>
<path d="M907.2 489.9l4.7 -2.6" stroke="#c4c4d0" stroke-width="2.5"/>
<path d="M912.9 480.2l3.1 4.1" stroke="#7f7f89" stroke-width="1.6"/>
<path d="M912.7 483.0l5.8 3.4" stroke="#c4c4d0" stroke-width="3.0"/>
<path d="M917.8 487.1l3.6 -1.3" stroke="#8f8f99" stroke-width="1.9"/>
<path d="M915.0 478.0 L932.0 468.0 L949.0 460.0" stroke="#8a8a94" stroke-width="7.3" opacity="0.45"/>
<path d="M920.4 474.1l-1.2 5.2" stroke="#8f8f99" stroke-width="2.4"/>
<path d="M913.4 480.7l3.5 -4.9" stroke="#c4c4d0" stroke-width="2.5"/>
<path d="M921.1 475.3l-2.4 6.2" stroke="#94949e" stroke-width="1.8"/>
<path d="M913.2 477.6l2.6 -1.7" stroke="#c4c4d0" stroke-width="2.7"/>
<path d="M919.1 471.4l-0.2 6.2" stroke="#878791" stroke-width="1.8"/>
<path d="M919.6 477.9l-3.0 4.3" stroke="#8f8f99" stroke-width="2.6"/>
<path d="M921.2 469.5l-2.8 5.5" stroke="#7f7f89" stroke-width="2.8"/>
<path d="M921.7 473.7l3.9 1.2" stroke="#7f7f89" stroke-width="2.3"/>
<path d="M922.8 472.3l-0.3 6.6" stroke="#7f7f89" stroke-width="2.2"/>
<path d="M927.1 472.0l-3.9 3.7" stroke="#878791" stroke-width="2.6"/>
<path d="M926.6 476.0l1.7 -6.0" stroke="#94949e" stroke-width="2.9"/>
<path d="M926.3 468.1l-4.5 5.0" stroke="#8f8f99" stroke-width="2.9"/>
<path d="M923.6 472.3l3.4 -1.1" stroke="#7f7f89" stroke-width="2.1"/>
<path d="M923.4 463.9l2.6 3.0" stroke="#7f7f89" stroke-width="1.9"/>
<path d="M928.4 463.0l0.9 6.5" stroke="#878791" stroke-width="2.9"/>
<path d="M922.2 467.8l4.0 5.2" stroke="#c4c4d0" stroke-width="1.9"/>
<path d="M926.4 469.2l4.5 2.0" stroke="#878791" stroke-width="1.8"/>
<path d="M928.7 466.9l2.9 -3.6" stroke="#c4c4d0" stroke-width="1.9"/>
<path d="M927.7 464.6l2.9 3.4" stroke="#8f8f99" stroke-width="2.4"/>
<path d="M931.9 467.0l1.9 -4.1" stroke="#94949e" stroke-width="2.5"/>
<path d="M935.1 461.2l-2.5 2.4" stroke="#878791" stroke-width="3.0"/>
<path d="M933.7 460.9l4.0 0.7" stroke="#878791" stroke-width="2.0"/>
<path d="M933.1 468.8l6.0 -2.2" stroke="#8f8f99" stroke-width="2.2"/>
<path d="M942.6 468.2l-3.7 3.8" stroke="#8f8f99" stroke-width="1.7"/>
<path d="M933.0 465.7l2.8 2.5" stroke="#7f7f89" stroke-width="2.0"/>
<path d="M940.6 465.3l5.1 3.5" stroke="#7f7f89" stroke-width="2.5"/>
<path d="M936.3 467.6l3.8 -5.2" stroke="#c4c4d0" stroke-width="1.6"/>
<path d="M948.2 456.1l-2.4 6.2" stroke="#94949e" stroke-width="1.8"/>
<path d="M946.1 463.2l-3.8 5.6" stroke="#878791" stroke-width="2.0"/>
<path d="M940.5 465.6l2.8 -3.2" stroke="#8f8f99" stroke-width="2.3"/>
<path d="M940.1 461.4l3.6 -3.5" stroke="#878791" stroke-width="2.0"/>
<path d="M942.7 460.8l2.0 2.5" stroke="#7f7f89" stroke-width="2.6"/>
<path d="M948.5 461.9l-3.7 3.5" stroke="#878791" stroke-width="2.9"/>
<path d="M943.1 458.5l4.5 3.3" stroke="#c4c4d0" stroke-width="2.4"/>
<path d="M950.4 463.3l2.6 -3.4" stroke="#878791" stroke-width="3.0"/>
<path d="M716.0 592.0 L740.0 580.0 L765.0 568.0 L790.0 556.0" stroke="#8a8a94" stroke-width="11.7" opacity="0.45"/>
<path d="M708.2 592.3l3.7 5.3" stroke="#878791" stroke-width="2.2"/>
<path d="M714.9 590.0l-0.1 6.3" stroke="#7f7f89" stroke-width="1.7"/>
<path d="M718.7 595.0l1.3 2.9" stroke="#c4c4d0" stroke-width="2.8"/>
<path d="M718.8 579.4l1.7 5.5" stroke="#7f7f89" stroke-width="2.2"/>
<path d="M712.9 594.3l2.1 -2.1" stroke="#8f8f99" stroke-width="2.9"/>
<path d="M720.4 593.1l-0.9 3.0" stroke="#8f8f99" stroke-width="1.9"/>
<path d="M722.1 587.5l2.4 -3.8" stroke="#c4c4d0" stroke-width="2.0"/>
<path d="M725.9 587.0l4.2 -4.4" stroke="#7f7f89" stroke-width="2.0"/>
<path d="M712.3 596.6l5.2 1.1" stroke="#c4c4d0" stroke-width="1.6"/>
<path d="M716.2 588.7l0.9 3.2" stroke="#94949e" stroke-width="2.8"/>
<path d="M727.8 588.9l5.2 -2.7" stroke="#94949e" stroke-width="2.1"/>
<path d="M719.2 588.5l1.0 4.9" stroke="#8f8f99" stroke-width="2.6"/>
<path d="M720.0 582.4l3.6 -5.2" stroke="#94949e" stroke-width="2.5"/>
<path d="M728.0 586.4l-0.7 5.0" stroke="#94949e" stroke-width="2.4"/>
<path d="M729.7 586.7l3.9 3.7" stroke="#878791" stroke-width="1.7"/>
<path d="M727.2 583.1l4.3 0.9" stroke="#7f7f89" stroke-width="2.1"/>
<path d="M726.4 585.0l1.7 -5.2" stroke="#94949e" stroke-width="2.6"/>
<path d="M735.9 584.4l0.4 -4.8" stroke="#7f7f89" stroke-width="2.6"/>
<path d="M737.7 579.0l-2.3 2.5" stroke="#94949e" stroke-width="1.7"/>
<path d="M732.6 584.1l0.2 -3.3" stroke="#8f8f99" stroke-width="1.9"/>
<path d="M733.6 586.5l3.8 -4.1" stroke="#c4c4d0" stroke-width="2.3"/>
<path d="M738.5 592.4l-0.5 -6.6" stroke="#8f8f99" stroke-width="2.7"/>
<path d="M738.5 578.1l-1.9 3.3" stroke="#94949e" stroke-width="1.8"/>
<path d="M734.1 577.5l1.4 5.6" stroke="#94949e" stroke-width="2.4"/>
<path d="M741.4 575.3l4.4 2.3" stroke="#7f7f89" stroke-width="2.6"/>
<path d="M741.1 585.0l0.5 -5.0" stroke="#c4c4d0" stroke-width="2.3"/>
<path d="M740.4 574.4l3.3 4.1" stroke="#8f8f99" stroke-width="3.0"/>
<path d="M748.3 581.1l-0.6 -4.8" stroke="#94949e" stroke-width="3.0"/>
<path d="M745.0 584.8l2.8 -3.6" stroke="#878791" stroke-width="1.7"/>
<path d="M748.4 575.2l5.0 1.1" stroke="#8f8f99" stroke-width="1.8"/>
<path d="M744.8 576.4l-0.9 3.3" stroke="#8f8f99" stroke-width="1.9"/>
<path d="M746.8 569.5l0.7 -3.6" stroke="#c4c4d0" stroke-width="2.6"/>
<path d="M754.3 577.6l0.4 -3.5" stroke="#8f8f99" stroke-width="2.1"/>
<path d="M752.1 569.0l2.2 2.1" stroke="#8f8f99" stroke-width="2.8"/>
<path d="M755.4 570.7l2.5 2.8" stroke="#7f7f89" stroke-width="2.9"/>
<path d="M750.5 566.6l1.8 2.7" stroke="#c4c4d0" stroke-width="3.0"/>
<path d="M752.5 569.4l-0.6 6.7" stroke="#8f8f99" stroke-width="2.8"/>
<path d="M751.1 572.8l4.0 4.9" stroke="#8f8f99" stroke-width="2.5"/>
<path d="M753.8 578.7l2.8 -2.9" stroke="#94949e" stroke-width="2.0"/>
<path d="M753.6 565.5l0.7 4.7" stroke="#7f7f89" stroke-width="2.7"/>
<path d="M755.0 577.4l3.8 -5.6" stroke="#94949e" stroke-width="1.9"/>
<path d="M760.7 574.6l5.9 0.8" stroke="#c4c4d0" stroke-width="2.5"/>
<path d="M749.3 573.5l3.7 -1.9" stroke="#7f7f89" stroke-width="2.9"/>
<path d="M767.0 568.2l-0.6 4.8" stroke="#8f8f99" stroke-width="2.0"/>
<path d="M758.2 567.8l1.2 6.8" stroke="#8f8f99" stroke-width="2.2"/>
<path d="M758.0 574.0l3.8 -3.6" stroke="#c4c4d0" stroke-width="1.8"/>
<path d="M761.7 577.1l3.0 -4.0" stroke="#c4c4d0" stroke-width="2.4"/>
<path d="M764.5 568.0l3.9 -5.8" stroke="#c4c4d0" stroke-width="2.2"/>
<path d="M768.3 570.4l-0.6 3.3" stroke="#8f8f99" stroke-width="2.4"/>
<path d="M762.6 563.8l2.2 3.4" stroke="#94949e" stroke-width="1.9"/>
<path d="M755.2 569.4l3.6 3.0" stroke="#c4c4d0" stroke-width="2.6"/>
<path d="M764.0 558.2l3.3 -2.8" stroke="#7f7f89" stroke-width="2.3"/>
<path d="M762.7 563.7l-2.5 2.4" stroke="#94949e" stroke-width="2.3"/>
<path d="M771.9 567.6l4.0 -5.3" stroke="#c4c4d0" stroke-width="2.2"/>
<path d="M773.1 562.0l0.9 -4.1" stroke="#7f7f89" stroke-width="1.8"/>
<path d="M765.0 571.4l2.8 -6.0" stroke="#c4c4d0" stroke-width="3.0"/>
<path d="M776.0 566.0l-0.6 -4.5" stroke="#94949e" stroke-width="2.8"/>
<path d="M780.2 560.9l0.2 -3.4" stroke="#878791" stroke-width="1.8"/>
<path d="M771.7 565.3l3.9 4.4" stroke="#c4c4d0" stroke-width="1.7"/>
<path d="M783.1 562.3l3.5 0.4" stroke="#94949e" stroke-width="2.9"/>
<path d="M785.2 556.5l0.0 5.5" stroke="#94949e" stroke-width="2.5"/>
<path d="M778.1 560.3l4.1 0.8" stroke="#94949e" stroke-width="1.9"/>
<path d="M771.0 559.9l3.0 4.5" stroke="#7f7f89" stroke-width="2.4"/>
<path d="M784.7 561.9l0.4 -4.2" stroke="#878791" stroke-width="2.3"/>
<path d="M780.1 567.1l2.6 -1.7" stroke="#c4c4d0" stroke-width="2.6"/>
<path d="M775.9 551.3l2.5 2.8" stroke="#c4c4d0" stroke-width="1.7"/>
<path d="M777.9 555.1l6.0 -3.0" stroke="#878791" stroke-width="2.3"/>
<path d="M790.5 557.7l0.9 4.4" stroke="#c4c4d0" stroke-width="1.9"/>
<path d="M781.5 552.7l0.9 4.9" stroke="#878791" stroke-width="2.3"/>
<path d="M797.5 556.9l4.6 -4.3" stroke="#878791" stroke-width="2.3"/>
<path d="M784.2 556.3l0.7 4.1" stroke="#94949e" stroke-width="2.3"/>
<path d="M789.5 558.2l4.7 -1.4" stroke="#7f7f89" stroke-width="2.9"/>
<path d="M784.4 551.2l3.1 -0.8" stroke="#7f7f89" stroke-width="3.0"/>
<path d="M715.0 612.0 L722.0 600.0 L735.0 588.0" stroke="#8a8a94" stroke-width="10.4" opacity="0.45"/>
<path d="M715.1 613.6l4.6 -3.6" stroke="#878791" stroke-width="2.2"/>
<path d="M708.3 612.4l1.3 6.9" stroke="#878791" stroke-width="2.1"/>
<path d="M716.9 610.4l4.5 -2.3" stroke="#c4c4d0" stroke-width="1.6"/>
<path d="M713.7 613.3l3.6 -5.9" stroke="#c4c4d0" stroke-width="1.8"/>
<path d="M712.7 602.8l3.3 0.5" stroke="#c4c4d0" stroke-width="2.9"/>
<path d="M716.3 600.3l5.1 3.1" stroke="#c4c4d0" stroke-width="2.1"/>
<path d="M719.4 598.6l0.5 4.7" stroke="#7f7f89" stroke-width="2.6"/>
<path d="M715.6 607.5l5.1 -4.3" stroke="#878791" stroke-width="2.1"/>
<path d="M726.5 603.0l-0.5 -4.6" stroke="#c4c4d0" stroke-width="1.7"/>
<path d="M711.2 600.1l5.5 2.8" stroke="#7f7f89" stroke-width="2.0"/>
<path d="M714.2 599.2l3.0 3.2" stroke="#8f8f99" stroke-width="2.1"/>
<path d="M722.5 602.4l-0.4 6.0" stroke="#8f8f99" stroke-width="2.9"/>
<path d="M725.7 596.3l4.2 4.3" stroke="#7f7f89" stroke-width="1.6"/>
<path d="M730.4 610.8l3.6 -4.6" stroke="#c4c4d0" stroke-width="2.9"/>
<path d="M719.9 593.5l3.2 -5.8" stroke="#c4c4d0" stroke-width="1.8"/>
<path d="M722.6 602.5l0.1 -6.2" stroke="#8f8f99" stroke-width="2.8"/>
<path d="M712.7 599.7l3.8 -2.1" stroke="#8f8f99" stroke-width="2.2"/>
<path d="M723.9 592.6l-0.3 3.8" stroke="#878791" stroke-width="1.9"/>
<path d="M725.8 599.6l4.0 2.9" stroke="#94949e" stroke-width="2.1"/>
<path d="M722.2 600.1l3.8 -5.8" stroke="#8f8f99" stroke-width="2.5"/>
<path d="M722.6 594.4l3.0 -4.0" stroke="#c4c4d0" stroke-width="1.8"/>
<path d="M725.7 598.7l4.3 -3.4" stroke="#878791" stroke-width="2.6"/>
<path d="M724.4 584.0l3.1 2.8" stroke="#8f8f99" stroke-width="2.4"/>
<path d="M730.3 585.4l2.2 3.4" stroke="#c4c4d0" stroke-width="1.9"/>
<path d="M728.8 601.4l2.8 -3.0" stroke="#94949e" stroke-width="1.9"/>
<path d="M727.3 586.0l6.4 2.8" stroke="#94949e" stroke-width="2.3"/>
<path d="M722.6 594.1l5.7 4.1" stroke="#7f7f89" stroke-width="1.6"/>
<path d="M728.8 594.0l6.3 -2.1" stroke="#7f7f89" stroke-width="2.8"/>
<path d="M735.3 591.4l2.3 -3.0" stroke="#94949e" stroke-width="1.9"/>
<path d="M729.3 584.3l6.0 2.5" stroke="#c4c4d0" stroke-width="2.4"/>
<path d="M719.3 582.1l5.3 1.0" stroke="#94949e" stroke-width="2.1"/>
<path d="M733.1 586.6l3.3 1.4" stroke="#878791" stroke-width="3.0"/>
<path d="M1030.0 418.0 L1060.0 400.0 L1090.0 384.0 L1108.0 372.0" stroke="#8a8a94" stroke-width="11.7" opacity="0.45"/>
<path d="M1029.5 415.9l4.7 3.1" stroke="#878791" stroke-width="2.7"/>
<path d="M1030.9 418.8l1.9 4.1" stroke="#94949e" stroke-width="2.0"/>
<path d="M1026.9 417.4l2.8 -4.1" stroke="#c4c4d0" stroke-width="1.7"/>
<path d="M1024.1 418.5l4.2 3.8" stroke="#878791" stroke-width="2.5"/>
<path d="M1032.8 416.2l3.7 2.7" stroke="#8f8f99" stroke-width="2.2"/>
<path d="M1042.0 417.2l1.1 4.5" stroke="#7f7f89" stroke-width="2.0"/>
<path d="M1038.1 415.8l-3.1 3.5" stroke="#7f7f89" stroke-width="2.8"/>
<path d="M1030.9 413.0l1.2 4.4" stroke="#c4c4d0" stroke-width="1.9"/>
<path d="M1038.0 404.5l3.3 1.6" stroke="#7f7f89" stroke-width="2.7"/>
<path d="M1045.4 410.9l1.5 -4.2" stroke="#878791" stroke-width="1.8"/>
<path d="M1042.0 407.9l4.8 2.9" stroke="#c4c4d0" stroke-width="1.7"/>
<path d="M1048.9 414.3l-4.1 4.3" stroke="#878791" stroke-width="1.8"/>
<path d="M1038.7 401.5l2.2 3.0" stroke="#7f7f89" stroke-width="1.8"/>
<path d="M1042.6 415.8l2.8 -5.5" stroke="#878791" stroke-width="2.0"/>
<path d="M1042.5 403.9l3.1 3.8" stroke="#7f7f89" stroke-width="2.5"/>
<path d="M1049.3 398.4l-0.4 -5.8" stroke="#878791" stroke-width="2.5"/>
<path d="M1042.6 402.3l4.8 -2.6" stroke="#878791" stroke-width="2.8"/>
<path d="M1049.1 404.0l2.7 -1.6" stroke="#94949e" stroke-width="1.8"/>
<path d="M1044.0 402.7l2.5 3.1" stroke="#878791" stroke-width="1.7"/>
<path d="M1046.6 402.9l-3.7 4.3" stroke="#8f8f99" stroke-width="1.8"/>
<path d="M1050.7 399.8l-2.5 5.9" stroke="#8f8f99" stroke-width="2.5"/>
<path d="M1049.7 405.7l1.4 4.5" stroke="#8f8f99" stroke-width="2.2"/>
<path d="M1054.3 407.0l0.0 -3.0" stroke="#c4c4d0" stroke-width="2.3"/>
<path d="M1056.6 401.5l2.8 -5.4" stroke="#c4c4d0" stroke-width="2.8"/>
<path d="M1059.3 405.0l0.6 -3.2" stroke="#8f8f99" stroke-width="2.2"/>
<path d="M1057.7 397.6l3.7 3.4" stroke="#7f7f89" stroke-width="1.7"/>
<path d="M1055.6 406.4l3.5 -4.8" stroke="#94949e" stroke-width="1.7"/>
<path d="M1072.1 394.0l-3.8 4.1" stroke="#878791" stroke-width="1.6"/>
<path d="M1062.1 395.2l3.7 4.6" stroke="#7f7f89" stroke-width="1.9"/>
<path d="M1066.0 403.6l0.6 -6.2" stroke="#878791" stroke-width="2.6"/>
<path d="M1067.4 387.1l2.6 -3.6" stroke="#8f8f99" stroke-width="1.8"/>
<path d="M1063.1 389.8l-1.5 6.1" stroke="#878791" stroke-width="2.0"/>
<path d="M1065.7 395.5l0.2 -4.0" stroke="#94949e" stroke-width="1.9"/>
<path d="M1063.2 397.8l2.5 2.7" stroke="#878791" stroke-width="2.5"/>
<path d="M1076.3 379.5l1.5 6.4" stroke="#878791" stroke-width="2.7"/>
<path d="M1066.7 394.2l3.2 4.0" stroke="#8f8f99" stroke-width="3.0"/>
<path d="M1070.0 395.2l1.6 -5.1" stroke="#7f7f89" stroke-width="2.0"/>
<path d="M1067.1 387.4l-2.3 3.9" stroke="#8f8f99" stroke-width="2.0"/>
<path d="M1075.8 395.7l1.4 4.2" stroke="#7f7f89" stroke-width="2.2"/>
<path d="M1071.8 390.3l6.0 -3.3" stroke="#8f8f99" stroke-width="2.7"/>
<path d="M1074.2 387.7l3.4 5.9" stroke="#94949e" stroke-width="2.9"/>
<path d="M1078.5 388.7l1.1 5.9" stroke="#878791" stroke-width="1.8"/>
<path d="M1076.2 389.3l-2.4 4.0" stroke="#8f8f99" stroke-width="2.9"/>
<path d="M1071.4 395.1l4.5 -3.1" stroke="#7f7f89" stroke-width="1.6"/>
<path d="M1083.6 382.9l3.6 2.2" stroke="#94949e" stroke-width="2.1"/>
<path d="M1081.5 385.5l3.3 -2.6" stroke="#878791" stroke-width="1.9"/>
<path d="M1088.4 390.7l-2.3 2.8" stroke="#7f7f89" stroke-width="2.9"/>
<path d="M1080.4 392.9l4.4 -2.0" stroke="#7f7f89" stroke-width="2.5"/>
<path d="M1081.9 382.1l1.8 3.7" stroke="#7f7f89" stroke-width="1.7"/>
<path d="M1085.2 383.6l-3.6 4.0" stroke="#94949e" stroke-width="2.2"/>
<path d="M1086.8 384.6l-2.3 3.3" stroke="#7f7f89" stroke-width="1.7"/>
<path d="M1085.6 386.5l-0.2 3.7" stroke="#878791" stroke-width="1.7"/>
<path d="M1091.4 381.8l5.2 0.6" stroke="#878791" stroke-width="1.8"/>
<path d="M1081.8 388.5l4.6 -3.1" stroke="#c4c4d0" stroke-width="2.7"/>
<path d="M1095.4 383.1l2.7 -1.8" stroke="#7f7f89" stroke-width="3.0"/>
<path d="M1086.3 384.8l1.3 -2.7" stroke="#c4c4d0" stroke-width="2.6"/>
<path d="M1100.8 375.8l-0.4 -5.6" stroke="#878791" stroke-width="1.9"/>
<path d="M1094.4 378.5l5.3 1.7" stroke="#7f7f89" stroke-width="2.1"/>
<path d="M1091.7 380.3l0.8 4.0" stroke="#94949e" stroke-width="2.6"/>
<path d="M1092.7 379.2l-3.0 2.9" stroke="#878791" stroke-width="1.7"/>
<path d="M1104.2 377.3l-0.2 4.0" stroke="#878791" stroke-width="2.8"/>
<path d="M1092.4 370.5l5.8 -1.4" stroke="#8f8f99" stroke-width="1.9"/>
<path d="M1094.3 370.8l0.5 -3.9" stroke="#94949e" stroke-width="2.3"/>
<path d="M1110.4 372.6l-3.6 5.4" stroke="#c4c4d0" stroke-width="2.9"/>
<path d="M1096.0 370.9l3.6 -2.2" stroke="#878791" stroke-width="2.1"/>
<path d="M1099.1 370.1l-0.6 6.6" stroke="#878791" stroke-width="1.6"/>
<path d="M1095.6 381.1l6.6 1.2" stroke="#8f8f99" stroke-width="3.0"/>
<path d="M1100.7 369.7l3.5 0.4" stroke="#7f7f89" stroke-width="2.6"/>
<path d="M1105.6 378.8l5.3 0.8" stroke="#8f8f99" stroke-width="1.9"/>
<path d="M1115.1 368.6l-2.2 2.4" stroke="#c4c4d0" stroke-width="1.7"/>
<path d="M1062.0 356.0 L1080.0 368.0 L1100.0 380.0 L1112.0 392.0" stroke="#8a8a94" stroke-width="13.0" opacity="0.45"/>
<path d="M1062.2 357.9l2.1 -2.3" stroke="#7f7f89" stroke-width="2.8"/>
<path d="M1064.8 356.2l1.3 3.3" stroke="#878791" stroke-width="2.0"/>
<path d="M1058.3 349.4l1.3 2.8" stroke="#8f8f99" stroke-width="2.9"/>
<path d="M1063.6 350.3l3.5 2.8" stroke="#8f8f99" stroke-width="2.7"/>
<path d="M1073.4 355.5l-2.7 5.8" stroke="#94949e" stroke-width="2.6"/>
<path d="M1061.2 359.6l-0.5 -5.0" stroke="#7f7f89" stroke-width="2.1"/>
<path d="M1062.7 357.6l3.3 2.0" stroke="#7f7f89" stroke-width="2.4"/>
<path d="M1071.6 351.4l1.8 2.4" stroke="#878791" stroke-width="2.0"/>
<path d="M1056.7 361.8l4.9 0.5" stroke="#c4c4d0" stroke-width="2.6"/>
<path d="M1065.9 362.3l5.2 -1.2" stroke="#94949e" stroke-width="2.0"/>
<path d="M1071.0 361.9l2.8 -2.7" stroke="#878791" stroke-width="2.3"/>
<path d="M1073.0 355.3l4.0 4.6" stroke="#c4c4d0" stroke-width="2.7"/>
<path d="M1073.8 356.2l-3.4 4.4" stroke="#8f8f99" stroke-width="1.7"/>
<path d="M1065.3 368.7l3.3 -5.0" stroke="#c4c4d0" stroke-width="2.8"/>
<path d="M1074.4 353.1l3.9 1.6" stroke="#c4c4d0" stroke-width="2.9"/>
<path d="M1069.2 362.2l-1.1 6.8" stroke="#878791" stroke-width="2.9"/>
<path d="M1077.9 363.0l5.1 -3.3" stroke="#94949e" stroke-width="2.5"/>
<path d="M1074.2 355.8l1.5 4.9" stroke="#c4c4d0" stroke-width="2.5"/>
<path d="M1087.9 366.3l2.8 3.8" stroke="#8f8f99" stroke-width="2.4"/>
<path d="M1079.9 371.5l4.1 -3.7" stroke="#878791" stroke-width="2.3"/>
<path d="M1081.6 367.4l2.9 5.0" stroke="#94949e" stroke-width="1.8"/>
<path d="M1074.6 371.8l5.8 -1.3" stroke="#94949e" stroke-width="2.3"/>
<path d="M1078.0 377.0l4.7 -4.9" stroke="#8f8f99" stroke-width="3.0"/>
<path d="M1074.4 365.1l5.5 1.3" stroke="#878791" stroke-width="2.1"/>
<path d="M1082.2 376.5l5.5 -2.1" stroke="#c4c4d0" stroke-width="2.0"/>
<path d="M1081.8 365.0l2.8 2.0" stroke="#878791" stroke-width="2.8"/>
<path d="M1083.0 369.8l-0.5 -4.6" stroke="#c4c4d0" stroke-width="2.6"/>
<path d="M1095.2 373.6l-3.0 2.9" stroke="#7f7f89" stroke-width="1.8"/>
<path d="M1092.3 371.3l-1.8 2.5" stroke="#878791" stroke-width="2.9"/>
<path d="M1082.0 379.8l2.2 -4.9" stroke="#c4c4d0" stroke-width="2.8"/>
<path d="M1096.9 372.8l-3.7 4.3" stroke="#7f7f89" stroke-width="2.2"/>
<path d="M1085.9 375.5l3.1 4.9" stroke="#c4c4d0" stroke-width="1.9"/>
<path d="M1085.4 379.4l2.4 -5.0" stroke="#8f8f99" stroke-width="2.8"/>
<path d="M1085.1 371.4l1.3 -5.3" stroke="#c4c4d0" stroke-width="2.3"/>
<path d="M1090.9 376.4l4.1 -1.2" stroke="#7f7f89" stroke-width="2.1"/>
<path d="M1099.5 374.6l1.9 -2.8" stroke="#8f8f99" stroke-width="2.4"/>
<path d="M1088.8 370.8l6.2 -2.8" stroke="#878791" stroke-width="2.3"/>
<path d="M1081.6 365.0l3.4 3.4" stroke="#878791" stroke-width="2.6"/>
<path d="M1095.9 367.1l-0.3 6.2" stroke="#8f8f99" stroke-width="2.3"/>
<path d="M1098.9 385.9l2.2 -4.3" stroke="#878791" stroke-width="2.1"/>
<path d="M1091.6 383.7l4.2 3.4" stroke="#7f7f89" stroke-width="2.0"/>
<path d="M1096.9 384.7l0.6 -3.0" stroke="#c4c4d0" stroke-width="2.9"/>
<path d="M1095.2 381.3l1.0 3.3" stroke="#8f8f99" stroke-width="2.6"/>
<path d="M1095.5 379.3l-5.0 4.8" stroke="#c4c4d0" stroke-width="2.2"/>
<path d="M1094.3 380.9l3.8 -4.8" stroke="#878791" stroke-width="2.3"/>
<path d="M1104.3 377.9l-3.6 5.1" stroke="#878791" stroke-width="2.1"/>
<path d="M1099.3 385.8l1.0 -4.1" stroke="#94949e" stroke-width="2.5"/>
<path d="M1104.4 377.1l1.0 -6.3" stroke="#8f8f99" stroke-width="2.6"/>
<path d="M1104.4 382.1l-0.1 5.7" stroke="#c4c4d0" stroke-width="1.6"/>
<path d="M1097.2 381.7l2.6 5.0" stroke="#8f8f99" stroke-width="2.3"/>
<path d="M1095.7 391.7l1.2 -3.1" stroke="#8f8f99" stroke-width="1.8"/>
<path d="M1102.3 381.7l0.3 3.2" stroke="#94949e" stroke-width="2.9"/>
<path d="M1108.5 384.8l3.7 -2.4" stroke="#94949e" stroke-width="1.6"/>
<path d="M1106.5 379.4l3.2 0.9" stroke="#8f8f99" stroke-width="2.0"/>
<path d="M1100.2 377.1l5.4 3.4" stroke="#878791" stroke-width="2.7"/>
<path d="M1105.1 389.7l0.5 3.8" stroke="#c4c4d0" stroke-width="2.7"/>
<path d="M1105.7 393.0l5.0 -2.8" stroke="#7f7f89" stroke-width="2.5"/>
<path d="M1104.6 380.9l-3.9 5.0" stroke="#878791" stroke-width="2.3"/>
<path d="M1103.7 393.0l5.0 -3.2" stroke="#c4c4d0" stroke-width="2.5"/>
<path d="M1109.3 388.1l3.5 2.1" stroke="#878791" stroke-width="2.8"/>
<path d="M1112.6 390.7l0.8 -3.1" stroke="#c4c4d0" stroke-width="2.9"/>
<path d="M1110.4 399.0l0.2 -3.6" stroke="#94949e" stroke-width="2.8"/>
<path d="M1106.3 391.7l4.2 1.0" stroke="#94949e" stroke-width="2.3"/>
<path d="M1119.8 390.3l0.4 4.5" stroke="#c4c4d0" stroke-width="3.0"/>
<path d="M931.0 262.0 L945.0 265.0 L957.0 268.0" stroke="#8a8a94" stroke-width="6.5" opacity="0.45"/>
<path d="M930.6 259.9l4.3 1.1" stroke="#7f7f89" stroke-width="1.6"/>
<path d="M934.3 254.6l5.4 4.0" stroke="#8f8f99" stroke-width="2.7"/>
<path d="M928.2 258.6l4.3 2.4" stroke="#878791" stroke-width="1.6"/>
<path d="M937.5 265.6l1.6 -4.1" stroke="#8f8f99" stroke-width="2.1"/>
<path d="M936.2 256.8l-3.0 5.9" stroke="#8f8f99" stroke-width="2.2"/>
<path d="M937.2 265.1l0.2 -3.2" stroke="#8f8f99" stroke-width="2.0"/>
<path d="M935.3 262.1l1.0 -4.9" stroke="#8f8f99" stroke-width="2.8"/>
<path d="M935.9 261.4l-0.1 5.6" stroke="#7f7f89" stroke-width="2.1"/>
<path d="M940.1 262.3l0.7 3.4" stroke="#7f7f89" stroke-width="2.7"/>
<path d="M938.0 258.6l4.8 2.1" stroke="#c4c4d0" stroke-width="2.4"/>
<path d="M940.4 261.1l3.1 1.4" stroke="#7f7f89" stroke-width="1.9"/>
<path d="M942.1 268.4l2.0 -5.3" stroke="#94949e" stroke-width="2.9"/>
<path d="M942.9 260.5l-1.2 3.4" stroke="#94949e" stroke-width="2.8"/>
<path d="M944.9 265.2l5.5 1.5" stroke="#c4c4d0" stroke-width="2.5"/>
<path d="M943.5 259.3l2.3 -3.0" stroke="#7f7f89" stroke-width="2.2"/>
<path d="M945.3 265.1l3.8 4.2" stroke="#8f8f99" stroke-width="2.8"/>
<path d="M948.7 265.1l4.9 -1.9" stroke="#8f8f99" stroke-width="2.8"/>
<path d="M946.2 266.3l3.4 -2.6" stroke="#c4c4d0" stroke-width="2.4"/>
<path d="M953.7 262.3l-2.3 2.3" stroke="#94949e" stroke-width="2.3"/>
<path d="M949.6 262.8l3.5 3.1" stroke="#c4c4d0" stroke-width="2.2"/>
<path d="M951.2 261.4l4.3 3.2" stroke="#878791" stroke-width="2.3"/>
<path d="M954.2 267.5l1.0 -3.2" stroke="#c4c4d0" stroke-width="1.9"/>
<path d="M952.2 269.9l4.1 -2.3" stroke="#7f7f89" stroke-width="2.6"/>
<path d="M956.8 261.0l4.1 5.0" stroke="#878791" stroke-width="2.8"/>
<path d="M957.8 270.6l3.3 -2.4" stroke="#94949e" stroke-width="1.9"/>
<path d="M970.0 280.0 L990.0 287.0 L1010.0 298.0 L1028.0 311.0" stroke="#8a8a94" stroke-width="9.1" opacity="0.45"/>
<path d="M966.8 285.5l4.3 -1.2" stroke="#878791" stroke-width="2.6"/>
<path d="M969.3 284.1l4.9 1.7" stroke="#c4c4d0" stroke-width="2.2"/>
<path d="M970.1 276.1l0.1 3.2" stroke="#7f7f89" stroke-width="1.6"/>
<path d="M975.6 286.7l4.0 4.1" stroke="#94949e" stroke-width="1.7"/>
<path d="M975.3 282.3l2.7 4.7" stroke="#c4c4d0" stroke-width="2.5"/>
<path d="M972.7 275.0l2.4 4.7" stroke="#c4c4d0" stroke-width="2.3"/>
<path d="M973.9 290.0l3.9 -4.8" stroke="#8f8f99" stroke-width="2.9"/>
<path d="M969.2 282.1l4.1 -2.2" stroke="#c4c4d0" stroke-width="2.7"/>
<path d="M970.4 286.0l3.6 -5.0" stroke="#94949e" stroke-width="2.1"/>
<path d="M980.8 276.6l4.6 5.2" stroke="#94949e" stroke-width="2.1"/>
<path d="M980.6 287.3l-1.8 2.5" stroke="#878791" stroke-width="2.4"/>
<path d="M980.9 276.7l2.1 6.6" stroke="#878791" stroke-width="2.1"/>
<path d="M977.7 280.7l2.3 -6.2" stroke="#c4c4d0" stroke-width="2.0"/>
<path d="M985.3 281.8l3.8 1.4" stroke="#878791" stroke-width="2.4"/>
<path d="M987.6 287.9l3.4 1.2" stroke="#94949e" stroke-width="1.8"/>
<path d="M986.2 281.2l-3.6 5.6" stroke="#8f8f99" stroke-width="2.3"/>
<path d="M992.0 284.0l-2.8 5.5" stroke="#878791" stroke-width="2.7"/>
<path d="M988.7 282.0l2.4 -2.2" stroke="#c4c4d0" stroke-width="2.3"/>
<path d="M990.6 284.7l5.2 -1.4" stroke="#7f7f89" stroke-width="2.7"/>
<path d="M982.4 287.9l1.5 -4.9" stroke="#8f8f99" stroke-width="2.7"/>
<path d="M991.7 297.1l3.9 -3.2" stroke="#8f8f99" stroke-width="2.8"/>
<path d="M992.6 281.7l-1.4 4.8" stroke="#878791" stroke-width="1.9"/>
<path d="M999.8 292.4l3.7 -5.0" stroke="#8f8f99" stroke-width="2.1"/>
<path d="M995.3 283.2l-1.9 5.8" stroke="#878791" stroke-width="1.9"/>
<path d="M992.5 297.3l0.6 -3.4" stroke="#c4c4d0" stroke-width="2.7"/>
<path d="M995.2 290.2l2.3 -2.1" stroke="#8f8f99" stroke-width="2.3"/>
<path d="M994.7 296.8l3.8 0.7" stroke="#94949e" stroke-width="2.3"/>
<path d="M998.0 291.1l-1.3 6.6" stroke="#8f8f99" stroke-width="2.2"/>
<path d="M999.9 296.4l2.9 -5.6" stroke="#878791" stroke-width="2.0"/>
<path d="M995.2 294.4l6.5 2.5" stroke="#c4c4d0" stroke-width="1.7"/>
<path d="M1005.9 293.4l4.4 0.6" stroke="#c4c4d0" stroke-width="2.3"/>
<path d="M998.4 288.0l3.9 4.0" stroke="#7f7f89" stroke-width="2.6"/>
<path d="M1002.7 293.3l5.0 1.6" stroke="#7f7f89" stroke-width="2.9"/>
<path d="M1006.1 293.4l-1.6 4.5" stroke="#878791" stroke-width="2.1"/>
<path d="M999.6 299.3l3.8 -0.8" stroke="#7f7f89" stroke-width="2.9"/>
<path d="M1006.8 294.5l3.4 3.9" stroke="#7f7f89" stroke-width="2.8"/>
<path d="M1007.1 299.8l4.8 1.5" stroke="#c4c4d0" stroke-width="1.7"/>
<path d="M1008.8 295.9l2.2 -2.1" stroke="#878791" stroke-width="2.5"/>
<path d="M1014.1 294.7l1.4 4.6" stroke="#7f7f89" stroke-width="2.3"/>
<path d="M1008.2 292.3l1.9 3.0" stroke="#c4c4d0" stroke-width="2.1"/>
<path d="M1012.6 298.0l0.2 -3.6" stroke="#7f7f89" stroke-width="2.3"/>
<path d="M1010.1 302.8l3.4 -1.3" stroke="#878791" stroke-width="1.7"/>
<path d="M1016.9 302.4l-4.3 4.9" stroke="#878791" stroke-width="2.7"/>
<path d="M1015.1 298.9l3.0 3.4" stroke="#7f7f89" stroke-width="2.5"/>
<path d="M1014.0 302.6l2.6 -3.4" stroke="#878791" stroke-width="2.3"/>
<path d="M1018.5 301.9l2.4 3.1" stroke="#7f7f89" stroke-width="1.9"/>
<path d="M1016.4 308.7l1.1 -3.4" stroke="#878791" stroke-width="2.0"/>
<path d="M1019.6 304.7l0.2 -3.1" stroke="#94949e" stroke-width="2.8"/>
<path d="M1014.8 305.0l0.5 4.0" stroke="#7f7f89" stroke-width="2.0"/>
<path d="M1022.3 309.8l-0.3 -6.9" stroke="#7f7f89" stroke-width="2.5"/>
<path d="M1018.0 305.6l5.4 -3.3" stroke="#7f7f89" stroke-width="2.0"/>
<path d="M1020.1 308.9l4.6 -1.0" stroke="#8f8f99" stroke-width="3.0"/>
<path d="M1022.5 309.4l2.5 -3.3" stroke="#878791" stroke-width="1.7"/>
<path d="M1021.8 307.9l3.4 4.4" stroke="#c4c4d0" stroke-width="2.7"/>
<path d="M1026.1 304.8l1.7 4.5" stroke="#94949e" stroke-width="2.0"/>
<path d="M1028.3 310.0l2.7 6.1" stroke="#878791" stroke-width="2.0"/>
<path d="M1029.7 312.0l2.3 -2.9" stroke="#878791" stroke-width="2.6"/>
<path d="M1054.0 328.0 L1066.0 336.0 L1079.0 345.0" stroke="#8a8a94" stroke-width="7.8" opacity="0.45"/>
<path d="M1050.7 326.1l5.5 -3.1" stroke="#94949e" stroke-width="2.6"/>
<path d="M1056.3 320.9l2.1 2.9" stroke="#878791" stroke-width="2.4"/>
<path d="M1053.3 330.8l3.2 -4.8" stroke="#94949e" stroke-width="2.2"/>
<path d="M1057.8 329.0l3.8 2.2" stroke="#8f8f99" stroke-width="2.8"/>
<path d="M1055.4 328.8l-0.3 -4.6" stroke="#c4c4d0" stroke-width="1.8"/>
<path d="M1055.6 329.6l2.8 4.4" stroke="#8f8f99" stroke-width="1.7"/>
<path d="M1059.5 328.5l2.0 6.1" stroke="#8f8f99" stroke-width="2.3"/>
<path d="M1058.3 333.6l2.0 -2.6" stroke="#8f8f99" stroke-width="2.6"/>
<path d="M1064.9 327.1l1.0 6.4" stroke="#94949e" stroke-width="2.7"/>
<path d="M1061.9 338.6l3.2 1.1" stroke="#c4c4d0" stroke-width="2.2"/>
<path d="M1063.9 332.3l4.5 2.6" stroke="#7f7f89" stroke-width="1.9"/>
<path d="M1065.7 332.9l3.6 1.0" stroke="#7f7f89" stroke-width="2.0"/>
<path d="M1067.6 339.8l-2.0 2.4" stroke="#7f7f89" stroke-width="2.9"/>
<path d="M1071.1 334.2l4.5 -4.5" stroke="#94949e" stroke-width="2.2"/>
<path d="M1069.2 344.4l3.1 -1.4" stroke="#7f7f89" stroke-width="2.6"/>
<path d="M1065.7 338.6l4.6 1.5" stroke="#94949e" stroke-width="2.3"/>
<path d="M1074.1 336.4l2.2 2.7" stroke="#878791" stroke-width="2.4"/>
<path d="M1071.4 340.4l3.4 -1.1" stroke="#94949e" stroke-width="2.2"/>
<path d="M1067.0 344.9l0.0 -6.3" stroke="#c4c4d0" stroke-width="2.6"/>
<path d="M1074.9 342.2l-3.3 3.9" stroke="#c4c4d0" stroke-width="3.0"/>
<path d="M1079.5 342.7l3.3 2.9" stroke="#878791" stroke-width="2.8"/>
<path d="M1073.4 346.4l2.7 -4.5" stroke="#8f8f99" stroke-width="2.7"/>
<path d="M1077.7 344.1l-0.4 5.1" stroke="#8f8f99" stroke-width="1.9"/>
<path d="M1073.1 342.2l1.2 -2.8" stroke="#7f7f89" stroke-width="2.3"/>
<path d="M1071.1 346.2l3.6 1.3" stroke="#7f7f89" stroke-width="1.9"/>
<path d="M503.0 505.0 L519.8 494.5 L559.5 469.5 L599.3 445.5 L639.0 422.5 L678.8 400.0 L718.6 377.5 L745.5 362.0 L790.9 334.5 L836.4 308.5 L881.8 282.5 L912.0 265.0" stroke="#8a8a94" stroke-width="3.1" opacity="0.45"/>
<path d="M501.7 506.0l2.6 -3.5" stroke="#c4c4d0" stroke-width="1.3"/>
<path d="M503.0 502.3l3.9 0.5" stroke="#8f8f99" stroke-width="1.5"/>
<path d="M508.0 499.3l-0.9 3.5" stroke="#7f7f89" stroke-width="1.3"/>
<path d="M510.2 500.6l1.3 1.6" stroke="#878791" stroke-width="1.6"/>
<path d="M513.7 495.8l1.9 2.4" stroke="#878791" stroke-width="1.0"/>
<path d="M518.1 496.0l-3.4 3.3" stroke="#8f8f99" stroke-width="1.0"/>
<path d="M521.0 493.7l-1.1 2.2" stroke="#7f7f89" stroke-width="1.3"/>
<path d="M523.5 492.7l0.1 3.7" stroke="#8f8f99" stroke-width="1.1"/>
<path d="M522.9 489.1l2.2 1.8" stroke="#c4c4d0" stroke-width="1.3"/>
<path d="M526.5 488.2l-0.6 3.1" stroke="#94949e" stroke-width="1.4"/>
<path d="M529.8 487.8l1.6 -2.4" stroke="#c4c4d0" stroke-width="1.2"/>
<path d="M532.0 485.3l2.0 2.2" stroke="#878791" stroke-width="1.3"/>
<path d="M535.6 484.5l1.9 -2.5" stroke="#8f8f99" stroke-width="1.0"/>
<path d="M539.9 481.8l2.2 -2.0" stroke="#8f8f99" stroke-width="1.1"/>
<path d="M539.3 484.9l3.1 -3.0" stroke="#878791" stroke-width="1.3"/>
<path d="M545.8 476.7l-2.2 2.5" stroke="#7f7f89" stroke-width="1.3"/>
<path d="M546.7 478.7l0.7 -4.2" stroke="#94949e" stroke-width="1.1"/>
<path d="M550.1 477.2l3.1 -2.5" stroke="#878791" stroke-width="1.4"/>
<path d="M554.9 471.7l-1.4 2.5" stroke="#94949e" stroke-width="1.0"/>
<path d="M554.4 473.8l0.3 -3.9" stroke="#878791" stroke-width="1.2"/>
<path d="M558.9 470.8l4.3 0.4" stroke="#94949e" stroke-width="1.0"/>
<path d="M560.7 470.4l2.2 -3.0" stroke="#c4c4d0" stroke-width="1.5"/>
<path d="M564.2 464.3l0.3 3.8" stroke="#c4c4d0" stroke-width="1.5"/>
<path d="M566.0 465.7l0.3 -3.0" stroke="#8f8f99" stroke-width="1.2"/>
<path d="M571.6 460.9l-1.9 3.5" stroke="#7f7f89" stroke-width="1.5"/>
<path d="M574.0 464.8l0.5 -2.9" stroke="#94949e" stroke-width="1.1"/>
<path d="M576.5 460.0l2.5 -1.9" stroke="#878791" stroke-width="1.0"/>
<path d="M577.1 455.0l2.2 3.9" stroke="#878791" stroke-width="1.6"/>
<path d="M578.4 456.6l4.6 -1.0" stroke="#7f7f89" stroke-width="0.9"/>
<path d="M584.7 452.9l1.1 3.3" stroke="#94949e" stroke-width="1.4"/>
<path d="M588.6 451.3l-1.7 2.9" stroke="#94949e" stroke-width="1.4"/>
<path d="M590.0 451.5l0.6 -3.0" stroke="#94949e" stroke-width="1.4"/>
<path d="M594.1 452.0l2.4 -3.3" stroke="#94949e" stroke-width="1.1"/>
<path d="M594.7 447.9l0.5 -3.2" stroke="#94949e" stroke-width="1.5"/>
<path d="M595.9 446.5l4.7 -1.4" stroke="#c4c4d0" stroke-width="1.2"/>
<path d="M604.6 443.9l-2.6 2.8" stroke="#94949e" stroke-width="1.4"/>
<path d="M604.5 443.4l2.9 0.7" stroke="#7f7f89" stroke-width="1.5"/>
<path d="M609.2 439.7l-0.7 3.9" stroke="#8f8f99" stroke-width="1.4"/>
<path d="M612.0 437.7l-2.2 2.4" stroke="#878791" stroke-width="1.3"/>
<path d="M611.6 435.0l-0.9 4.6" stroke="#c4c4d0" stroke-width="1.0"/>
<path d="M619.1 433.8l-1.5 2.7" stroke="#7f7f89" stroke-width="1.4"/>
<path d="M617.2 434.3l2.2 1.9" stroke="#94949e" stroke-width="0.9"/>
<path d="M621.5 430.8l1.0 2.1" stroke="#7f7f89" stroke-width="1.4"/>
<path d="M625.2 433.1l2.8 -3.3" stroke="#94949e" stroke-width="1.1"/>
<path d="M629.0 427.3l-1.0 2.2" stroke="#878791" stroke-width="1.2"/>
<path d="M629.3 427.5l3.5 0.8" stroke="#94949e" stroke-width="1.0"/>
<path d="M631.9 426.8l4.8 0.8" stroke="#c4c4d0" stroke-width="1.5"/>
<path d="M638.4 422.3l-1.6 4.1" stroke="#7f7f89" stroke-width="1.4"/>
<path d="M640.5 419.1l-1.2 4.0" stroke="#8f8f99" stroke-width="1.1"/>
<path d="M641.7 421.3l2.2 0.7" stroke="#94949e" stroke-width="0.9"/>
<path d="M643.1 419.2l2.5 -1.9" stroke="#7f7f89" stroke-width="1.1"/>
<path d="M646.9 418.4l1.6 -4.6" stroke="#c4c4d0" stroke-width="0.9"/>
<path d="M650.3 417.0l1.5 -1.5" stroke="#94949e" stroke-width="1.5"/>
<path d="M650.8 412.7l3.2 3.3" stroke="#c4c4d0" stroke-width="1.1"/>
<path d="M658.2 411.7l-1.1 4.5" stroke="#7f7f89" stroke-width="1.1"/>
<path d="M659.8 412.6l1.5 -3.4" stroke="#c4c4d0" stroke-width="1.1"/>
<path d="M662.0 411.2l-0.5 -4.6" stroke="#7f7f89" stroke-width="1.0"/>
<path d="M665.3 409.7l0.9 1.8" stroke="#8f8f99" stroke-width="1.2"/>
<path d="M668.5 406.6l2.3 2.8" stroke="#c4c4d0" stroke-width="1.1"/>
<path d="M671.4 401.3l2.1 2.5" stroke="#8f8f99" stroke-width="1.3"/>
<path d="M673.5 403.8l0.1 -2.8" stroke="#878791" stroke-width="1.2"/>
<path d="M677.8 401.8l0.7 2.9" stroke="#878791" stroke-width="1.1"/>
<path d="M677.9 400.8l1.7 -2.2" stroke="#878791" stroke-width="1.3"/>
<path d="M681.9 399.3l2.3 -3.8" stroke="#878791" stroke-width="1.2"/>
<path d="M683.1 396.2l2.9 -1.3" stroke="#94949e" stroke-width="1.0"/>
<path d="M688.9 394.9l0.7 -2.6" stroke="#c4c4d0" stroke-width="1.4"/>
<path d="M691.9 391.6l1.0 3.2" stroke="#8f8f99" stroke-width="1.3"/>
<path d="M694.4 394.5l0.9 -2.5" stroke="#7f7f89" stroke-width="1.4"/>
<path d="M694.8 388.1l2.4 1.4" stroke="#c4c4d0" stroke-width="0.9"/>
<path d="M700.4 385.9l-0.3 2.0" stroke="#7f7f89" stroke-width="1.4"/>
<path d="M700.3 387.7l2.9 -2.7" stroke="#7f7f89" stroke-width="0.9"/>
<path d="M705.4 381.3l0.5 4.2" stroke="#878791" stroke-width="0.9"/>
<path d="M707.0 382.9l1.8 2.2" stroke="#c4c4d0" stroke-width="1.1"/>
<path d="M712.0 380.7l1.8 -2.9" stroke="#878791" stroke-width="1.6"/>
<path d="M714.6 382.7l2.3 -3.3" stroke="#8f8f99" stroke-width="1.5"/>
<path d="M714.1 375.4l3.3 2.4" stroke="#878791" stroke-width="1.6"/>
<path d="M720.1 378.2l0.6 -3.8" stroke="#878791" stroke-width="1.1"/>
<path d="M722.9 374.0l0.2 4.2" stroke="#7f7f89" stroke-width="1.2"/>
<path d="M725.4 372.3l-0.4 2.6" stroke="#8f8f99" stroke-width="1.0"/>
<path d="M727.5 371.8l3.3 2.0" stroke="#878791" stroke-width="1.3"/>
<path d="M731.8 373.2l3.6 -2.1" stroke="#8f8f99" stroke-width="1.5"/>
<path d="M734.9 367.2l-0.6 1.9" stroke="#8f8f99" stroke-width="1.5"/>
<path d="M740.5 366.6l-1.1 1.9" stroke="#878791" stroke-width="1.4"/>
<path d="M739.6 362.9l2.0 1.8" stroke="#8f8f99" stroke-width="1.4"/>
<path d="M741.9 361.7l3.8 1.8" stroke="#94949e" stroke-width="1.5"/>
<path d="M744.7 358.8l1.0 2.9" stroke="#c4c4d0" stroke-width="1.2"/>
<path d="M747.6 358.1l0.9 4.1" stroke="#c4c4d0" stroke-width="1.3"/>
<path d="M748.3 358.4l2.8 -2.2" stroke="#878791" stroke-width="1.2"/>
<path d="M753.0 356.8l2.3 -3.4" stroke="#94949e" stroke-width="1.1"/>
<path d="M756.0 351.8l-0.7 4.3" stroke="#878791" stroke-width="1.3"/>
<path d="M757.1 354.2l2.4 -0.6" stroke="#8f8f99" stroke-width="1.2"/>
<path d="M760.6 353.0l2.1 -1.1" stroke="#c4c4d0" stroke-width="1.4"/>
<path d="M765.8 348.8l1.8 -0.9" stroke="#c4c4d0" stroke-width="1.0"/>
<path d="M768.3 346.3l0.5 2.3" stroke="#878791" stroke-width="1.3"/>
<path d="M768.3 347.4l3.3 -3.0" stroke="#94949e" stroke-width="1.2"/>
<path d="M772.8 346.0l2.2 -1.1" stroke="#c4c4d0" stroke-width="1.5"/>
<path d="M777.6 342.6l1.2 -2.0" stroke="#8f8f99" stroke-width="0.9"/>
<path d="M779.3 342.9l0.1 -2.2" stroke="#8f8f99" stroke-width="1.1"/>
<path d="M782.8 335.5l2.6 2.1" stroke="#7f7f89" stroke-width="1.0"/>
<path d="M786.7 339.1l0.8 -3.0" stroke="#878791" stroke-width="1.3"/>
<path d="M787.7 335.3l4.9 0.5" stroke="#c4c4d0" stroke-width="1.0"/>
<path d="M790.2 332.5l-0.0 3.7" stroke="#7f7f89" stroke-width="1.4"/>
<path d="M794.9 334.8l1.1 -4.2" stroke="#8f8f99" stroke-width="0.9"/>
<path d="M792.5 330.7l3.2 2.2" stroke="#8f8f99" stroke-width="1.4"/>
<path d="M796.9 328.0l2.0 0.4" stroke="#c4c4d0" stroke-width="1.5"/>
<path d="M800.2 323.4l2.2 4.3" stroke="#94949e" stroke-width="1.5"/>
<path d="M802.8 326.6l2.5 -3.3" stroke="#8f8f99" stroke-width="1.4"/>
<path d="M806.8 322.6l1.8 3.5" stroke="#8f8f99" stroke-width="1.1"/>
<path d="M809.5 319.2l2.9 3.8" stroke="#8f8f99" stroke-width="1.1"/>
<path d="M811.8 321.9l4.3 0.8" stroke="#c4c4d0" stroke-width="1.5"/>
<path d="M816.8 320.7l2.9 -2.0" stroke="#878791" stroke-width="1.6"/>
<path d="M821.3 318.0l-1.1 2.0" stroke="#878791" stroke-width="1.0"/>
<path d="M823.9 319.8l1.2 -3.0" stroke="#7f7f89" stroke-width="1.5"/>
<path d="M825.3 316.3l0.1 -4.2" stroke="#7f7f89" stroke-width="0.9"/>
<path d="M831.8 313.2l-2.9 3.3" stroke="#c4c4d0" stroke-width="1.0"/>
<path d="M831.9 307.4l2.9 2.1" stroke="#c4c4d0" stroke-width="1.5"/>
<path d="M832.3 304.9l3.6 1.7" stroke="#878791" stroke-width="1.5"/>
<path d="M837.4 308.7l1.5 -1.3" stroke="#94949e" stroke-width="1.4"/>
<path d="M840.4 305.1l-0.4 2.2" stroke="#8f8f99" stroke-width="1.3"/>
<path d="M843.2 306.2l2.9 -3.8" stroke="#878791" stroke-width="1.6"/>
<path d="M848.2 301.8l-2.2 3.8" stroke="#7f7f89" stroke-width="1.4"/>
<path d="M848.8 300.6l0.8 2.8" stroke="#94949e" stroke-width="1.2"/>
<path d="M851.0 296.6l1.5 3.7" stroke="#8f8f99" stroke-width="1.5"/>
<path d="M856.1 298.2l-1.4 1.5" stroke="#878791" stroke-width="1.1"/>
<path d="M856.7 298.5l1.0 -2.2" stroke="#94949e" stroke-width="1.2"/>
<path d="M862.4 292.2l-2.2 2.2" stroke="#878791" stroke-width="1.3"/>
<path d="M862.9 294.0l0.2 -2.7" stroke="#878791" stroke-width="1.3"/>
<path d="M862.8 291.3l4.3 1.2" stroke="#7f7f89" stroke-width="1.0"/>
<path d="M867.6 288.0l0.5 2.6" stroke="#c4c4d0" stroke-width="1.1"/>
<path d="M873.3 286.9l-2.3 3.5" stroke="#94949e" stroke-width="1.3"/>
<path d="M874.2 291.3l1.8 -4.0" stroke="#878791" stroke-width="1.5"/>
<path d="M877.9 283.2l-1.9 4.1" stroke="#7f7f89" stroke-width="1.3"/>
<path d="M879.2 281.6l-0.5 4.5" stroke="#c4c4d0" stroke-width="1.3"/>
<path d="M882.8 284.2l3.7 -2.3" stroke="#878791" stroke-width="1.2"/>
<path d="M885.5 278.3l-0.2 2.7" stroke="#8f8f99" stroke-width="0.9"/>
<path d="M891.8 277.0l-2.4 2.4" stroke="#7f7f89" stroke-width="1.4"/>
<path d="M892.4 276.4l1.3 -1.9" stroke="#878791" stroke-width="1.3"/>
<path d="M895.2 274.5l2.5 3.4" stroke="#8f8f99" stroke-width="1.5"/>
<path d="M897.4 271.5l1.7 1.6" stroke="#8f8f99" stroke-width="1.3"/>
<path d="M901.8 270.4l-3.0 2.9" stroke="#7f7f89" stroke-width="1.5"/>
<path d="M902.5 268.5l2.3 2.8" stroke="#94949e" stroke-width="1.0"/>
<path d="M905.1 269.5l1.8 -1.8" stroke="#c4c4d0" stroke-width="0.9"/>
<path d="M911.6 262.2l-1.6 4.1" stroke="#c4c4d0" stroke-width="1.0"/>
<path d="M909.3 261.7l2.1 3.0" stroke="#8f8f99" stroke-width="1.5"/>
<path d="M520.0 497.0 L545.0 492.0 L570.0 492.0 L600.0 498.0 L628.0 510.0" stroke="#8a8a94" stroke-width="8.3" opacity="0.45"/>
<path d="M516.4 493.7l2.8 -4.6" stroke="#8f8f99" stroke-width="2.4"/>
<path d="M523.3 495.5l0.0 3.1" stroke="#8f8f99" stroke-width="3.0"/>
<path d="M521.4 497.3l1.7 -6.3" stroke="#7f7f89" stroke-width="1.7"/>
<path d="M526.9 494.4l-3.6 4.4" stroke="#c4c4d0" stroke-width="2.8"/>
<path d="M525.0 494.5l4.3 -2.1" stroke="#878791" stroke-width="2.8"/>
<path d="M530.6 488.8l-1.9 4.0" stroke="#94949e" stroke-width="1.9"/>
<path d="M531.7 486.1l2.7 -1.6" stroke="#878791" stroke-width="2.7"/>
<path d="M528.4 493.4l0.7 -4.8" stroke="#8f8f99" stroke-width="2.0"/>
<path d="M534.0 487.8l1.3 4.1" stroke="#7f7f89" stroke-width="1.9"/>
<path d="M539.6 487.5l-0.2 3.6" stroke="#878791" stroke-width="2.0"/>
<path d="M539.4 492.8l4.6 5.2" stroke="#8f8f99" stroke-width="2.4"/>
<path d="M537.7 493.5l-1.7 3.1" stroke="#7f7f89" stroke-width="2.9"/>
<path d="M543.1 494.0l4.3 4.4" stroke="#94949e" stroke-width="2.5"/>
<path d="M532.2 493.8l0.8 6.1" stroke="#878791" stroke-width="2.8"/>
<path d="M540.1 488.5l3.8 -1.9" stroke="#8f8f99" stroke-width="2.6"/>
<path d="M546.5 487.1l-2.6 3.0" stroke="#94949e" stroke-width="2.6"/>
<path d="M543.5 491.3l2.9 3.3" stroke="#8f8f99" stroke-width="2.8"/>
<path d="M542.9 497.2l1.8 -6.3" stroke="#878791" stroke-width="3.0"/>
<path d="M543.2 493.8l1.9 -2.4" stroke="#c4c4d0" stroke-width="2.2"/>
<path d="M546.5 493.4l1.3 -4.0" stroke="#878791" stroke-width="2.4"/>
<path d="M555.1 493.8l3.1 -2.9" stroke="#94949e" stroke-width="2.4"/>
<path d="M547.3 490.2l2.5 2.8" stroke="#7f7f89" stroke-width="2.4"/>
<path d="M550.1 488.8l2.1 6.6" stroke="#8f8f99" stroke-width="3.0"/>
<path d="M554.2 495.3l2.9 -6.0" stroke="#c4c4d0" stroke-width="2.0"/>
<path d="M555.5 491.7l2.9 -2.8" stroke="#7f7f89" stroke-width="2.7"/>
<path d="M558.8 494.1l1.7 2.6" stroke="#7f7f89" stroke-width="2.2"/>
<path d="M555.8 492.4l4.0 -1.2" stroke="#94949e" stroke-width="2.5"/>
<path d="M560.4 497.2l2.2 -2.3" stroke="#878791" stroke-width="2.4"/>
<path d="M563.2 489.2l6.2 1.0" stroke="#94949e" stroke-width="2.1"/>
<path d="M563.6 488.9l2.2 -3.4" stroke="#7f7f89" stroke-width="2.5"/>
<path d="M560.8 491.5l4.2 1.1" stroke="#7f7f89" stroke-width="2.5"/>
<path d="M568.5 498.0l2.2 -5.8" stroke="#878791" stroke-width="1.7"/>
<path d="M567.3 489.1l1.6 -2.9" stroke="#94949e" stroke-width="2.1"/>
<path d="M570.5 493.4l2.8 -3.6" stroke="#c4c4d0" stroke-width="2.8"/>
<path d="M571.7 491.0l3.5 3.9" stroke="#8f8f99" stroke-width="1.7"/>
<path d="M577.7 492.2l-3.6 5.2" stroke="#878791" stroke-width="1.7"/>
<path d="M576.2 493.5l3.4 -3.8" stroke="#7f7f89" stroke-width="2.1"/>
<path d="M578.8 489.4l2.2 4.7" stroke="#94949e" stroke-width="2.8"/>
<path d="M576.1 500.8l4.8 -2.5" stroke="#8f8f99" stroke-width="1.9"/>
<path d="M581.6 487.4l-1.4 5.7" stroke="#7f7f89" stroke-width="2.7"/>
<path d="M585.4 494.9l1.3 5.0" stroke="#c4c4d0" stroke-width="2.4"/>
<path d="M585.3 492.0l2.3 6.3" stroke="#878791" stroke-width="2.0"/>
<path d="M586.5 491.5l-2.2 5.2" stroke="#8f8f99" stroke-width="1.8"/>
<path d="M580.9 502.2l5.4 -4.3" stroke="#7f7f89" stroke-width="2.5"/>
<path d="M583.7 493.6l5.0 0.7" stroke="#94949e" stroke-width="2.7"/>
<path d="M587.4 499.5l0.1 4.5" stroke="#878791" stroke-width="2.9"/>
<path d="M591.3 496.1l3.7 -2.4" stroke="#878791" stroke-width="2.2"/>
<path d="M591.6 501.3l0.3 -6.6" stroke="#c4c4d0" stroke-width="2.2"/>
<path d="M596.0 490.0l0.4 3.1" stroke="#7f7f89" stroke-width="1.7"/>
<path d="M596.9 498.3l1.8 -4.0" stroke="#878791" stroke-width="2.4"/>
<path d="M593.0 497.9l2.5 -3.7" stroke="#878791" stroke-width="1.6"/>
<path d="M598.2 502.5l4.5 1.4" stroke="#878791" stroke-width="2.1"/>
<path d="M599.5 496.9l0.9 5.5" stroke="#8f8f99" stroke-width="2.8"/>
<path d="M598.2 502.6l0.2 -5.3" stroke="#878791" stroke-width="2.3"/>
<path d="M605.0 492.5l0.0 3.5" stroke="#8f8f99" stroke-width="2.0"/>
<path d="M599.9 499.8l4.5 4.7" stroke="#878791" stroke-width="1.8"/>
<path d="M600.8 496.9l-2.3 4.2" stroke="#94949e" stroke-width="1.7"/>
<path d="M605.7 496.4l5.6 -1.9" stroke="#7f7f89" stroke-width="2.7"/>
<path d="M606.7 504.9l0.1 -6.5" stroke="#8f8f99" stroke-width="2.6"/>
<path d="M609.1 497.2l6.5 1.5" stroke="#878791" stroke-width="2.9"/>
<path d="M612.6 504.9l3.6 -2.5" stroke="#878791" stroke-width="2.3"/>
<path d="M616.3 509.2l-0.2 -4.4" stroke="#c4c4d0" stroke-width="2.8"/>
<path d="M613.2 504.4l3.2 2.0" stroke="#7f7f89" stroke-width="1.7"/>
<path d="M610.9 497.9l-2.6 4.6" stroke="#7f7f89" stroke-width="2.6"/>
<path d="M612.1 502.3l2.7 3.3" stroke="#7f7f89" stroke-width="1.8"/>
<path d="M619.5 502.1l3.1 -4.1" stroke="#7f7f89" stroke-width="1.9"/>
<path d="M618.9 499.2l-0.9 5.9" stroke="#94949e" stroke-width="3.0"/>
<path d="M616.7 509.3l-1.5 4.7" stroke="#7f7f89" stroke-width="2.1"/>
<path d="M619.3 513.9l6.5 -2.2" stroke="#878791" stroke-width="2.6"/>
<path d="M627.2 503.7l0.6 3.0" stroke="#8f8f99" stroke-width="1.7"/>
<path d="M617.7 515.0l3.1 0.8" stroke="#94949e" stroke-width="2.9"/>
<path d="M623.3 503.6l4.0 4.2" stroke="#c4c4d0" stroke-width="2.4"/>
<path d="M630.9 508.2l-1.3 4.4" stroke="#8f8f99" stroke-width="2.2"/>
<path d="M628.0 510.0 L650.0 528.0 L672.0 550.0 L690.0 574.0" stroke="#8a8a94" stroke-width="9.1" opacity="0.45"/>
<path d="M624.9 506.7l1.5 4.3" stroke="#878791" stroke-width="2.1"/>
<path d="M628.2 513.9l3.4 -5.2" stroke="#7f7f89" stroke-width="1.9"/>
<path d="M634.7 509.5l-2.8 2.9" stroke="#94949e" stroke-width="2.6"/>
<path d="M628.1 516.3l5.3 -1.9" stroke="#7f7f89" stroke-width="2.8"/>
<path d="M633.2 516.9l2.2 2.4" stroke="#94949e" stroke-width="2.1"/>
<path d="M633.0 517.0l1.3 -4.1" stroke="#94949e" stroke-width="1.6"/>
<path d="M631.1 524.2l1.5 -5.2" stroke="#c4c4d0" stroke-width="1.9"/>
<path d="M632.0 519.8l0.5 -3.2" stroke="#94949e" stroke-width="2.0"/>
<path d="M633.3 517.4l4.0 4.7" stroke="#878791" stroke-width="2.9"/>
<path d="M640.7 511.2l3.4 5.4" stroke="#8f8f99" stroke-width="2.3"/>
<path d="M639.2 517.9l2.3 -6.6" stroke="#7f7f89" stroke-width="2.9"/>
<path d="M647.9 518.4l-1.2 3.6" stroke="#878791" stroke-width="2.7"/>
<path d="M636.6 521.2l3.2 -1.6" stroke="#c4c4d0" stroke-width="1.8"/>
<path d="M647.5 528.3l4.2 1.6" stroke="#c4c4d0" stroke-width="1.8"/>
<path d="M648.7 523.2l4.1 -1.9" stroke="#8f8f99" stroke-width="2.1"/>
<path d="M648.1 529.6l-2.1 4.3" stroke="#7f7f89" stroke-width="2.0"/>
<path d="M646.4 523.1l-0.2 5.8" stroke="#c4c4d0" stroke-width="2.5"/>
<path d="M645.2 524.8l3.3 -1.4" stroke="#878791" stroke-width="2.1"/>
<path d="M657.1 529.3l-2.9 4.7" stroke="#94949e" stroke-width="2.1"/>
<path d="M654.0 535.2l0.4 -5.2" stroke="#7f7f89" stroke-width="2.4"/>
<path d="M655.6 535.9l3.6 2.3" stroke="#94949e" stroke-width="2.0"/>
<path d="M653.9 530.1l2.2 3.4" stroke="#c4c4d0" stroke-width="1.7"/>
<path d="M651.6 539.6l2.0 -3.2" stroke="#c4c4d0" stroke-width="2.9"/>
<path d="M655.0 528.0l1.2 4.3" stroke="#7f7f89" stroke-width="2.6"/>
<path d="M657.2 539.5l1.0 -5.8" stroke="#8f8f99" stroke-width="3.0"/>
<path d="M661.5 544.2l2.4 -5.8" stroke="#8f8f99" stroke-width="1.9"/>
<path d="M658.8 533.4l-0.7 5.4" stroke="#94949e" stroke-width="2.1"/>
<path d="M659.8 537.0l2.4 -2.2" stroke="#c4c4d0" stroke-width="2.1"/>
<path d="M664.2 539.8l-2.4 6.3" stroke="#7f7f89" stroke-width="1.8"/>
<path d="M665.6 534.7l-1.9 4.5" stroke="#c4c4d0" stroke-width="2.2"/>
<path d="M661.5 549.9l0.0 -3.3" stroke="#c4c4d0" stroke-width="2.3"/>
<path d="M664.3 546.3l-1.8 2.5" stroke="#878791" stroke-width="2.6"/>
<path d="M669.3 548.2l2.0 -6.4" stroke="#8f8f99" stroke-width="2.4"/>
<path d="M665.0 549.6l1.6 -3.1" stroke="#878791" stroke-width="2.8"/>
<path d="M668.5 546.6l-2.2 2.6" stroke="#7f7f89" stroke-width="2.8"/>
<path d="M670.7 548.0l2.7 -1.7" stroke="#878791" stroke-width="2.6"/>
<path d="M670.6 552.1l2.8 -4.4" stroke="#c4c4d0" stroke-width="2.8"/>
<path d="M666.4 552.3l6.1 -1.3" stroke="#878791" stroke-width="2.0"/>
<path d="M671.3 548.2l2.5 -1.7" stroke="#94949e" stroke-width="2.0"/>
<path d="M673.2 552.4l2.9 3.5" stroke="#8f8f99" stroke-width="2.4"/>
<path d="M676.6 547.1l-3.9 4.2" stroke="#8f8f99" stroke-width="2.0"/>
<path d="M679.0 563.0l3.2 -5.6" stroke="#8f8f99" stroke-width="2.0"/>
<path d="M679.6 562.4l3.0 -4.2" stroke="#8f8f99" stroke-width="2.9"/>
<path d="M674.7 562.5l1.5 -3.2" stroke="#8f8f99" stroke-width="1.9"/>
<path d="M679.2 567.0l-3.1 5.0" stroke="#7f7f89" stroke-width="2.3"/>
<path d="M678.2 568.1l3.7 -5.1" stroke="#7f7f89" stroke-width="2.0"/>
<path d="M677.2 563.3l0.6 -5.8" stroke="#94949e" stroke-width="2.5"/>
<path d="M680.7 570.3l2.8 -3.9" stroke="#878791" stroke-width="1.7"/>
<path d="M685.9 569.7l1.8 -3.0" stroke="#878791" stroke-width="2.8"/>
<path d="M677.6 570.9l3.6 3.4" stroke="#7f7f89" stroke-width="2.9"/>
<path d="M684.8 574.1l-2.1 3.0" stroke="#878791" stroke-width="2.5"/>
<path d="M694.2 571.6l0.7 5.1" stroke="#878791" stroke-width="1.8"/>
<path d="M690.4 569.6l4.0 -2.7" stroke="#878791" stroke-width="2.7"/>
<path d="M696.5 573.6l5.1 2.4" stroke="#8f8f99" stroke-width="2.6"/>
<path d="M690.0 574.0 L700.0 590.0 L708.0 606.0" stroke="#8a8a94" stroke-width="10.4" opacity="0.45"/>
<path d="M693.3 572.2l1.5 -3.3" stroke="#7f7f89" stroke-width="2.9"/>
<path d="M688.5 572.8l3.6 -5.2" stroke="#8f8f99" stroke-width="2.7"/>
<path d="M692.0 573.6l-3.6 4.6" stroke="#878791" stroke-width="2.0"/>
<path d="M691.2 579.6l3.1 5.6" stroke="#878791" stroke-width="2.9"/>
<path d="M693.0 579.6l2.4 -2.0" stroke="#c4c4d0" stroke-width="1.8"/>
<path d="M691.6 584.5l2.9 4.3" stroke="#7f7f89" stroke-width="1.9"/>
<path d="M689.0 585.2l4.3 -1.9" stroke="#c4c4d0" stroke-width="1.8"/>
<path d="M684.1 574.3l4.2 5.2" stroke="#94949e" stroke-width="2.3"/>
<path d="M695.7 579.3l1.1 2.9" stroke="#c4c4d0" stroke-width="2.8"/>
<path d="M705.2 592.0l4.0 1.1" stroke="#8f8f99" stroke-width="2.4"/>
<path d="M690.8 577.4l-2.3 3.1" stroke="#c4c4d0" stroke-width="2.0"/>
<path d="M693.9 592.1l3.6 -2.1" stroke="#94949e" stroke-width="2.4"/>
<path d="M698.3 585.1l6.3 2.5" stroke="#8f8f99" stroke-width="1.7"/>
<path d="M690.6 580.4l2.3 4.3" stroke="#8f8f99" stroke-width="2.6"/>
<path d="M685.4 583.2l3.9 -5.0" stroke="#7f7f89" stroke-width="2.6"/>
<path d="M700.4 593.5l-0.3 -5.2" stroke="#878791" stroke-width="2.4"/>
<path d="M694.1 590.7l-0.3 -3.1" stroke="#94949e" stroke-width="1.7"/>
<path d="M703.8 592.2l5.0 -3.9" stroke="#7f7f89" stroke-width="2.1"/>
<path d="M696.9 594.8l4.3 -3.7" stroke="#7f7f89" stroke-width="2.1"/>
<path d="M702.6 593.8l0.5 -4.0" stroke="#7f7f89" stroke-width="2.8"/>
<path d="M697.1 590.3l4.0 0.9" stroke="#94949e" stroke-width="1.8"/>
<path d="M701.9 593.9l0.4 -5.3" stroke="#7f7f89" stroke-width="2.3"/>
<path d="M707.5 595.9l0.0 4.1" stroke="#94949e" stroke-width="1.9"/>
<path d="M704.2 604.3l5.7 -1.6" stroke="#94949e" stroke-width="2.3"/>
<path d="M706.1 601.6l6.7 0.8" stroke="#c4c4d0" stroke-width="2.7"/>
<path d="M705.7 593.6l-1.2 5.9" stroke="#7f7f89" stroke-width="2.7"/>
<path d="M710.0 596.7l6.6 -2.2" stroke="#c4c4d0" stroke-width="2.2"/>
<path d="M702.5 593.1l-0.6 5.2" stroke="#7f7f89" stroke-width="1.7"/>
<path d="M706.4 599.9l-0.8 3.9" stroke="#94949e" stroke-width="2.6"/>
<path d="M708.5 599.2l2.4 2.3" stroke="#8f8f99" stroke-width="3.0"/>
<path d="M696.2 602.6l5.9 1.6" stroke="#878791" stroke-width="2.7"/>
<path d="M708.5 600.9l3.9 4.6" stroke="#94949e" stroke-width="2.9"/>
<path d="M703.4 605.2l6.3 2.3" stroke="#c4c4d0" stroke-width="1.6"/>
<path d="M711.7 606.7l3.2 -3.9" stroke="#878791" stroke-width="1.8"/>
<path d="M702.0 601.9l0.6 3.8" stroke="#878791" stroke-width="2.6"/></g>
<path d="M498.7 506.5l6.0-0.3 7.7-0.2 16.0 0.3 12.3 1.0 10.4 1.2 11.6 2.0 11.1 2.5 10.9 3.3 11.8 4.5 11.2 6.2 11.6 8.1 11.4 9.4 11.3 10.7 11.7 12.3 11.0 12.7 11.5 13.3 11.2 13.9 13.7 15.9 8.5 8.4M502.5 504.1l6.0-0.3 7.7-0.2 16.0 0.3 12.3 1.0 10.4 1.2 11.6 2.0 11.1 2.5 10.9 3.3 11.8 4.5 11.2 6.2 11.6 8.1 11.4 9.4 11.3 10.7 11.7 12.3 11.0 12.7 11.5 13.3 11.2 13.9 13.7 15.9 8.5 8.4M507.0 501.2l6.0-0.3 7.7-0.2 16.0 0.3 12.3 1.0 10.4 1.2 11.6 2.0 11.1 2.5 10.9 3.3 11.8 4.5 11.2 6.2 11.6 8.1 11.4 9.4 11.3 10.7 11.7 12.3 11.0 12.7 11.5 13.3 11.2 13.9 13.7 15.9 8.5 8.4M511.6 498.2l6.0-0.3 7.7-0.2 16.0 0.3 12.3 1.0 10.4 1.2 11.6 2.0 11.1 2.5 10.9 3.3 11.8 4.5 11.2 6.2 11.6 8.1 11.4 9.4 11.3 10.7 11.7 12.3 11.0 12.7 11.5 13.3 11.2 13.9 13.7 15.9 8.5 8.4M516.2 495.3l6.0-0.3 7.7-0.2 16.0 0.3 12.3 1.0 10.4 1.2 11.6 2.0 11.1 2.5 10.9 3.3 11.8 4.5 11.2 6.2 11.6 8.1 11.4 9.4 11.3 10.7 11.7 12.3 11.0 12.7 11.5 13.3 11.2 13.9 13.7 15.9 8.5 8.4M520.4 492.6l6.0-0.3 7.7-0.2 16.0 0.3 12.3 1.0 10.4 1.2 11.6 2.0 11.1 2.5 10.9 3.3 11.8 4.5 11.2 6.2 11.6 8.1 11.4 9.4 11.3 10.7 11.7 12.3 11.0 12.7 11.5 13.3 11.2 13.9 13.7 15.9 8.5 8.4M522.9 491.0l6.0-0.3 7.7-0.2 16.0 0.3 12.3 1.0 10.4 1.2 11.6 2.0 11.1 2.5 10.9 3.3 11.8 4.5 11.2 6.2 11.6 8.1 11.4 9.4 11.3 10.7 11.7 12.3 11.0 12.7 11.5 13.3 11.2 13.9 13.7 15.9 8.5 8.4M525.0 489.7l6.0-0.3 7.7-0.2 16.0 0.3 12.3 1.0 10.4 1.2 11.6 2.0 11.1 2.5 10.9 3.3 11.8 4.5 11.2 6.2 11.6 8.1 11.4 9.4 11.3 10.7 11.7 12.3 11.0 12.7 11.5 13.3 11.2 13.9 13.7 15.9 8.5 8.4M527.1 488.4l6.0-0.3 7.7-0.2 16.0 0.3 12.3 1.0 10.4 1.2 11.6 2.0 11.1 2.5 10.9 3.3 11.8 4.5 11.2 6.2 11.6 8.1 11.4 9.4 11.3 10.7 11.7 12.3 11.0 12.7 11.5 13.3 11.2 13.9 13.7 15.9 8.5 8.4M529.2 487.0l6.0-0.3 7.7-0.2 16.0 0.3 12.3 1.0 10.4 1.2 11.6 2.0 11.1 2.5 10.9 3.3 11.8 4.5 11.2 6.2 11.6 8.1 11.4 9.4 11.3 10.7 11.7 12.3 11.0 12.7 11.5 13.3 11.2 13.9 13.7 15.9 8.5 8.4M531.3 485.7l6.0-0.3 7.7-0.2 16.0 0.3 12.3 1.0 10.4 1.2 11.6 2.0 11.1 2.5 10.9 3.3 11.8 4.5 11.2 6.2 11.6 8.1 11.4 9.4 11.3 10.7 11.7 12.3 11.0 12.7 11.5 13.3 11.2 13.9 13.7 15.9 8.5 8.4M533.4 484.4l6.0-0.3 7.7-0.2 16.0 0.3 12.3 1.0 10.4 1.2 11.6 2.0 11.1 2.5 10.9 3.3 11.8 4.5 11.2 6.2 11.6 8.1 11.4 9.4 11.3 10.7 11.7 12.3 11.0 12.7 11.5 13.3 11.2 13.9 13.7 15.9 8.5 8.4M535.5 483.0l6.0-0.3 7.7-0.2 16.0 0.3 12.3 1.0 10.4 1.2 11.6 2.0 11.1 2.5 10.9 3.3 11.8 4.5 11.2 6.2 11.6 8.1 11.4 9.4 11.3 10.7 11.7 12.3 11.0 12.7 11.5 13.3 11.2 13.9 13.7 15.9 8.5 8.4M537.6 481.7l6.0-0.3 7.7-0.2 16.0 0.3 12.3 1.0 10.4 1.2 11.6 2.0 11.1 2.5 10.9 3.3 11.8 4.5 11.2 6.2 11.6 8.1 11.4 9.4 11.3 10.7 11.7 12.3 11.0 12.7 11.5 13.3 11.2 13.9 13.7 15.9 8.5 8.4M539.7 480.4l6.0-0.3 7.7-0.2 16.0 0.3 12.3 1.0 10.4 1.2 11.6 2.0 11.1 2.5 10.9 3.3 11.8 4.5 11.2 6.2 11.6 8.1 11.4 9.4 11.3 10.7 11.7 12.3 11.0 12.7 11.5 13.3 11.2 13.9 13.7 15.9 8.5 8.4M541.8 479.0l6.0-0.3 7.7-0.2 16.0 0.3 12.3 1.0 10.4 1.2 11.6 2.0 11.1 2.5 10.9 3.3 11.8 4.5 11.2 6.2 11.6 8.1 11.4 9.4 11.3 10.7 11.7 12.3 11.0 12.7 11.5 13.3 11.2 13.9 13.7 15.9 8.5 8.4M543.9 477.7l6.0-0.3 7.7-0.2 16.0 0.3 12.3 1.0 10.4 1.2 11.6 2.0 11.1 2.5 10.9 3.3 11.8 4.5 11.2 6.2 11.6 8.1 11.4 9.4 11.3 10.7 11.7 12.3 11.0 12.7 11.5 13.3 11.2 13.9 13.7 15.9 8.5 8.4M546.0 476.4l6.0-0.3 7.7-0.2 16.0 0.3 12.3 1.0 10.4 1.2 11.6 2.0 11.1 2.5 10.9 3.3 11.8 4.5 11.2 6.2 11.6 8.1 11.4 9.4 11.3 10.7 11.7 12.3 11.0 12.7 11.5 13.3 11.2 13.9 13.7 15.9 8.5 8.4M548.1 475.0l6.0-0.3 7.7-0.2 16.0 0.3 12.3 1.0 10.4 1.2 11.6 2.0 11.1 2.5 10.9 3.3 11.8 4.5 11.2 6.2 11.6 8.1 11.4 9.4 11.3 10.7 11.7 12.3 11.0 12.7 11.5 13.3 11.2 13.9 13.7 15.9 8.5 8.4M550.2 473.7l6.0-0.3 7.7-0.2 16.0 0.3 12.3 1.0 10.4 1.2 11.6 2.0 11.1 2.5 10.9 3.3 11.8 4.5 11.2 6.2 11.6 8.1 11.4 9.4 11.3 10.7 11.7 12.3 11.0 12.7 11.5 13.3 11.2 13.9 13.7 15.9 8.5 8.4M552.3 472.4l6.0-0.3 7.7-0.2 16.0 0.3 12.3 1.0 10.4 1.2 11.6 2.0 11.1 2.5 10.9 3.3 11.8 4.5 11.2 6.2 11.6 8.1 11.4 9.4 11.3 10.7 11.7 12.3 11.0 12.7 11.5 13.3 11.2 13.9 13.7 15.9 8.5 8.4M554.4 471.0l6.0-0.3 7.7-0.2 16.0 0.3 12.3 1.0 10.4 1.2 11.6 2.0 11.1 2.5 10.9 3.3 11.8 4.5 11.2 6.2 11.6 8.1 11.4 9.4 11.3 10.7 11.7 12.3 11.0 12.7 11.5 13.3 11.2 13.9 13.7 15.9 8.5 8.4M556.5 469.7l6.0-0.3 7.7-0.2 16.0 0.3 12.3 1.0 10.4 1.2 11.6 2.0 11.1 2.5 10.9 3.3 11.8 4.5 11.2 6.2 11.6 8.1 11.4 9.4 11.3 10.7 11.7 12.3 11.0 12.7 11.5 13.3 11.2 13.9 13.7 15.9 8.5 8.4M558.6 468.4l6.0-0.3 7.7-0.2 16.0 0.3 12.3 1.0 10.4 1.2 11.6 2.0 11.1 2.5 10.9 3.3 11.8 4.5 11.2 6.2 11.6 8.1 11.4 9.4 11.3 10.7 11.7 12.3 11.0 12.7 11.5 13.3 11.2 13.9 13.7 15.9 8.5 8.4M560.7 467.1l6.0-0.3 7.7-0.2 16.0 0.3 12.3 1.0 10.4 1.2 11.6 2.0 11.1 2.5 10.9 3.3 11.8 4.5 11.2 6.2 11.6 8.1 11.4 9.4 11.3 10.7 11.7 12.3 11.0 12.7 11.5 13.3 11.2 13.9 13.7 15.9 8.5 8.4M562.8 465.8l6.0-0.3 7.7-0.2 16.0 0.3 12.3 1.0 10.4 1.2 11.6 2.0 11.1 2.5 10.9 3.3 11.8 4.5 11.2 6.2 11.6 8.1 11.4 9.4 11.3 10.7 11.7 12.3 11.0 12.7 11.5 13.3 11.2 13.9 13.7 15.9 8.5 8.4M564.9 464.6l6.0-0.3 7.7-0.2 16.0 0.3 12.3 1.0 10.4 1.2 11.6 2.0 11.1 2.5 10.9 3.3 11.8 4.5 11.2 6.2 11.6 8.1 11.4 9.4 11.3 10.7 11.7 12.3 11.0 12.7 11.5 13.3 11.2 13.9 13.7 15.9 8.5 8.4M567.0 463.3l6.0-0.3 7.7-0.2 16.0 0.3 12.3 1.0 10.4 1.2 11.6 2.0 11.1 2.5 10.9 3.3 11.8 4.5 11.2 6.2 11.6 8.1 11.4 9.4 11.3 10.7 11.7 12.3 11.0 12.7 11.5 13.3 11.2 13.9 13.7 15.9 8.5 8.4M569.1 462.1l6.0-0.3 7.7-0.2 16.0 0.3 12.3 1.0 10.4 1.2 11.6 2.0 11.1 2.5 10.9 3.3 11.8 4.5 11.2 6.2 11.6 8.1 11.4 9.4 11.3 10.7 11.7 12.3 11.0 12.7 11.5 13.3 11.2 13.9 13.7 15.9 8.5 8.4M571.2 460.8l6.0-0.3 7.7-0.2 16.0 0.3 12.3 1.0 10.4 1.2 11.6 2.0 11.1 2.5 10.9 3.3 11.8 4.5 11.2 6.2 11.6 8.1 11.4 9.4 11.3 10.7 11.7 12.3 11.0 12.7 11.5 13.3 11.2 13.9 13.7 15.9 8.5 8.4M573.3 459.6l6.0-0.3 7.7-0.2 16.0 0.3 12.3 1.0 10.4 1.2 11.6 2.0 11.1 2.5 10.9 3.3 11.8 4.5 11.2 6.2 11.6 8.1 11.4 9.4 11.3 10.7 11.7 12.3 11.0 12.7 11.5 13.3 11.2 13.9 13.7 15.9 8.5 8.4M575.4 458.3l6.0-0.3 7.7-0.2 16.0 0.3 12.3 1.0 10.4 1.2 11.6 2.0 11.1 2.5 10.9 3.3 11.8 4.5 11.2 6.2 11.6 8.1 11.4 9.4 11.3 10.7 11.7 12.3 11.0 12.7 11.5 13.3 11.2 13.9 13.7 15.9 8.5 8.4M577.5 457.0l6.0-0.3 7.7-0.2 16.0 0.3 12.3 1.0 10.4 1.2 11.6 2.0 11.1 2.5 10.9 3.3 11.8 4.5 11.2 6.2 11.6 8.1 11.4 9.4 11.3 10.7 11.7 12.3 11.0 12.7 11.5 13.3 11.2 13.9 13.7 15.9 8.5 8.4M579.6 455.8l6.0-0.3 7.7-0.2 16.0 0.3 12.3 1.0 10.4 1.2 11.6 2.0 11.1 2.5 10.9 3.3 11.8 4.5 11.2 6.2 11.6 8.1 11.4 9.4 11.3 10.7 11.7 12.3 11.0 12.7 11.5 13.3 11.2 13.9 13.7 15.9 8.5 8.4M581.7 454.5l6.0-0.3 7.7-0.2 16.0 0.3 12.3 1.0 10.4 1.2 11.6 2.0 11.1 2.5 10.9 3.3 11.8 4.5 11.2 6.2 11.6 8.1 11.4 9.4 11.3 10.7 11.7 12.3 11.0 12.7 11.5 13.3 11.2 13.9 13.7 15.9 8.5 8.4M583.8 453.3l6.0-0.3 7.7-0.2 16.0 0.3 12.3 1.0 10.4 1.2 11.6 2.0 11.1 2.5 10.9 3.3 11.8 4.5 11.2 6.2 11.6 8.1 11.4 9.4 11.3 10.7 11.7 12.3 11.0 12.7 11.5 13.3 11.2 13.9 13.7 15.9 8.5 8.4M585.9 452.0l6.0-0.3 7.7-0.2 16.0 0.3 12.3 1.0 10.4 1.2 11.6 2.0 11.1 2.5 10.9 3.3 11.8 4.5 11.2 6.2 11.6 8.1 11.4 9.4 11.3 10.7 11.7 12.3 11.0 12.7 11.5 13.3 11.2 13.9 13.7 15.9 8.5 8.4M588.0 450.8l6.0-0.3 7.7-0.2 16.0 0.3 12.3 1.0 10.4 1.2 11.6 2.0 11.1 2.5 10.9 3.3 11.8 4.5 11.2 6.2 11.6 8.1 11.4 9.4 11.3 10.7 11.7 12.3 11.0 12.7 11.5 13.3 11.2 13.9 13.7 15.9 8.5 8.4M590.1 449.5l6.0-0.3 7.7-0.2 16.0 0.3 12.3 1.0 10.4 1.2 11.6 2.0 11.1 2.5 10.9 3.3 11.8 4.5 11.2 6.2 11.6 8.1 11.4 9.4 11.3 10.7 11.7 12.3 11.0 12.7 11.5 13.3 11.2 13.9 13.7 15.9 8.5 8.4M592.2 448.3l6.0-0.3 7.7-0.2 16.0 0.3 12.3 1.0 10.4 1.2 11.6 2.0 11.1 2.5 10.9 3.3 11.8 4.5 11.2 6.2 11.6 8.1 11.4 9.4 11.3 10.7 11.7 12.3 11.0 12.7 11.5 13.3 11.2 13.9 13.7 15.9 8.5 8.4M594.3 447.0l6.0-0.3 7.7-0.2 16.0 0.3 12.3 1.0 10.4 1.2 11.6 2.0 11.1 2.5 10.9 3.3 11.8 4.5 11.2 6.2 11.6 8.1 11.4 9.4 11.3 10.7 11.7 12.3 11.0 12.7 11.5 13.3 11.2 13.9 13.7 15.9 8.5 8.4M596.4 445.7l6.0-0.3 7.7-0.2 16.0 0.3 12.3 1.0 10.4 1.2 11.6 2.0 11.1 2.5 10.9 3.3 11.8 4.5 11.2 6.2 11.6 8.1 11.4 9.4 11.3 10.7 11.7 12.3 11.0 12.7 11.5 13.3 11.2 13.9 13.7 15.9 8.5 8.4M598.5 444.5l6.0-0.3 7.7-0.2 16.0 0.3 12.3 1.0 10.4 1.2 11.6 2.0 11.1 2.5 10.9 3.3 11.8 4.5 11.2 6.2 11.6 8.1 11.4 9.4 11.3 10.7 11.7 12.3 11.0 12.7 11.5 13.3 11.2 13.9 13.7 15.9 8.5 8.4M600.6 443.3l6.0-0.3 7.7-0.2 16.0 0.3 12.3 1.0 10.4 1.2 11.6 2.0 11.1 2.5 10.9 3.3 11.8 4.5 11.2 6.2 11.6 8.1 11.4 9.4 11.3 10.7 11.7 12.3 11.0 12.7 11.5 13.3 11.2 13.9 13.7 15.9 8.5 8.4M602.7 442.0l6.0-0.3 7.7-0.2 16.0 0.3 12.3 1.0 10.4 1.2 11.6 2.0 11.1 2.5 10.9 3.3 11.8 4.5 11.2 6.2 11.6 8.1 11.4 9.4 11.3 10.7 11.7 12.3 11.0 12.7 11.5 13.3 11.2 13.9 13.7 15.9 8.5 8.4M604.8 440.8l6.0-0.3 7.7-0.2 16.0 0.3 12.3 1.0 10.4 1.2 11.6 2.0 11.1 2.5 10.9 3.3 11.8 4.5 11.2 6.2 11.6 8.1 11.4 9.4 11.3 10.7 11.7 12.3 11.0 12.7 11.5 13.3 11.2 13.9 13.7 15.9 8.5 8.4M606.9 439.6l6.0-0.3 7.7-0.2 16.0 0.3 12.3 1.0 10.4 1.2 11.6 2.0 11.1 2.5 10.9 3.3 11.8 4.5 11.2 6.2 11.6 8.1 11.4 9.4 11.3 10.7 11.7 12.3 11.0 12.7 11.5 13.3 11.2 13.9 13.7 15.9 8.5 8.4M609.0 438.4l6.0-0.3 7.7-0.2 16.0 0.3 12.3 1.0 10.4 1.2 11.6 2.0 11.1 2.5 10.9 3.3 11.8 4.5 11.2 6.2 11.6 8.1 11.4 9.4 11.3 10.7 11.7 12.3 11.0 12.7 11.5 13.3 11.2 13.9 13.7 15.9 8.5 8.4M611.1 437.2l6.0-0.3 7.7-0.2 16.0 0.3 12.3 1.0 10.4 1.2 11.6 2.0 11.1 2.5 10.9 3.3 11.8 4.5 11.2 6.2 11.6 8.1 11.4 9.4 11.3 10.7 11.7 12.3 11.0 12.7 11.5 13.3 11.2 13.9 13.7 15.9 8.5 8.4M613.2 436.0l6.0-0.3 7.7-0.2 16.0 0.3 12.3 1.0 10.4 1.2 11.6 2.0 11.1 2.5 10.9 3.3 11.8 4.5 11.2 6.2 11.6 8.1 11.4 9.4 11.3 10.7 11.7 12.3 11.0 12.7 11.5 13.3 11.2 13.9 13.7 15.9 8.5 8.4M615.3 434.7l6.0-0.3 7.7-0.2 16.0 0.3 12.3 1.0 10.4 1.2 11.6 2.0 11.1 2.5 10.9 3.3 11.8 4.5 11.2 6.2 11.6 8.1 11.4 9.4 11.3 10.7 11.7 12.3 11.0 12.7 11.5 13.3 11.2 13.9 13.7 15.9 8.5 8.4M617.4 433.5l6.0-0.3 7.7-0.2 16.0 0.3 12.3 1.0 10.4 1.2 11.6 2.0 11.1 2.5 10.9 3.3 11.8 4.5 11.2 6.2 11.6 8.1 11.4 9.4 11.3 10.7 11.7 12.3 11.0 12.7 11.5 13.3 11.2 13.9 13.7 15.9 8.5 8.4M619.5 432.3l6.0-0.3 7.7-0.2 16.0 0.3 12.3 1.0 10.4 1.2 11.6 2.0 11.1 2.5 10.9 3.3 11.8 4.5 11.2 6.2 11.6 8.1 11.4 9.4 11.3 10.7 11.7 12.3 11.0 12.7 11.5 13.3 11.2 13.9 13.7 15.9 8.5 8.4M621.6 431.1l6.0-0.3 7.7-0.2 16.0 0.3 12.3 1.0 10.4 1.2 11.6 2.0 11.1 2.5 10.9 3.3 11.8 4.5 11.2 6.2 11.6 8.1 11.4 9.4 11.3 10.7 11.7 12.3 11.0 12.7 11.5 13.3 11.2 13.9 13.7 15.9 8.5 8.4M623.7 429.9l6.0-0.3 7.7-0.2 16.0 0.3 12.3 1.0 10.4 1.2 11.6 2.0 11.1 2.5 10.9 3.3 11.8 4.5 11.2 6.2 11.6 8.1 11.4 9.4 11.3 10.7 11.7 12.3 11.0 12.7 11.5 13.3 11.2 13.9 13.7 15.9 8.5 8.4M625.8 428.7l6.0-0.3 7.7-0.2 16.0 0.3 12.3 1.0 10.4 1.2 11.6 2.0 11.1 2.5 10.9 3.3 11.8 4.5 11.2 6.2 11.6 8.1 11.4 9.4 11.3 10.7 11.7 12.3 11.0 12.7 11.5 13.3 11.2 13.9 13.7 15.9 8.5 8.4M627.9 427.4l6.0-0.3 7.7-0.2 16.0 0.3 12.3 1.0 10.4 1.2 11.6 2.0 11.1 2.5 10.9 3.3 11.8 4.5 11.2 6.2 11.6 8.1 11.4 9.4 11.3 10.7 11.7 12.3 11.0 12.7 11.5 13.3 11.2 13.9 13.7 15.9 8.5 8.4M630.0 426.2l6.0-0.3 7.7-0.2 16.0 0.3 12.3 1.0 10.4 1.2 11.6 2.0 11.1 2.5 10.9 3.3 11.8 4.5 11.2 6.2 11.6 8.1 11.4 9.4 11.3 10.7 11.7 12.3 11.0 12.7 11.5 13.3 11.2 13.9 13.7 15.9 8.5 8.4M632.1 425.0l6.0-0.3 7.7-0.2 16.0 0.3 12.3 1.0 10.4 1.2 11.6 2.0 11.1 2.5 10.9 3.3 11.8 4.5 11.2 6.2 11.6 8.1 11.4 9.4 11.3 10.7 11.7 12.3 11.0 12.7 11.5 13.3 11.2 13.9 13.7 15.9 8.5 8.4M634.2 423.8l6.0-0.3 7.7-0.2 16.0 0.3 12.3 1.0 10.4 1.2 11.6 2.0 11.1 2.5 10.9 3.3 11.8 4.5 11.2 6.2 11.6 8.1 11.4 9.4 11.3 10.7 11.7 12.3 11.0 12.7 11.5 13.3 11.2 13.9 13.7 15.9 8.5 8.4M636.3 422.6l6.0-0.3 7.7-0.2 16.0 0.3 12.3 1.0 10.4 1.2 11.6 2.0 11.1 2.5 10.9 3.3 11.8 4.5 11.2 6.2 11.6 8.1 11.4 9.4 11.3 10.7 11.7 12.3 11.0 12.7 11.5 13.3 11.2 13.9 13.7 15.9 8.5 8.4M638.4 421.4l6.0-0.3 7.7-0.2 16.0 0.3 12.3 1.0 10.4 1.2 11.6 2.0 11.1 2.5 10.9 3.3 11.8 4.5 11.2 6.2 11.6 8.1 11.4 9.4 11.3 10.7 11.7 12.3 11.0 12.7 11.5 13.3 11.2 13.9 13.7 15.9 8.5 8.4M640.5 420.2l6.0-0.3 7.7-0.2 16.0 0.3 12.3 1.0 10.4 1.2 11.6 2.0 11.1 2.5 10.9 3.3 11.8 4.5 11.2 6.2 11.6 8.1 11.4 9.4 11.3 10.7 11.7 12.3 11.0 12.7 11.5 13.3 11.2 13.9 13.7 15.9 8.5 8.4M642.6 419.0l6.0-0.3 7.7-0.2 16.0 0.3 12.3 1.0 10.4 1.2 11.6 2.0 11.1 2.5 10.9 3.3 11.8 4.5 11.2 6.2 11.6 8.1 11.4 9.4 11.3 10.7 11.7 12.3 11.0 12.7 11.5 13.3 11.2 13.9 13.7 15.9 8.5 8.4M644.7 417.8l6.0-0.3 7.7-0.2 16.0 0.3 12.3 1.0 10.4 1.2 11.6 2.0 11.1 2.5 10.9 3.3 11.8 4.5 11.2 6.2 11.6 8.1 11.4 9.4 11.3 10.7 11.7 12.3 11.0 12.7 11.5 13.3 11.2 13.9 13.7 15.9 8.5 8.4M646.8 416.6l6.0-0.3 7.7-0.2 16.0 0.3 12.3 1.0 10.4 1.2 11.6 2.0 11.1 2.5 10.9 3.3 11.8 4.5 11.2 6.2 11.6 8.1 11.4 9.4 11.3 10.7 11.7 12.3 11.0 12.7 11.5 13.3 11.2 13.9 13.7 15.9 8.5 8.4M648.9 415.4l6.0-0.3 7.7-0.2 16.0 0.3 12.3 1.0 10.4 1.2 11.6 2.0 11.1 2.5 10.9 3.3 11.8 4.5 11.2 6.2 11.6 8.1 11.4 9.4 11.3 10.7 11.7 12.3 11.0 12.7 11.5 13.3 11.2 13.9 13.7 15.9 8.5 8.4M651.0 414.2l6.0-0.3 7.7-0.2 16.0 0.3 12.3 1.0 10.4 1.2 11.6 2.0 11.1 2.5 10.9 3.3 11.8 4.5 11.2 6.2 11.6 8.1 11.4 9.4 11.3 10.7 11.7 12.3 11.0 12.7 11.5 13.3 11.2 13.9 13.7 15.9 8.5 8.4M653.1 413.0l6.0-0.3 7.7-0.2 16.0 0.3 12.3 1.0 10.4 1.2 11.6 2.0 11.1 2.5 10.9 3.3 11.8 4.5 11.2 6.2 11.6 8.1 11.4 9.4 11.3 10.7 11.7 12.3 11.0 12.7 11.5 13.3 11.2 13.9 13.7 15.9 8.5 8.4M655.2 411.8l6.0-0.3 7.7-0.2 16.0 0.3 12.3 1.0 10.4 1.2 11.6 2.0 11.1 2.5 10.9 3.3 11.8 4.5 11.2 6.2 11.6 8.1 11.4 9.4 11.3 10.7 11.7 12.3 11.0 12.7 11.5 13.3 11.2 13.9 13.7 15.9 8.5 8.4M657.3 410.7l6.0-0.3 7.7-0.2 16.0 0.3 12.3 1.0 10.4 1.2 11.6 2.0 11.1 2.5 10.9 3.3 11.8 4.5 11.2 6.2 11.6 8.1 11.4 9.4 11.3 10.7 11.7 12.3 11.0 12.7 11.5 13.3 11.2 13.9 13.7 15.9 8.5 8.4M659.4 409.5l6.0-0.3 7.7-0.2 16.0 0.3 12.3 1.0 10.4 1.2 11.6 2.0 11.1 2.5 10.9 3.3 11.8 4.5 11.2 6.2 11.6 8.1 11.4 9.4 11.3 10.7 11.7 12.3 11.0 12.7 11.5 13.3 11.2 13.9 13.7 15.9 8.5 8.4M661.5 408.3l6.0-0.3 7.7-0.2 16.0 0.3 12.3 1.0 10.4 1.2 11.6 2.0 11.1 2.5 10.9 3.3 11.8 4.5 11.2 6.2 11.6 8.1 11.4 9.4 11.3 10.7 11.7 12.3 11.0 12.7 11.5 13.3 11.2 13.9 13.7 15.9 8.5 8.4M663.6 407.1l6.0-0.3 7.7-0.2 16.0 0.3 12.3 1.0 10.4 1.2 11.6 2.0 11.1 2.5 10.9 3.3 11.8 4.5 11.2 6.2 11.6 8.1 11.4 9.4 11.3 10.7 11.7 12.3 11.0 12.7 11.5 13.3 11.2 13.9 13.7 15.9 8.5 8.4M665.7 405.9l6.0-0.3 7.7-0.2 16.0 0.3 12.3 1.0 10.4 1.2 11.6 2.0 11.1 2.5 10.9 3.3 11.8 4.5 11.2 6.2 11.6 8.1 11.4 9.4 11.3 10.7 11.7 12.3 11.0 12.7 11.5 13.3 11.2 13.9 13.7 15.9 8.5 8.4M667.8 404.7l6.0-0.3 7.7-0.2 16.0 0.3 12.3 1.0 10.4 1.2 11.6 2.0 11.1 2.5 10.9 3.3 11.8 4.5 11.2 6.2 11.6 8.1 11.4 9.4 11.3 10.7 11.7 12.3 11.0 12.7 11.5 13.3 11.2 13.9 13.7 15.9 8.5 8.4M669.9 403.5l6.0-0.3 7.7-0.2 16.0 0.3 12.3 1.0 10.4 1.2 11.6 2.0 11.1 2.5 10.9 3.3 11.8 4.5 11.2 6.2 11.6 8.1 11.4 9.4 11.3 10.7 11.7 12.3 11.0 12.7 11.5 13.3 11.2 13.9 13.7 15.9 8.5 8.4M672.0 402.3l6.0-0.3 7.7-0.2 16.0 0.3 12.3 1.0 10.4 1.2 11.6 2.0 11.1 2.5 10.9 3.3 11.8 4.5 11.2 6.2 11.6 8.1 11.4 9.4 11.3 10.7 11.7 12.3 11.0 12.7 11.5 13.3 11.2 13.9 13.7 15.9 8.5 8.4M674.1 401.2l6.0-0.3 7.7-0.2 16.0 0.3 12.3 1.0 10.4 1.2 11.6 2.0 11.1 2.5 10.9 3.3 11.8 4.5 11.2 6.2 11.6 8.1 11.4 9.4 11.3 10.7 11.7 12.3 11.0 12.7 11.5 13.3 11.2 13.9 13.7 15.9 8.5 8.4M676.2 400.0l6.0-0.3 7.7-0.2 16.0 0.3 12.3 1.0 10.4 1.2 11.6 2.0 11.1 2.5 10.9 3.3 11.8 4.5 11.2 6.2 11.6 8.1 11.4 9.4 11.3 10.7 11.7 12.3 11.0 12.7 11.5 13.3 11.2 13.9 13.7 15.9 8.5 8.4M678.3 398.8l6.0-0.3 7.7-0.2 16.0 0.3 12.3 1.0 10.4 1.2 11.6 2.0 11.1 2.5 10.9 3.3 11.8 4.5 11.2 6.2 11.6 8.1 11.4 9.4 11.3 10.7 11.7 12.3 11.0 12.7 11.5 13.3 11.2 13.9 13.7 15.9 8.5 8.4M680.4 397.6l6.0-0.3 7.7-0.2 16.0 0.3 12.3 1.0 10.4 1.2 11.6 2.0 11.1 2.5 10.9 3.3 11.8 4.5 11.2 6.2 11.6 8.1 11.4 9.4 11.3 10.7 11.7 12.3 11.0 12.7 11.5 13.3 11.2 13.9 13.7 15.9 8.5 8.4M682.5 396.4l6.0-0.3 7.7-0.2 16.0 0.3 12.3 1.0 10.4 1.2 11.6 2.0 11.1 2.5 10.9 3.3 11.8 4.5 11.2 6.2 11.6 8.1 11.4 9.4 11.3 10.7 11.7 12.3 11.0 12.7 11.5 13.3 11.2 13.9 13.7 15.9 8.5 8.4M684.6 395.2l6.0-0.3 7.7-0.2 16.0 0.3 12.3 1.0 10.4 1.2 11.6 2.0 11.1 2.5 10.9 3.3 11.8 4.5 11.2 6.2 11.6 8.1 11.4 9.4 11.3 10.7 11.7 12.3 11.0 12.7 11.5 13.3 11.2 13.9 13.7 15.9 8.5 8.4M686.7 394.0l6.0-0.3 7.7-0.2 16.0 0.3 12.3 1.0 10.4 1.2 11.6 2.0 11.1 2.5 10.9 3.3 11.8 4.5 11.2 6.2 11.6 8.1 11.4 9.4 11.3 10.7 11.7 12.3 11.0 12.7 11.5 13.3 11.2 13.9 13.7 15.9 8.5 8.4M688.8 392.9l6.0-0.3 7.7-0.2 16.0 0.3 12.3 1.0 10.4 1.2 11.6 2.0 11.1 2.5 10.9 3.3 11.8 4.5 11.2 6.2 11.6 8.1 11.4 9.4 11.3 10.7 11.7 12.3 11.0 12.7 11.5 13.3 11.2 13.9 13.7 15.9 8.5 8.4M690.9 391.7l6.0-0.3 7.7-0.2 16.0 0.3 12.3 1.0 10.4 1.2 11.6 2.0 11.1 2.5 10.9 3.3 11.8 4.5 11.2 6.2 11.6 8.1 11.4 9.4 11.3 10.7 11.7 12.3 11.0 12.7 11.5 13.3 11.2 13.9 13.7 15.9 8.5 8.4M693.0 390.5l6.0-0.3 7.7-0.2 16.0 0.3 12.3 1.0 10.4 1.2 11.6 2.0 11.1 2.5 10.9 3.3 11.8 4.5 11.2 6.2 11.6 8.1 11.4 9.4 11.3 10.7 11.7 12.3 11.0 12.7 11.5 13.3 11.2 13.9 13.7 15.9 8.5 8.4M695.1 389.3l6.0-0.3 7.7-0.2 16.0 0.3 12.3 1.0 10.4 1.2 11.6 2.0 11.1 2.5 10.9 3.3 11.8 4.5 11.2 6.2 11.6 8.1 11.4 9.4 11.3 10.7 11.7 12.3 11.0 12.7 11.5 13.3 11.2 13.9 13.7 15.9 8.5 8.4M697.2 388.1l6.0-0.3 7.7-0.2 16.0 0.3 12.3 1.0 10.4 1.2 11.6 2.0 11.1 2.5 10.9 3.3 11.8 4.5 11.2 6.2 11.6 8.1 11.4 9.4 11.3 10.7 11.7 12.3 11.0 12.7 11.5 13.3 11.2 13.9 13.7 15.9 8.5 8.4M699.3 386.9l6.0-0.3 7.7-0.2 16.0 0.3 12.3 1.0 10.4 1.2 11.6 2.0 11.1 2.5 10.9 3.3 11.8 4.5 11.2 6.2 11.6 8.1 11.4 9.4 11.3 10.7 11.7 12.3 11.0 12.7 11.5 13.3 11.2 13.9 13.7 15.9 8.5 8.4M701.4 385.7l6.0-0.3 7.7-0.2 16.0 0.3 12.3 1.0 10.4 1.2 11.6 2.0 11.1 2.5 10.9 3.3 11.8 4.5 11.2 6.2 11.6 8.1 11.4 9.4 11.3 10.7 11.7 12.3 11.0 12.7 11.5 13.3 11.2 13.9 13.7 15.9 8.5 8.4M703.5 384.5l6.0-0.3 7.7-0.2 16.0 0.3 12.3 1.0 10.4 1.2 11.6 2.0 11.1 2.5 10.9 3.3 11.8 4.5 11.2 6.2 11.6 8.1 11.4 9.4 11.3 10.7 11.7 12.3 11.0 12.7 11.5 13.3 11.2 13.9 13.7 15.9 8.5 8.4M705.6 383.4l6.0-0.3 7.7-0.2 16.0 0.3 12.3 1.0 10.4 1.2 11.6 2.0 11.1 2.5 10.9 3.3 11.8 4.5 11.2 6.2 11.6 8.1 11.4 9.4 11.3 10.7 11.7 12.3 11.0 12.7 11.5 13.3 11.2 13.9 13.7 15.9 8.5 8.4M707.7 382.2l6.0-0.3 7.7-0.2 16.0 0.3 12.3 1.0 10.4 1.2 11.6 2.0 11.1 2.5 10.9 3.3 11.8 4.5 11.2 6.2 11.6 8.1 11.4 9.4 11.3 10.7 11.7 12.3 11.0 12.7 11.5 13.3 11.2 13.9 13.7 15.9 8.5 8.4M709.8 381.0l6.0-0.3 7.7-0.2 16.0 0.3 12.3 1.0 10.4 1.2 11.6 2.0 11.1 2.5 10.9 3.3 11.8 4.5 11.2 6.2 11.6 8.1 11.4 9.4 11.3 10.7 11.7 12.3 11.0 12.7 11.5 13.3 11.2 13.9 13.7 15.9 8.5 8.4M711.9 379.8l6.0-0.3 7.7-0.2 16.0 0.3 12.3 1.0 10.4 1.2 11.6 2.0 11.1 2.5 10.9 3.3 11.8 4.5 11.2 6.2 11.6 8.1 11.4 9.4 11.3 10.7 11.7 12.3 11.0 12.7 11.5 13.3 11.2 13.9 13.7 15.9 8.5 8.4M714.0 378.6l6.0-0.3 7.7-0.2 16.0 0.3 12.3 1.0 10.4 1.2 11.6 2.0 11.1 2.5 10.9 3.3 11.8 4.5 11.2 6.2 11.6 8.1 11.4 9.4 11.3 10.7 11.7 12.3 11.0 12.7 11.5 13.3 11.2 13.9 13.7 15.9 8.5 8.4M716.1 377.4l6.0-0.3 7.7-0.2 16.0 0.3 12.3 1.0 10.4 1.2 11.6 2.0 11.1 2.5 10.9 3.3 11.8 4.5 11.2 6.2 11.6 8.1 11.4 9.4 11.3 10.7 11.7 12.3 11.0 12.7 11.5 13.3 11.2 13.9 13.7 15.9 8.5 8.4M718.2 376.2l6.0-0.3 7.7-0.2 16.0 0.3 12.3 1.0 10.4 1.2 11.6 2.0 11.1 2.5 10.9 3.3 11.8 4.5 11.2 6.2 11.6 8.1 11.4 9.4 11.3 10.7 11.7 12.3 11.0 12.7 11.5 13.3 11.2 13.9 13.7 15.9 8.5 8.4M720.3 375.0l6.0-0.3 7.7-0.2 16.0 0.3 12.3 1.0 10.4 1.2 11.6 2.0 11.1 2.5 10.9 3.3 11.8 4.5 11.2 6.2 11.6 8.1 11.4 9.4 11.3 10.7 11.7 12.3 11.0 12.7 11.5 13.3 11.2 13.9 13.7 15.9 8.5 8.4M722.4 373.8l6.0-0.3 7.7-0.2 16.0 0.3 12.3 1.0 10.4 1.2 11.6 2.0 11.1 2.5 10.9 3.3 11.8 4.5 11.2 6.2 11.6 8.1 11.4 9.4 11.3 10.7 11.7 12.3 11.0 12.7 11.5 13.3 11.2 13.9 13.7 15.9 8.5 8.4M724.5 372.6l6.0-0.3 7.7-0.2 16.0 0.3 12.3 1.0 10.4 1.2 11.6 2.0 11.1 2.5 10.9 3.3 11.8 4.5 11.2 6.2 11.6 8.1 11.4 9.4 11.3 10.7 11.7 12.3 11.0 12.7 11.5 13.3 11.2 13.9 13.7 15.9 8.5 8.4M726.6 371.3l6.0-0.3 7.7-0.2 16.0 0.3 12.3 1.0 10.4 1.2 11.6 2.0 11.1 2.5 10.9 3.3 11.8 4.5 11.2 6.2 11.6 8.1 11.4 9.4 11.3 10.7 11.7 12.3 11.0 12.7 11.5 13.3 11.2 13.9 13.7 15.9 8.5 8.4M728.7 370.1l6.0-0.3 7.7-0.2 16.0 0.3 12.3 1.0 10.4 1.2 11.6 2.0 11.1 2.5 10.9 3.3 11.8 4.5 11.2 6.2 11.6 8.1 11.4 9.4 11.3 10.7 11.7 12.3 11.0 12.7 11.5 13.3 11.2 13.9 13.7 15.9 8.5 8.4M730.8 368.9l6.0-0.3 7.7-0.2 16.0 0.3 12.3 1.0 10.4 1.2 11.6 2.0 11.1 2.5 10.9 3.3 11.8 4.5 11.2 6.2 11.6 8.1 11.4 9.4 11.3 10.7 11.7 12.3 11.0 12.7 11.5 13.3 11.2 13.9 13.7 15.9 8.5 8.4M732.9 367.7l6.0-0.3 7.7-0.2 16.0 0.3 12.3 1.0 10.4 1.2 11.6 2.0 11.1 2.5 10.9 3.3 11.8 4.5 11.2 6.2 11.6 8.1 11.4 9.4 11.3 10.7 11.7 12.3 11.0 12.7 11.5 13.3 11.2 13.9 13.7 15.9 8.5 8.4M735.0 366.4l6.0-0.3 7.7-0.2 16.0 0.3 12.3 1.0 10.4 1.2 11.6 2.0 11.1 2.5 10.9 3.3 11.8 4.5 11.2 6.2 11.6 8.1 11.4 9.4 11.3 10.7 11.7 12.3 11.0 12.7 11.5 13.3 11.2 13.9 13.7 15.9 8.5 8.4M737.1 365.2l6.0-0.3 7.7-0.2 16.0 0.3 12.3 1.0 10.4 1.2 11.6 2.0 11.1 2.5 10.9 3.3 11.8 4.5 11.2 6.2 11.6 8.1 11.4 9.4 11.3 10.7 11.7 12.3 11.0 12.7 11.5 13.3 11.2 13.9 13.7 15.9 8.5 8.4M739.2 364.0l6.0-0.3 7.7-0.2 16.0 0.3 12.3 1.0 10.4 1.2 11.6 2.0 11.1 2.5 10.9 3.3 11.8 4.5 11.2 6.2 11.6 8.1 11.4 9.4 11.3 10.7 11.7 12.3 11.0 12.7 11.5 13.3 11.2 13.9 13.7 15.9 8.5 8.4M741.3 362.8l6.0-0.3 7.7-0.2 16.0 0.3 12.3 1.0 10.4 1.2 11.6 2.0 11.1 2.5 10.9 3.3 11.8 4.5 11.2 6.2 11.6 8.1 11.4 9.4 11.3 10.7 11.7 12.3 11.0 12.7 11.5 13.3 11.2 13.9 13.7 15.9 8.5 8.4M743.4 361.5l6.0-0.3 7.7-0.2 16.0 0.3 12.3 1.0 10.4 1.2 11.6 2.0 11.1 2.5 10.9 3.3 11.8 4.5 11.2 6.2 11.6 8.1 11.4 9.4 11.3 10.7 11.7 12.3 11.0 12.7 11.5 13.3 11.2 13.9 13.7 15.9 8.5 8.4M745.5 360.3l6.0-0.3 7.7-0.2 16.0 0.3 12.3 1.0 10.4 1.2 11.6 2.0 11.1 2.5 10.9 3.3 11.8 4.5 11.2 6.2 11.6 8.1 11.4 9.4 11.3 10.7 11.7 12.3 11.0 12.7 11.5 13.3 11.2 13.9 13.7 15.9 8.5 8.4M747.6 359.0l6.0-0.3 7.7-0.2 16.0 0.3 12.3 1.0 10.4 1.2 11.6 2.0 11.1 2.5 10.9 3.3 11.8 4.5 11.2 6.2 11.6 8.1 11.4 9.4 11.3 10.7 11.7 12.3 11.0 12.7 11.5 13.3 11.2 13.9 13.7 15.9 8.5 8.4M749.7 357.7l6.0-0.3 7.7-0.2 16.0 0.3 12.3 1.0 10.4 1.2 11.6 2.0 11.1 2.5 10.9 3.3 11.8 4.5 11.2 6.2 11.6 8.1 11.4 9.4 11.3 10.7 11.7 12.3 11.0 12.7 11.5 13.3 11.2 13.9 13.7 15.9 8.5 8.4M751.8 356.4l6.0-0.3 7.7-0.2 16.0 0.3 12.3 1.0 10.4 1.2 11.6 2.0 11.1 2.5 10.9 3.3 11.8 4.5 11.2 6.2 11.6 8.1 11.4 9.4 11.3 10.7 11.7 12.3 11.0 12.7 11.5 13.3 11.2 13.9 13.7 15.9 8.5 8.4M753.9 355.2l6.0-0.3 7.7-0.2 16.0 0.3 12.3 1.0 10.4 1.2 11.6 2.0 11.1 2.5 10.9 3.3 11.8 4.5 11.2 6.2 11.6 8.1 11.4 9.4 11.3 10.7 11.7 12.3 11.0 12.7 11.5 13.3 11.2 13.9 13.7 15.9 8.5 8.4M756.0 353.9l6.0-0.3 7.7-0.2 16.0 0.3 12.3 1.0 10.4 1.2 11.6 2.0 11.1 2.5 10.9 3.3 11.8 4.5 11.2 6.2 11.6 8.1 11.4 9.4 11.3 10.7 11.7 12.3 11.0 12.7 11.5 13.3 11.2 13.9 13.7 15.9 8.5 8.4M758.1 352.6l6.0-0.3 7.7-0.2 16.0 0.3 12.3 1.0 10.4 1.2 11.6 2.0 11.1 2.5 10.9 3.3 11.8 4.5 11.2 6.2 11.6 8.1 11.4 9.4 11.3 10.7 11.7 12.3 11.0 12.7 11.5 13.3 11.2 13.9 13.7 15.9 8.5 8.4M760.2 351.3l6.0-0.3 7.7-0.2 16.0 0.3 12.3 1.0 10.4 1.2 11.6 2.0 11.1 2.5 10.9 3.3 11.8 4.5 11.2 6.2 11.6 8.1 11.4 9.4 11.3 10.7 11.7 12.3 11.0 12.7 11.5 13.3 11.2 13.9 13.7 15.9 8.5 8.4M762.3 350.0l6.0-0.3 7.7-0.2 16.0 0.3 12.3 1.0 10.4 1.2 11.6 2.0 11.1 2.5 10.9 3.3 11.8 4.5 11.2 6.2 11.6 8.1 11.4 9.4 11.3 10.7 11.7 12.3 11.0 12.7 11.5 13.3 11.2 13.9 13.7 15.9 8.5 8.4M764.4 348.7l6.0-0.3 7.7-0.2 16.0 0.3 12.3 1.0 10.4 1.2 11.6 2.0 11.1 2.5 10.9 3.3 11.8 4.5 11.2 6.2 11.6 8.1 11.4 9.4 11.3 10.7 11.7 12.3 11.0 12.7 11.5 13.3 11.2 13.9 13.7 15.9 8.5 8.4M766.5 347.4l6.0-0.3 7.7-0.2 16.0 0.3 12.3 1.0 10.4 1.2 11.6 2.0 11.1 2.5 10.9 3.3 11.8 4.5 11.2 6.2 11.6 8.1 11.4 9.4 11.3 10.7 11.7 12.3 11.0 12.7 11.5 13.3 11.2 13.9 13.7 15.9 8.5 8.4M768.6 346.2l6.0-0.3 7.7-0.2 16.0 0.3 12.3 1.0 10.4 1.2 11.6 2.0 11.1 2.5 10.9 3.3 11.8 4.5 11.2 6.2 11.6 8.1 11.4 9.4 11.3 10.7 11.7 12.3 11.0 12.7 11.5 13.3 11.2 13.9 13.7 15.9 8.5 8.4M770.7 344.9l6.0-0.3 7.7-0.2 16.0 0.3 12.3 1.0 10.4 1.2 11.6 2.0 11.1 2.5 10.9 3.3 11.8 4.5 11.2 6.2 11.6 8.1 11.4 9.4 11.3 10.7 11.7 12.3 11.0 12.7 11.5 13.3 11.2 13.9 13.7 15.9 8.5 8.4M772.8 343.6l6.0-0.3 7.7-0.2 16.0 0.3 12.3 1.0 10.4 1.2 11.6 2.0 11.1 2.5 10.9 3.3 11.8 4.5 11.2 6.2 11.6 8.1 11.4 9.4 11.3 10.7 11.7 12.3 11.0 12.7 11.5 13.3 11.2 13.9 13.7 15.9 8.5 8.4M774.9 342.3l6.0-0.3 7.7-0.2 16.0 0.3 12.3 1.0 10.4 1.2 11.6 2.0 11.1 2.5 10.9 3.3 11.8 4.5 11.2 6.2 11.6 8.1 11.4 9.4 11.3 10.7 11.7 12.3 11.0 12.7 11.5 13.3 11.2 13.9 13.7 15.9 8.5 8.4M777.0 341.0l6.0-0.3 7.7-0.2 16.0 0.3 12.3 1.0 10.4 1.2 11.6 2.0 11.1 2.5 10.9 3.3 11.8 4.5 11.2 6.2 11.6 8.1 11.4 9.4 11.3 10.7 11.7 12.3 11.0 12.7 11.5 13.3 11.2 13.9 13.7 15.9 8.5 8.4M779.1 339.7l6.0-0.3 7.7-0.2 16.0 0.3 12.3 1.0 10.4 1.2 11.6 2.0 11.1 2.5 10.9 3.3 11.8 4.5 11.2 6.2 11.6 8.1 11.4 9.4 11.3 10.7 11.7 12.3 11.0 12.7 11.5 13.3 11.2 13.9 13.7 15.9 8.5 8.4M781.2 338.4l6.0-0.3 7.7-0.2 16.0 0.3 12.3 1.0 10.4 1.2 11.6 2.0 11.1 2.5 10.9 3.3 11.8 4.5 11.2 6.2 11.6 8.1 11.4 9.4 11.3 10.7 11.7 12.3 11.0 12.7 11.5 13.3 11.2 13.9 13.7 15.9 8.5 8.4M783.3 337.2l6.0-0.3 7.7-0.2 16.0 0.3 12.3 1.0 10.4 1.2 11.6 2.0 11.1 2.5 10.9 3.3 11.8 4.5 11.2 6.2 11.6 8.1 11.4 9.4 11.3 10.7 11.7 12.3 11.0 12.7 11.5 13.3 11.2 13.9 13.7 15.9 8.5 8.4M785.4 335.9l6.0-0.3 7.7-0.2 16.0 0.3 12.3 1.0 10.4 1.2 11.6 2.0 11.1 2.5 10.9 3.3 11.8 4.5 11.2 6.2 11.6 8.1 11.4 9.4 11.3 10.7 11.7 12.3 11.0 12.7 11.5 13.3 11.2 13.9 13.7 15.9 8.5 8.4M787.5 334.6l6.0-0.3 7.7-0.2 16.0 0.3 12.3 1.0 10.4 1.2 11.6 2.0 11.1 2.5 10.9 3.3 11.8 4.5 11.2 6.2 11.6 8.1 11.4 9.4 11.3 10.7 11.7 12.3 11.0 12.7 11.5 13.3 11.2 13.9 13.7 15.9 8.5 8.4M789.6 333.3l6.0-0.3 7.7-0.2 16.0 0.3 12.3 1.0 10.4 1.2 11.6 2.0 11.1 2.5 10.9 3.3 11.8 4.5 11.2 6.2 11.6 8.1 11.4 9.4 11.3 10.7 11.7 12.3 11.0 12.7 11.5 13.3 11.2 13.9 13.7 15.9 8.5 8.4M791.7 332.0l6.0-0.3 7.7-0.2 16.0 0.3 12.3 1.0 10.4 1.2 11.6 2.0 11.1 2.5 10.9 3.3 11.8 4.5 11.2 6.2 11.6 8.1 11.4 9.4 11.3 10.7 11.7 12.3 11.0 12.7 11.5 13.3 11.2 13.9 13.7 15.9 8.5 8.4M793.8 330.8l6.0-0.3 7.7-0.2 16.0 0.3 12.3 1.0 10.4 1.2 11.6 2.0 11.1 2.5 10.9 3.3 11.8 4.5 11.2 6.2 11.6 8.1 11.4 9.4 11.3 10.7 11.7 12.3 11.0 12.7 11.5 13.3 11.2 13.9 13.7 15.9 8.5 8.4M795.9 329.6l6.0-0.3 7.7-0.2 16.0 0.3 12.3 1.0 10.4 1.2 11.6 2.0 11.1 2.5 10.9 3.3 11.8 4.5 11.2 6.2 11.6 8.1 11.4 9.4 11.3 10.7 11.7 12.3 11.0 12.7 11.5 13.3 11.2 13.9 13.7 15.9 8.5 8.4M798.0 328.4l6.0-0.3 7.7-0.2 16.0 0.3 12.3 1.0 10.4 1.2 11.6 2.0 11.1 2.5 10.9 3.3 11.8 4.5 11.2 6.2 11.6 8.1 11.4 9.4 11.3 10.7 11.7 12.3 11.0 12.7 11.5 13.3 11.2 13.9 13.7 15.9 8.5 8.4M800.1 327.2l6.0-0.3 7.7-0.2 16.0 0.3 12.3 1.0 10.4 1.2 11.6 2.0 11.1 2.5 10.9 3.3 11.8 4.5 11.2 6.2 11.6 8.1 11.4 9.4 11.3 10.7 11.7 12.3 11.0 12.7 11.5 13.3 11.2 13.9 13.7 15.9 8.5 8.4M802.2 326.0l6.0-0.3 7.7-0.2 16.0 0.3 12.3 1.0 10.4 1.2 11.6 2.0 11.1 2.5 10.9 3.3 11.8 4.5 11.2 6.2 11.6 8.1 11.4 9.4 11.3 10.7 11.7 12.3 11.0 12.7 11.5 13.3 11.2 13.9 13.7 15.9 8.5 8.4M804.3 324.8l6.0-0.3 7.7-0.2 16.0 0.3 12.3 1.0 10.4 1.2 11.6 2.0 11.1 2.5 10.9 3.3 11.8 4.5 11.2 6.2 11.6 8.1 11.4 9.4 11.3 10.7 11.7 12.3 11.0 12.7 11.5 13.3 11.2 13.9 13.7 15.9 8.5 8.4M806.4 323.6l6.0-0.3 7.7-0.2 16.0 0.3 12.3 1.0 10.4 1.2 11.6 2.0 11.1 2.5 10.9 3.3 11.8 4.5 11.2 6.2 11.6 8.1 11.4 9.4 11.3 10.7 11.7 12.3 11.0 12.7 11.5 13.3 11.2 13.9 13.7 15.9 8.5 8.4M808.5 322.4l6.0-0.3 7.7-0.2 16.0 0.3 12.3 1.0 10.4 1.2 11.6 2.0 11.1 2.5 10.9 3.3 11.8 4.5 11.2 6.2 11.6 8.1 11.4 9.4 11.3 10.7 11.7 12.3 11.0 12.7 11.5 13.3 11.2 13.9 13.7 15.9 8.5 8.4M810.6 321.2l6.0-0.3 7.7-0.2 16.0 0.3 12.3 1.0 10.4 1.2 11.6 2.0 11.1 2.5 10.9 3.3 11.8 4.5 11.2 6.2 11.6 8.1 11.4 9.4 11.3 10.7 11.7 12.3 11.0 12.7 11.5 13.3 11.2 13.9 13.7 15.9 8.5 8.4M812.7 320.0l6.0-0.3 7.7-0.2 16.0 0.3 12.3 1.0 10.4 1.2 11.6 2.0 11.1 2.5 10.9 3.3 11.8 4.5 11.2 6.2 11.6 8.1 11.4 9.4 11.3 10.7 11.7 12.3 11.0 12.7 11.5 13.3 11.2 13.9 13.7 15.9 8.5 8.4M814.8 318.8l6.0-0.3 7.7-0.2 16.0 0.3 12.3 1.0 10.4 1.2 11.6 2.0 11.1 2.5 10.9 3.3 11.8 4.5 11.2 6.2 11.6 8.1 11.4 9.4 11.3 10.7 11.7 12.3 11.0 12.7 11.5 13.3 11.2 13.9 13.7 15.9 8.5 8.4M816.9 317.6l6.0-0.3 7.7-0.2 16.0 0.3 12.3 1.0 10.4 1.2 11.6 2.0 11.1 2.5 10.9 3.3 11.8 4.5 11.2 6.2 11.6 8.1 11.4 9.4 11.3 10.7 11.7 12.3 11.0 12.7 11.5 13.3 11.2 13.9 13.7 15.9 8.5 8.4M819.0 316.4l6.0-0.3 7.7-0.2 16.0 0.3 12.3 1.0 10.4 1.2 11.6 2.0 11.1 2.5 10.9 3.3 11.8 4.5 11.2 6.2 11.6 8.1 11.4 9.4 11.3 10.7 11.7 12.3 11.0 12.7 11.5 13.3 11.2 13.9 13.7 15.9 8.5 8.4M821.1 315.2l6.0-0.3 7.7-0.2 16.0 0.3 12.3 1.0 10.4 1.2 11.6 2.0 11.1 2.5 10.9 3.3 11.8 4.5 11.2 6.2 11.6 8.1 11.4 9.4 11.3 10.7 11.7 12.3 11.0 12.7 11.5 13.3 11.2 13.9 13.7 15.9 8.5 8.4M823.2 314.0l6.0-0.3 7.7-0.2 16.0 0.3 12.3 1.0 10.4 1.2 11.6 2.0 11.1 2.5 10.9 3.3 11.8 4.5 11.2 6.2 11.6 8.1 11.4 9.4 11.3 10.7 11.7 12.3 11.0 12.7 11.5 13.3 11.2 13.9 13.7 15.9 8.5 8.4M825.3 312.8l6.0-0.3 7.7-0.2 16.0 0.3 12.3 1.0 10.4 1.2 11.6 2.0 11.1 2.5 10.9 3.3 11.8 4.5 11.2 6.2 11.6 8.1 11.4 9.4 11.3 10.7 11.7 12.3 11.0 12.7 11.5 13.3 11.2 13.9 13.7 15.9 8.5 8.4M827.4 311.6l6.0-0.3 7.7-0.2 16.0 0.3 12.3 1.0 10.4 1.2 11.6 2.0 11.1 2.5 10.9 3.3 11.8 4.5 11.2 6.2 11.6 8.1 11.4 9.4 11.3 10.7 11.7 12.3 11.0 12.7 11.5 13.3 11.2 13.9 13.7 15.9 8.5 8.4M829.5 310.4l6.0-0.3 7.7-0.2 16.0 0.3 12.3 1.0 10.4 1.2 11.6 2.0 11.1 2.5 10.9 3.3 11.8 4.5 11.2 6.2 11.6 8.1 11.4 9.4 11.3 10.7 11.7 12.3 11.0 12.7 11.5 13.3 11.2 13.9 13.7 15.9 8.5 8.4M831.6 309.2l6.0-0.3 7.7-0.2 16.0 0.3 12.3 1.0 10.4 1.2 11.6 2.0 11.1 2.5 10.9 3.3 11.8 4.5 11.2 6.2 11.6 8.1 11.4 9.4 11.3 10.7 11.7 12.3 11.0 12.7 11.5 13.3 11.2 13.9 13.7 15.9 8.5 8.4M833.7 308.0l6.0-0.3 7.7-0.2 16.0 0.3 12.3 1.0 10.4 1.2 11.6 2.0 11.1 2.5 10.9 3.3 11.8 4.5 11.2 6.2 11.6 8.1 11.4 9.4 11.3 10.7 11.7 12.3 11.0 12.7 11.5 13.3 11.2 13.9 13.7 15.9 8.5 8.4M835.8 306.8l6.0-0.3 7.7-0.2 16.0 0.3 12.3 1.0 10.4 1.2 11.6 2.0 11.1 2.5 10.9 3.3 11.8 4.5 11.2 6.2 11.6 8.1 11.4 9.4 11.3 10.7 11.7 12.3 11.0 12.7 11.5 13.3 11.2 13.9 13.7 15.9 8.5 8.4M837.9 305.6l6.0-0.3 7.7-0.2 16.0 0.3 12.3 1.0 10.4 1.2 11.6 2.0 11.1 2.5 10.9 3.3 11.8 4.5 11.2 6.2 11.6 8.1 11.4 9.4 11.3 10.7 11.7 12.3 11.0 12.7 11.5 13.3 11.2 13.9 13.7 15.9 8.5 8.4M840.0 304.4l6.0-0.3 7.7-0.2 16.0 0.3 12.3 1.0 10.4 1.2 11.6 2.0 11.1 2.5 10.9 3.3 11.8 4.5 11.2 6.2 11.6 8.1 11.4 9.4 11.3 10.7 11.7 12.3 11.0 12.7 11.5 13.3 11.2 13.9 13.7 15.9 8.5 8.4M842.1 303.2l6.0-0.3 7.7-0.2 16.0 0.3 12.3 1.0 10.4 1.2 11.6 2.0 11.1 2.5 10.9 3.3 11.8 4.5 11.2 6.2 11.6 8.1 11.4 9.4 11.3 10.7 11.7 12.3 11.0 12.7 11.5 13.3 11.2 13.9 13.7 15.9 8.5 8.4M844.2 302.0l6.0-0.3 7.7-0.2 16.0 0.3 12.3 1.0 10.4 1.2 11.6 2.0 11.1 2.5 10.9 3.3 11.8 4.5 11.2 6.2 11.6 8.1 11.4 9.4 11.3 10.7 11.7 12.3 11.0 12.7 11.5 13.3 11.2 13.9 13.7 15.9 8.5 8.4M846.3 300.8l6.0-0.3 7.7-0.2 16.0 0.3 12.3 1.0 10.4 1.2 11.6 2.0 11.1 2.5 10.9 3.3 11.8 4.5 11.2 6.2 11.6 8.1 11.4 9.4 11.3 10.7 11.7 12.3 11.0 12.7 11.5 13.3 11.2 13.9 13.7 15.9 8.5 8.4M848.4 299.6l6.0-0.3 7.7-0.2 16.0 0.3 12.3 1.0 10.4 1.2 11.6 2.0 11.1 2.5 10.9 3.3 11.8 4.5 11.2 6.2 11.6 8.1 11.4 9.4 11.3 10.7 11.7 12.3 11.0 12.7 11.5 13.3 11.2 13.9 13.7 15.9 8.5 8.4M850.5 298.4l6.0-0.3 7.7-0.2 16.0 0.3 12.3 1.0 10.4 1.2 11.6 2.0 11.1 2.5 10.9 3.3 11.8 4.5 11.2 6.2 11.6 8.1 11.4 9.4 11.3 10.7 11.7 12.3 11.0 12.7 11.5 13.3 11.2 13.9 13.7 15.9 8.5 8.4M852.6 297.2l6.0-0.3 7.7-0.2 16.0 0.3 12.3 1.0 10.4 1.2 11.6 2.0 11.1 2.5 10.9 3.3 11.8 4.5 11.2 6.2 11.6 8.1 11.4 9.4 11.3 10.7 11.7 12.3 11.0 12.7 11.5 13.3 11.2 13.9 13.7 15.9 8.5 8.4M854.7 295.9l6.0-0.3 7.7-0.2 16.0 0.3 12.3 1.0 10.4 1.2 11.6 2.0 11.1 2.5 10.9 3.3 11.8 4.5 11.2 6.2 11.6 8.1 11.4 9.4 11.3 10.7 11.7 12.3 11.0 12.7 11.5 13.3 11.2 13.9 13.7 15.9 8.5 8.4M856.8 294.7l6.0-0.3 7.7-0.2 16.0 0.3 12.3 1.0 10.4 1.2 11.6 2.0 11.1 2.5 10.9 3.3 11.8 4.5 11.2 6.2 11.6 8.1 11.4 9.4 11.3 10.7 11.7 12.3 11.0 12.7 11.5 13.3 11.2 13.9 13.7 15.9 8.5 8.4M858.9 293.5l6.0-0.3 7.7-0.2 16.0 0.3 12.3 1.0 10.4 1.2 11.6 2.0 11.1 2.5 10.9 3.3 11.8 4.5 11.2 6.2 11.6 8.1 11.4 9.4 11.3 10.7 11.7 12.3 11.0 12.7 11.5 13.3 11.2 13.9 13.7 15.9 8.5 8.4M861.0 292.3l6.0-0.3 7.7-0.2 16.0 0.3 12.3 1.0 10.4 1.2 11.6 2.0 11.1 2.5 10.9 3.3 11.8 4.5 11.2 6.2 11.6 8.1 11.4 9.4 11.3 10.7 11.7 12.3 11.0 12.7 11.5 13.3 11.2 13.9 13.7 15.9 8.5 8.4M863.1 291.1l6.0-0.3 7.7-0.2 16.0 0.3 12.3 1.0 10.4 1.2 11.6 2.0 11.1 2.5 10.9 3.3 11.8 4.5 11.2 6.2 11.6 8.1 11.4 9.4 11.3 10.7 11.7 12.3 11.0 12.7 11.5 13.3 11.2 13.9 13.7 15.9 8.5 8.4M865.2 289.9l6.0-0.3 7.7-0.2 16.0 0.3 12.3 1.0 10.4 1.2 11.6 2.0 11.1 2.5 10.9 3.3 11.8 4.5 11.2 6.2 11.6 8.1 11.4 9.4 11.3 10.7 11.7 12.3 11.0 12.7 11.5 13.3 11.2 13.9 13.7 15.9 8.5 8.4M867.3 288.7l6.0-0.3 7.7-0.2 16.0 0.2 12.3 1.0 10.4 1.2 11.6 2.0 11.1 2.5 10.9 3.3 11.8 4.5 11.2 6.2 11.6 8.1 11.4 9.4 11.3 10.7 11.7 12.3 11.0 12.7 11.5 13.3 11.2 13.9 13.7 15.9 8.5 8.4M869.4 287.5l6.0-0.4 7.7-0.3 16.0 0.2 12.3 0.9 10.4 1.2 11.6 2.0 11.1 2.6 10.9 3.4 11.8 4.6 11.2 6.3 11.6 8.1 11.4 9.4 11.3 10.7 11.7 12.3 11.0 12.7 11.5 13.3 11.2 13.9 13.7 15.9 8.5 8.4M871.5 286.2l6.0-0.5 7.7-0.3 16.0 0.1 12.3 0.9 10.4 1.2 11.6 2.0 11.1 2.6 10.9 3.5 11.8 4.6 11.2 6.3 11.6 8.2 11.4 9.4 11.3 10.7 11.7 12.3 11.0 12.7 11.5 13.3 11.2 13.9 13.7 15.9 8.5 8.4M873.6 285.0l6.0-0.5 7.7-0.4 16.0 0.0 12.3 0.9 10.4 1.2 11.6 2.1 11.1 2.6 10.9 3.5 11.8 4.7 11.2 6.4 11.6 8.2 11.4 9.5 11.3 10.7 11.7 12.3 11.0 12.7 11.5 13.3 11.2 13.9 13.7 15.9 8.5 8.4M875.7 283.8l6.0-0.6 7.7-0.4 16.0-0.1 12.3 0.8 10.4 1.2 11.6 2.1 11.1 2.7 10.9 3.6 11.8 4.7 11.2 6.4 11.6 8.2 11.4 9.5 11.3 10.7 11.7 12.3 11.0 12.7 11.5 13.3 11.2 13.9 13.7 15.9 8.5 8.4M877.8 282.6l6.0-0.7 7.7-0.5 16.0-0.2 12.3 0.8 10.4 1.2 11.6 2.1 11.1 2.7 10.9 3.6 11.8 4.7 11.2 6.4 11.6 8.2 11.4 9.5 11.3 10.7 11.7 12.3 11.0 12.7 11.5 13.3 11.2 13.9 13.7 15.9 8.5 8.4M879.9 281.4l6.0-0.7 7.7-0.5 16.0-0.2 12.3 0.8 10.4 1.1 11.6 2.1 11.1 2.7 10.9 3.7 11.8 4.8 11.2 6.5 11.6 8.3 11.4 9.5 11.3 10.7 11.7 12.3 11.0 12.7 11.5 13.3 11.2 13.9 13.7 15.9 8.5 8.4M882.0 280.2l6.0-0.8 7.7-0.6 16.0-0.3 12.3 0.7 10.4 1.1 11.6 2.1 11.1 2.8 10.9 3.8 11.8 4.8 11.2 6.5 11.6 8.3 11.4 9.5 11.3 10.7 11.7 12.3 11.0 12.7 11.5 13.3 11.2 13.9 13.7 15.9 8.5 8.4M884.1 279.1l6.0-0.8 7.7-0.6 16.0-0.4 12.3 0.7 10.4 1.1 11.6 2.1 11.1 2.8 10.9 3.8 11.8 4.9 11.2 6.6 11.6 8.3 11.4 9.5 11.3 10.7 11.7 12.3 11.0 12.7 11.5 13.3 11.2 13.9 13.7 15.9 8.5 8.4M886.2 277.9l6.0-0.9 7.7-0.7 16.0-0.5 12.3 0.7 10.4 1.1 11.6 2.2 11.1 2.8 10.9 3.9 11.8 4.9 11.2 6.6 11.6 8.3 11.4 9.6 11.3 10.7 11.7 12.3 11.0 12.7 11.5 13.3 11.2 13.9 13.7 15.9 8.5 8.4M888.3 276.8l6.0-1.0 7.7-0.7 16.0-0.6 12.3 0.6 10.4 1.1 11.6 2.2 11.1 2.9 10.9 3.9 11.8 5.0 11.2 6.7 11.6 8.4 11.4 9.6 11.3 10.7 11.7 12.3 11.0 12.7 11.5 13.3 11.2 13.9 13.7 15.9 8.5 8.4M890.4 275.6l6.0-1.0 7.7-0.8 16.0-0.6 12.3 0.6 10.4 1.1 11.6 2.2 11.1 2.9 10.9 4.0 11.8 5.0 11.2 6.7 11.6 8.4 11.4 9.6 11.3 10.7 11.7 12.3 11.0 12.7 11.5 13.3 11.2 13.9 13.7 15.9 8.5 8.4M892.5 274.5l6.0-1.1 7.7-0.8 16.0-0.7 12.3 0.6 10.4 1.1 11.6 2.2 11.1 2.9 10.9 4.0 11.8 5.0 11.2 6.7 11.6 8.4 11.4 9.6 11.3 10.7 11.7 12.3 11.0 12.7 11.5 13.3 11.2 13.9 13.7 15.9 8.5 8.4M894.6 273.3l6.0-1.2 7.7-0.9 16.0-0.8 12.3 0.5 10.4 1.1 11.6 2.2 11.1 3.0 10.9 4.1 11.8 5.1 11.2 6.8 11.6 8.4 11.4 9.6 11.3 10.7 11.7 12.3 11.0 12.7 11.5 13.3 11.2 13.9 13.7 15.9 8.5 8.4M896.7 272.2l6.0-1.2 7.7-0.9 16.0-0.9 12.3 0.5 10.4 1.1 11.6 2.2 11.1 3.0 10.9 4.2 11.8 5.1 11.2 6.8 11.6 8.5 11.4 9.6 11.3 10.7 11.7 12.3 11.0 12.7 11.5 13.3 11.2 13.9 13.7 15.9 8.5 8.4M898.8 271.1l6.0-1.3 7.7-1.0 16.0-1.0 12.3 0.5 10.4 1.1 11.6 2.3 11.1 3.0 10.9 4.2 11.8 5.2 11.2 6.9 11.6 8.5 11.4 9.7 11.3 10.7 11.7 12.3 11.0 12.7 11.5 13.3 11.2 13.9 13.7 15.9 8.5 8.4M900.9 269.9l6.0-1.4 7.7-1.0 16.0-1.0 12.3 0.4 10.4 1.1 11.6 2.3 11.1 3.1 10.9 4.3 11.8 5.2 11.2 6.9 11.6 8.5 11.4 9.7 11.3 10.7 11.7 12.3 11.0 12.7 11.5 13.3 11.2 13.9 13.7 15.9 8.5 8.4M903.0 268.8l6.0-1.4 7.7-1.1 16.0-1.1 12.3 0.4 10.4 1.1 11.6 2.3 11.1 3.1 10.9 4.3 11.8 5.2 11.2 6.9 11.6 8.5 11.4 9.7 11.3 10.7 11.7 12.3 11.0 12.7 11.5 13.3 11.2 13.9 13.7 15.9 8.5 8.4M905.1 267.6l6.0-1.5 7.7-1.1 16.0-1.2 12.3 0.4 10.4 1.0 11.6 2.3 11.1 3.1 10.9 4.4 11.8 5.3 11.2 7.0 11.6 8.6 11.4 9.7 11.3 10.7 11.7 12.3 11.0 12.7 11.5 13.3 11.2 13.9 13.7 15.9 8.5 8.4M907.2 266.5l6.0-1.5 7.7-1.2 16.0-1.3 12.3 0.3 10.4 1.0 11.6 2.3 11.1 3.2 10.9 4.5 11.8 5.3 11.2 7.0 11.6 8.6 11.4 9.7 11.3 10.7 11.7 12.3 11.0 12.7 11.5 13.3 11.2 13.9 13.7 15.9 8.5 8.4M909.3 265.3l6.0-1.6 7.7-1.2 16.0-1.4 12.3 0.3 10.4 1.0 11.6 2.3 11.1 3.2 10.9 4.5 11.8 5.4 11.2 7.1 11.6 8.6 11.4 9.7 11.3 10.7 11.7 12.3 11.0 12.7 11.5 13.3 11.2 13.9 13.7 15.9 8.5 8.4M911.4 264.2l6.0-1.7 7.7-1.3 16.0-1.4 12.3 0.3 10.4 1.0 11.6 2.4 11.1 3.2 10.9 4.6 11.8 5.4 11.2 7.1 11.6 8.6 11.4 9.8 11.3 10.7 11.7 12.3 11.0 12.7 11.5 13.3 11.2 13.9 13.7 15.9 8.5 8.4M913.5 263.1l6.0-1.7 7.7-1.3 16.0-1.5 12.3 0.2 10.4 1.0 11.6 2.4 11.1 3.3 10.9 4.6 11.8 5.5 11.2 7.2 11.6 8.7 11.4 9.8 11.3 10.7 11.7 12.3 11.0 12.7 11.5 13.3 11.2 13.9 13.7 15.9 8.5 8.4M915.6 261.9l6.0-1.8 7.7-1.4 16.0-1.6 12.3 0.2 10.4 1.0 11.6 2.4 11.1 3.3 10.9 4.7 11.8 5.5 11.2 7.2 11.6 8.7 11.4 9.8 11.3 10.7 11.7 12.3 11.0 12.7 11.5 13.3 11.2 13.9 13.7 15.9 8.5 8.4" fill="none" stroke="#19eefc" stroke-width="0.85" shape-rendering="crispEdges" clip-path="url(#msil)"/>
<g clip-path="url(#msil)" opacity="0.72">
<path d="M716.0 600.0 L792.0 560.3 L868.0 517.0 L950.0 468.0 L1026.0 424.0 L1075.0 396.0" fill="none" stroke="#84848e" stroke-width="2.2" opacity="0.9" stroke-linecap="round" stroke-linejoin="round"/>
<path d="M714.5 597.0 L790.5 557.3 L866.5 514.0 L948.5 465.0 L1024.5 421.0 L1073.5 393.0" fill="none" stroke="#c6c6d2" stroke-width="1.4" opacity="0.8" stroke-linecap="round" stroke-linejoin="round"/>
<path d="M712.0 559.0 L870.0 478.0 L1010.0 411.5 L1072.0 377.0" fill="none" stroke="#d2d2de" stroke-width="1.3" opacity="0.7" stroke-linecap="round" stroke-linejoin="round"/>
<path d="M905.6 268.4 L930.0 271.0 L956.7 276.0 L995.0 288.8 L1033.4 314.4 L1059.0 342.5 L1069.0 363.0" fill="none" stroke="#85858f" stroke-width="2" opacity="0.9" stroke-linecap="round" stroke-linejoin="round"/>
<path d="M903.6 265.9 L928.0 268.5 L954.7 273.5 L993.0 286.3 L1031.4 311.9 L1057.0 340.0 L1067.0 360.5" fill="none" stroke="#cdcdd9" stroke-width="1.2" opacity="0.8" stroke-linecap="round" stroke-linejoin="round"/>
<path d="M503.0 505.0 L519.8 494.5 L559.5 469.5 L599.3 445.5 L639.0 422.5 L678.8 400.0 L718.6 377.5 L745.5 362.0 L790.9 334.5 L836.4 308.5 L881.8 282.5 L912.0 265.0" fill="none" stroke="#9c9ca6" stroke-width="2.2" opacity="0.9" stroke-linecap="round" stroke-linejoin="round"/>
<path d="M533.8 497.5 L573.5 472.5 L613.3 448.5 L653.0 425.5 L692.8 403.0 L732.6 380.5 L759.5 365.0 L804.9 337.5 L850.4 311.5 L895.8 285.5 L926.0 268.0" fill="none" stroke="#c9c9d5" stroke-width="1.2" opacity="0.6" stroke-linecap="round" stroke-linejoin="round"/>
<path d="M515.0 500.0 L545.0 496.0 L575.0 497.0 L610.0 507.0 L640.0 524.0 L668.0 549.0 L690.0 577.0 L705.0 604.0" fill="none" stroke="#8a8a94" stroke-width="1.8" opacity="0.8" stroke-linecap="round" stroke-linejoin="round"/>
<path d="M669.0 480.2 L699.0 458.0 L726.6 434.1 L756.0 410.0 L784.1 388.1 L812.0 369.0 L837.8 353.6 L855.0 339.0 L868.5 326.7 L881.0 315.0 L891.5 307.5 L918.4 307.5" fill="none" stroke="#d6d6e2" stroke-width="1.6" opacity="0.85" stroke-linecap="round" stroke-linejoin="round"/>
<path d="M665.2 491.7 L682.0 487.0 L699.7 480.1 L727.0 462.0 L753.4 441.8 L780.0 420.0 L807.1 399.6 L828.0 394.0 L849.3 391.9 L868.0 385.0 L883.8 376.6" fill="none" stroke="#8d8d97" stroke-width="1.8" opacity="0.8" stroke-linecap="round" stroke-linejoin="round"/>
<path d="M893.7 306.7 L930.0 305.5 L967.0 307.7" fill="none" stroke="#d8d8e4" stroke-width="2" opacity="0.9" stroke-linecap="round" stroke-linejoin="round"/>
<path d="M891.7 306.7 L909.6 329.6 L927.5 308.7" fill="none" stroke="#5fe6f2" stroke-width="1.1" opacity="0.8" stroke-linecap="round" stroke-linejoin="round"/>
<path d="M935.5 337.6 L957.0 345.0 L979.0 353.5 L998.0 362.0 L1015.0 371.4 L1017.0 377.0 L1005.0 375.4 L960.0 374.6 L920.0 374.0 L885.8 373.4" fill="none" stroke="#878791" stroke-width="2.2" opacity="0.85" stroke-linecap="round" stroke-linejoin="round"/>
<path d="M930.0 330.0 L950.0 336.0 L975.0 347.0 L1000.0 359.0 L1014.0 368.0" fill="none" stroke="#d4d4e0" stroke-width="1.3" opacity="0.8" stroke-linecap="round" stroke-linejoin="round"/>
<path d="M950.0 303.0 L962.0 303.0 L974.0 306.0 L980.0 312.0" fill="none" stroke="#cfcfdb" stroke-width="1.5" opacity="0.8" stroke-linecap="round" stroke-linejoin="round"/>
<path d="M958.0 316.0 L966.0 313.0 L972.0 312.0" fill="none" stroke="#d8d8e4" stroke-width="1.6" opacity="0.8" stroke-linecap="round" stroke-linejoin="round"/>
<path d="M948.0 322.0 L958.0 330.0 L965.0 340.0" fill="none" stroke="#8a8a94" stroke-width="2" opacity="0.8" stroke-linecap="round" stroke-linejoin="round"/>
<path d="M940.0 340.0 L948.0 348.0 L962.0 352.0" fill="none" stroke="#c8c8d4" stroke-width="1.6" opacity="0.8" stroke-linecap="round" stroke-linejoin="round"/>
<path d="M814.8 397.7 L830.0 394.5 L845.5 393.8" fill="none" stroke="#ececf4" stroke-width="2" opacity="0.9" stroke-linecap="round" stroke-linejoin="round"/>
<path d="M786.0 392.0 L792.0 390.0 L798.0 388.5" fill="none" stroke="#e4e4ee" stroke-width="1.6" opacity="0.9" stroke-linecap="round" stroke-linejoin="round"/>
<path d="M700.0 474.0 L716.0 462.0 L730.0 452.0" fill="none" stroke="#d4d4e0" stroke-width="1.4" opacity="0.8" stroke-linecap="round" stroke-linejoin="round"/>
<path d="M672.0 488.0 L690.0 483.0 L704.0 476.0" fill="none" stroke="#cfcfdb" stroke-width="1.4" opacity="0.8" stroke-linecap="round" stroke-linejoin="round"/>
<path d="M744.0 425.0 L770.0 405.0 L792.0 392.0" fill="none" stroke="#9393a0" stroke-width="1.6" opacity="0.7" stroke-linecap="round" stroke-linejoin="round"/>
</g>
<g fill="none" stroke="#5a22e6" stroke-width="1" shape-rendering="crispEdges">
<path d="M915.5 262 V194.5 H917.5 M921 195.5 L925.5 197 V260"/>
<path d="M1125.5 313 V387.5"/>
<path d="M710.5 557.5 V627.5 L1127 387.5"/>
<path d="M812 379 L710.5 557.5" stroke-dasharray="4 5"/>
</g>
<!-- tool -->
<g>
<rect x="810.8" y="352" width="3.6" height="22" fill="#5c5c64"/>
<circle cx="812.5" cy="374.5" r="3.6" fill="none" stroke="#f4f4f8" stroke-width="1"/>
<path d="M800.7 336.5 V349 A11.9 6.2 0 0 0 824.5 349 V336.5 Z" fill="#8c3638"/>
<path d="M812.5 343 V355.2 A11.9 6.2 0 0 0 824.5 349 V336.5 Z" fill="#7d3034"/>
<ellipse cx="812.6" cy="336.4" rx="11.9" ry="7.2" fill="#f06e6e"/>
</g>
<!-- local triad -->
<g>
<path d="M597.5 541 V560" stroke="#f0a8a8" stroke-width="1"/>
<path d="M601 540 L617 549" stroke="#b0b0f0" stroke-width="1"/>
<path d="M593.5 534 L562 515" stroke="#2f6fc4" stroke-width="3.4"/>
<path d="M593.5 534 L562 515" stroke="#d08030" stroke-width="3.4" stroke-dasharray="1.2 2.4"/>
<path d="M552.5 510.5 L565 513 L559.5 521.5 Z" fill="#b3201f"/>
<circle cx="563" cy="514" r="2.2" fill="#77777f"/>
<rect x="594.8" y="498" width="5.4" height="36" fill="#9b1c26"/>
<path d="M592.3 498.5 L597.4 483.8 L597.4 498.5 Z" fill="#6a6a70"/>
<path d="M602.5 498.5 L597.4 483.8 L597.4 498.5 Z" fill="#7b1b7d"/>
<circle cx="597.5" cy="537.3" r="4.8" fill="#cf7a22"/>
<path d="M592.9 536 A4.8 4.8 0 0 1 602.1 536 Z" fill="#8a8078"/>
<circle cx="603.5" cy="534" r="1.3" fill="#e03030"/>
<text x="602" y="480.6" font-family="Liberation Sans, sans-serif" font-size="13" fill="#ffffff">Z</text>
<text x="555" y="507" font-family="Liberation Sans, sans-serif" font-size="13" fill="#f2f2f6">Y</text>
<text x="602.5" y="507" font-family="Liberation Sans, sans-serif" font-size="11" fill="#a8a8f4">Z</text>
<text x="578.5" y="521" font-family="Liberation Sans, sans-serif" font-size="11" fill="#f0a0a0">λ</text>
<text x="626" y="549" font-family="Liberation Sans, sans-serif" font-size="11" fill="#f0a0a0">λ</text>
<text x="603" y="561" font-family="Liberation Sans, sans-serif" font-size="11" fill="#f0a0a0">λ</text>
<text x="614" y="552" font-family="Liberation Sans, sans-serif" font-size="8" fill="#a8a8f4">6</text>
<text x="594.5" y="560" font-family="Liberation Sans, sans-serif" font-size="8" fill="#a8a8f4">9</text>
</g>
<!-- corner triad -->
<g shape-rendering="crispEdges">
<path d="M349 637.5 L325.5 625.5 M349 637.5 L371 625.5" stroke="#c01414" stroke-width="1" fill="none"/>
<path d="M325 625.2 L334 626.6 L331.5 632.6 Z M371 625.2 L362.3 626.6 L365.2 632.6 Z M328 626 L333 630 M368 626 L363.5 630" stroke="#c01414" stroke-width="1" fill="none"/>
<rect x="347.8" y="621" width="2.6" height="16.8" fill="#ffffff"/>
<path d="M345.9 619.2 L349.4 611.4 L352.8 619.2 L349.4 622.5 Z M349.4 611.4 V622" stroke="#ffffff" stroke-width="1" fill="none"/>
</g>
<text x="352.6" y="607" font-family="Liberation Sans, sans-serif" font-size="14" fill="#ffffff">Z</text>
<text x="328.6" y="622" font-family="Liberation Sans, sans-serif" font-size="14" font-weight="bold" fill="#c01414">Y</text>
<text x="373.6" y="622" font-family="Liberation Sans, sans-serif" font-size="14" font-weight="bold" fill="#c01414">X</text>
<!-- view cube -->
<g>
<ellipse cx="1261" cy="187" rx="34" ry="19" fill="#d9d7dd" opacity="0.55"/>
<ellipse cx="1261" cy="186" rx="26" ry="14" fill="#d2d1d7" opacity="0.7"/>
<path d="M1260.3 140 L1285.9 151.4 L1260.6 164.7 L1236.3 151.4 Z" fill="#e9e9ed" stroke="#8d8d95" stroke-width="0.8"/>
<path d="M1236.3 151.4 L1260.6 164.7 L1260.6 194.2 L1238.2 179.4 Z" fill="#ededf1" stroke="#8d8d95" stroke-width="0.8"/>
<path d="M1285.9 151.4 L1260.6 164.7 L1260.6 194.2 L1284.2 179.8 Z" fill="#f2f2f4" stroke="#8d8d95" stroke-width="0.8"/>
<path d="M1237.5 158 L1260.6 171.5 L1285 158 L1285.5 152.5 L1260.6 165.5 L1237 152.5Z" fill="#e6dde6" opacity="0.5"/>
<text transform="matrix(0.62,-0.29,0.6,0.28,1260.2,154.6)" font-family="Liberation Sans, sans-serif" font-size="10" fill="#8c94a4" text-anchor="middle">Верх</text>
<text transform="translate(1248.8,174.5) skewY(31) scale(0.85,1)" font-family="Liberation Sans, sans-serif" font-size="7.5" fill="#8c94a4" text-anchor="middle">Сзади</text>
<text transform="translate(1273.5,176) skewY(-29) scale(0.8,1)" font-family="Liberation Sans, sans-serif" font-size="7.5" fill="#8c94a4" text-anchor="middle">Спереди</text>
</g>

</svg>
<div class="abs" style="left:1308px;top:119px;width:1px;height:551px;background:#b5b5b5"></div>
<div class="abs" style="left:1309px;top:119px;width:48px;height:34px;background:#e8ebf5"></div>
<div class="abs" style="left:1309px;top:153px;width:48px;height:517px;background:#fcfcfc;border-top:1px solid #d4d6de;box-sizing:border-box"></div>
<svg style="left:1347px;top:133px" width="9" height="9"><path d="M1 1 L8 8 M8 1 L1 8" stroke="#6a6a6a" stroke-width="1.4" fill="none"/></svg>
<svg style="left:1309px;top:153px" width="48" height="517" viewBox="1309 153 48 517">
<!-- 1 machine -->
<rect x="1324.4" y="162.6" width="6.6" height="31" fill="#d6d6da" stroke="#a4a4ac" stroke-width="0.7"/>
<rect x="1331" y="168.6" width="13" height="5.6" fill="#3aa8b0"/><rect x="1331" y="188.6" width="19.6" height="5" fill="#3aa8b0"/>
<rect x="1344" y="164.6" width="7" height="13" rx="2.4" fill="#d0d0d6" stroke="#9c9ca6" stroke-width="0.7"/><rect x="1346.2" y="177.6" width="2.8" height="6" fill="#77777c"/>
<path d="M1351 196.8 H1357 V190.4 Z" fill="#111"/>
<!-- 2 cube top blue -->
<path d="M1322 211 L1331 202.4 H1353.4 L1344.6 211 Z" fill="#5aa8ec" stroke="#55555a" stroke-width="0.9"/>
<path d="M1322 211 H1344.6 V233.8 H1322 Z M1344.6 211 L1353.4 202.4 V225.4 L1344.6 233.8" fill="#fbfbfd" stroke="#55555a" stroke-width="0.9"/>
<path d="M1331 202.4 V225.4 H1353.4 M1331 225.4 L1322 233.8" fill="none" stroke="#77777c" stroke-width="0.8"/>
<path d="M1351 235.4 H1357 V229 Z" fill="#111"/>
<!-- 3 iso cube -->
<path d="M1337.6 242.2 L1352 249.6 V266 L1337.6 273.6 L1323.2 266 V249.6 Z" fill="#e8eaf4" stroke="#66666a" stroke-width="0.9"/>
<path d="M1323.2 249.6 L1337.6 257.4 L1352 249.6 M1337.6 257.4 V273.6" fill="none" stroke="#66666a" stroke-width="0.9"/>
<path d="M1326 251 L1337.6 257.4 L1349.2 251 Z" fill="#fbfbfd"/><path d="M1327.4 251.6 H1347.8 L1337.6 262.6 Z" fill="#4a9ee8"/>
<path d="M1351 274.8 H1357 V268.4 Z" fill="#111"/>
<!-- 4 zoom undo -->
<circle cx="1331" cy="300.6" r="7.6" fill="none" stroke="#55555a" stroke-width="2"/><path d="M1336.6 306.4 L1345 313.4" stroke="#55555a" stroke-width="2.6" stroke-linecap="round"/>
<path d="M1341.4 287.4 A6.2 6.2 0 1 1 1343.6 298.6" fill="none" stroke="#1c86e0" stroke-width="1.6"/><path d="M1338 286.6 L1343.4 284 L1343 290 Z" fill="#1c86e0"/>
<!-- 5 doc refresh -->
<path d="M1324.4 329 H1339.6 L1346.8 336.6 V349 M1336 360.4 H1324.4 Z" fill="#e4e6f0" stroke="#66666a" stroke-width="0.9"/>
<path d="M1324.4 329 H1339.6 L1346.8 336.6 V360.4 H1324.4 Z" fill="#e4e6f0" stroke="#66666a" stroke-width="0.9"/>
<path d="M1339.6 329 L1346.8 336.6 H1339.6 Z" fill="#55555a"/>
<circle cx="1343" cy="354" r="8.6" fill="#fbfbfd"/>
<path d="M1337.4 352.6 A5.8 5.8 0 0 1 1348 351" fill="none" stroke="#1c86e0" stroke-width="2"/><path d="M1350.8 347.6 L1350.4 354 L1345 351.4 Z" fill="#1c86e0"/>
<path d="M1348.6 355.6 A5.8 5.8 0 0 1 1338 357" fill="none" stroke="#1c86e0" stroke-width="2"/><path d="M1335.2 360.6 L1335.6 354 L1341 356.6 Z" fill="#1c86e0"/>
<!-- 6 zoom fit -->
<circle cx="1331" cy="395.2" r="7.6" fill="none" stroke="#55555a" stroke-width="2"/><path d="M1336.6 401 L1343.2 407.4" stroke="#55555a" stroke-width="2.6" stroke-linecap="round"/>
<rect x="1340.4" y="376.8" width="13.6" height="13.6" fill="#fbfbfd" stroke="#55555a" stroke-width="0.9"/>
<path d="M1342.6 379 L1351.8 388.2 M1351.8 379 L1342.6 388.2 M1342.6 381.6 V379 H1345.2 M1349.2 379 H1351.8 V381.6 M1351.8 385.6 V388.2 H1349.2 M1345.2 388.2 H1342.6 V385.6" fill="none" stroke="#55555a" stroke-width="0.9"/>
<!-- 7 zoom box -->
<circle cx="1331" cy="440" r="7.6" fill="none" stroke="#55555a" stroke-width="2"/><path d="M1336.6 445.8 L1344.6 453" stroke="#55555a" stroke-width="2.6" stroke-linecap="round"/>
<rect x="1340.6" y="423.4" width="13.4" height="8.8" fill="#fbfbfd" stroke="#55555a" stroke-width="0.9"/>
<path d="M1351 458.6 H1357 V452.2 Z" fill="#111"/>
<!-- 8 shaded pressed -->
<rect x="1318.4" y="467.2" width="42" height="37" rx="3.5" fill="#dfe2ec" stroke="#6e6e74" stroke-width="1"/>
<path d="M1322.6 477 L1329 470.8 H1353.2 L1353.2 495 L1346.4 501.2 H1322.6 Z" fill="#8ecdf5"/>
<path d="M1322.6 477 L1329 470.8 H1353.2 L1346.4 477 Z" fill="#a8d8f8"/>
<path d="M1346.4 477 L1353.2 470.8 V495 L1346.4 501.2 Z" fill="#4a90d0"/>
<path d="M1322.6 501.2 L1346.4 477 V501.2 Z" fill="#62a8e8"/>
<path d="M1353.4 471 V495 L1346.6 501.2" fill="none" stroke="#e03030" stroke-width="0.9"/><path d="M1322.6 477 L1329 470.8" stroke="#e8b060" stroke-width="0.9"/>
<path d="M1351 506.6 H1357 V500.2 Z" fill="#111"/>
<!-- 9 wireframe -->
<path d="M1322.4 525.4 H1345.6 V548.6 H1322.4 Z M1331 517 H1353.8 V540 H1331 Z M1322.4 525.4 L1331 517 M1345.6 525.4 L1353.8 517 M1345.6 548.6 L1353.8 540 M1322.4 548.6 L1331 540" fill="none" stroke="#55555a" stroke-width="0.9"/>
<!-- 10 blue wire pressed -->
<rect x="1318.4" y="561.6" width="42" height="37" rx="3.5" fill="#dfe2ec" stroke="#6e6e74" stroke-width="1"/>
<path d="M1322.6 572.4 L1330.4 565.4 H1353.4 V588 L1345.8 595.2 H1322.6 Z" fill="#8fd0f7" stroke="#4a8fc8" stroke-width="1"/>
<path d="M1322.6 572.4 H1345.8 V595.2 M1345.8 572.4 L1353.4 565.4 M1330.4 565.4 V588 H1353.4 M1330.4 588 L1322.6 595.2" fill="none" stroke="#4a8fc8" stroke-width="0.9"/>
<!-- 11 select -->
<path d="M1330 623.4 H1323.4 V639.2 H1352.6 V623.4 H1347" fill="none" stroke="#66666a" stroke-width="0.9"/>
<path d="M1332 614 V631.6 L1336.4 627.6 L1339.6 634.6 L1342.6 633.2 L1339.6 626.6 L1346.4 626.4 Z" fill="#1c86e0"/>
<path d="M1351 644.6 H1357 V638.2 Z" fill="#111"/>
<!-- 12 -->
<path d="M1323.2 652.8 V670 H1341 Z" fill="#1c86e0"/>
<path d="M1341.2 653.4 A6.2 6.2 0 1 1 1343.4 664.4" fill="none" stroke="#77777c" stroke-width="1.3"/><path d="M1338.2 654.6 L1343.6 651.4 L1343.4 657.4 Z" fill="#77777c"/>
</svg>

<div class="abs" style="left:0;top:670px;width:1357px;height:33px;background:#e8ebf5"></div>
<div class="abs" style="left:0;top:670px;width:1357px;height:1px;background:#f3f4fa"></div>
<div class="abs" style="left:0;top:703px;width:1357px;height:1px;background:#2e2e30"></div>
<div class="abs" style="left:1347px;top:703px;width:10px;height:1px;background:#3fae49"></div>
<div class="tb" style="left:265.5px;width:52.0px"></div>
<div class="tb" style="left:331.5px;width:56.0px"></div>
<div class="tb" style="left:391.5px;width:56.0px"></div>
<div class="tb" style="left:451.5px;width:56.0px"></div>
<div class="tb" style="left:565.5px;width:89.5px"></div>
<div class="tb" style="left:732px;width:55.5px"></div>
<div class="tb" style="left:817.5px;width:56.0px"></div>
<div class="tb" style="left:904px;width:55px"></div>
<div class="tb" style="left:989.5px;width:56.0px"></div>
<div class="tb" style="left:1076px;width:55.5px"></div>
<span class="t" style="left:337.4px;top:680.34px;font-size:12px;line-height:14.4px;letter-spacing:-0.863px;color:#1e1e1e;">212,288</span>
<span class="t" style="left:397.0px;top:680.34px;font-size:12px;line-height:14.4px;letter-spacing:-0.830px;color:#1e1e1e;">740,236</span>
<span class="t" style="left:456.9px;top:680.34px;font-size:12px;line-height:14.4px;letter-spacing:0.000px;color:#1e1e1e;">0</span>
<span class="t" style="left:737.0px;top:680.34px;font-size:12px;line-height:14.4px;letter-spacing:1.200px;color:#1e1e1e;">мм</span>
<span class="t" style="left:823.3px;top:680.34px;font-size:12px;line-height:14.4px;letter-spacing:0.000px;color:#1e1e1e;">0,1</span>
<span class="t" style="left:909.6px;top:680.34px;font-size:12px;line-height:14.4px;letter-spacing:0.000px;color:#1e1e1e;">0,0</span>
<span class="t" style="left:994.9px;top:680.34px;font-size:12px;line-height:14.4px;letter-spacing:0.000px;color:#1e1e1e;">6,0</span>
<span class="t" style="left:1081.2px;top:680.34px;font-size:12px;line-height:14.4px;letter-spacing:0.000px;color:#1e1e1e;">2,0</span>
<div class="abs" style="left:28px;top:676px;width:88px;height:22px;box-sizing:border-box;border:1px dotted #b9bcc6;background:linear-gradient(#eef0f6 0 45%,#dcdde3 45% 100%)"></div>
<span class="t" style="left:31.4px;top:680.07px;font-size:12.5px;line-height:15.0px;letter-spacing:-0.266px;color:#1e1e1e;">ск оси загот</span>
<svg style="left:104px;top:686px" width="9" height="5"><path d="M0 0 H8 L4 4.5 Z" fill="#111"/></svg>
<svg style="left:0;top:670px" width="1357" height="34" viewBox="0 670 1357 34">
<!-- axes icon -->
<path d="M2.5 697 V678.5" stroke="#1c86e0" stroke-width="1.1"/><path d="M0.6 680.4 L2.5 676.6 L4.4 680.4 Z" fill="#1c86e0"/>
<path d="M4.4 695 L18.6 682" stroke="#1c86e0" stroke-width="1.1"/><path d="M20.2 680.6 l-3.6 0.8 l2.6 2.8 Z" fill="#1fa040"/>
<rect x="20.9" y="676.2" width="3" height="3" fill="#1c86e0"/>
<path d="M4 697.5 H18.5" stroke="#e83030" stroke-width="1.1"/>
<path d="M18.6 698.6 H23 V693.8 Z" fill="#111"/>
<rect x="0.8" y="695.8" width="2.8" height="2.8" fill="#d0d0d8" stroke="#a0a0b0" stroke-width="0.5"/>
<!-- X plane -->
<g>
<path d="M124.2 683.5 L129.4 680 V689.5 L124.2 693 Z" fill="#4a9ae0"/><path d="M129.4 680 L131.6 682 V691 L129.4 689.5 Z" fill="#2a7ac8"/>
<path d="M130.8 689.6 V679.2" stroke="#1c86e0" stroke-width="1.1"/><path d="M128.9 681 L130.8 677.6 L132.7 681 Z" fill="#1c86e0"/>
<path d="M130.8 689.6 L124.6 694" stroke="#1c86e0" stroke-width="1"/><path d="M130.8 689.6 L139.8 694.6" stroke="#77777c" stroke-width="1.1"/><path d="M141 695.2 l-3.6 -0.4 l1.6 -2.6 Z" fill="#77777c"/><path d="M123.6 694.8 l3.4 -0.6 l-1.4 -2.4 Z" fill="#1c86e0"/>
<text x="136.8" y="686" font-family="Liberation Sans, sans-serif" font-size="8" fill="#1c7ad8">X</text>
</g>
<!-- Y plane -->
<g>
<path d="M160 680.4 L165.6 683.8 V692.4 L160 689 Z" fill="#4a9ae0"/><path d="M158 682.2 L160 680.4 V689 L158 690.6 Z" fill="#2a7ac8"/>
<path d="M158.6 689.6 V679.2" stroke="#1c86e0" stroke-width="1.1"/><path d="M156.7 681 L158.6 677.6 L160.5 681 Z" fill="#1c86e0"/>
<path d="M158.6 689.6 L150.6 694.6" stroke="#77777c" stroke-width="1.1"/><path d="M149.4 695.2 l3.6 -0.4 l-1.6 -2.6 Z" fill="#77777c"/><path d="M158.6 689.6 L166 694" stroke="#1c86e0" stroke-width="1"/><path d="M167 694.8 l-3.4 -0.6 l1.4 -2.4 Z" fill="#1c86e0"/>
<text x="155.6" y="699.6" font-family="Liberation Sans, sans-serif" font-size="8" fill="#1c7ad8">Y</text>
</g>
<!-- Z plane pressed -->
<g>
<rect x="174.6" y="677.4" width="23" height="21" rx="3" fill="#d9dbe5" stroke="#5e5e62" stroke-width="1"/>
<rect x="175.6" y="678.4" width="21" height="8" rx="2" fill="#c9cbd5"/>
<path d="M186 692 V680.4" stroke="#66666a" stroke-width="1.1"/><path d="M184 682.4 L186 678.6 L188 682.4 Z" fill="#66666a"/>
<path d="M186 688.6 L178.4 693.2 M186 688.6 L193.6 693.2" stroke="#1c86e0" stroke-width="1.1"/>
<path d="M179.4 694.6 L186 690.2 L192.6 694.6 L186 698.2 Z" fill="#4a9ae0"/>
<text x="176.4" y="686.4" font-family="Liberation Sans, sans-serif" font-size="8" fill="#1c7ad8">Z</text>
</g>
<!-- lock -->
<g>
<path d="M209 688 V684 Q205 684.6 204.4 681.6 Q204 678.4 208 678.2 Q211.6 678.2 212 680.6" fill="none" stroke="#222" stroke-width="1.8"/>
<rect x="207.4" y="687" width="11.4" height="10.8" rx="1" fill="#4a4a4e" stroke="#1a1a1c" stroke-width="0.8"/>
<path d="M209 689.6 H217.2 M209 692 H217.2 M209 694.4 H217.2" stroke="#9a9aa0" stroke-width="0.9"/>
</g>
<!-- grid -->
<path d="M240 680 H259.6 M240 684.4 H259.6 M240 688.8 H259.6 M240 693.2 H259.6 M240 697.6 H259.6 M240.4 679.6 V698 M244.9 679.6 V698 M249.4 679.6 V698 M253.9 679.6 V698 M258.4 679.6 V698" stroke="#c6c7cf" stroke-width="1" fill="none"/>
<!-- xyz disabled -->
<g>
<rect x="513.2" y="678.4" width="19.4" height="19" fill="#eceef4" stroke="#c6c6ca" stroke-width="0.9"/><path d="M513.2 678.8 H532.6" stroke="#c6c6ca" stroke-width="1.6"/>
<path d="M521 684 H530.4 M521 689 H530.4 M521 694 H530.4" stroke="#ece4c8" stroke-width="1"/>
<text x="516" y="686.2" font-family="Liberation Sans, sans-serif" font-size="5" fill="#b8b8c0">X</text><text x="516" y="691.2" font-family="Liberation Sans, sans-serif" font-size="5" fill="#b8b8c0">Y</text><text x="516" y="696.2" font-family="Liberation Sans, sans-serif" font-size="5" fill="#b8b8c0">Z</text>
</g>
<!-- dim disabled -->
<g fill="none" stroke="#bdbdc3" stroke-width="1">
<circle cx="543.6" cy="693.4" r="2.4"/><path d="M539.6 693.4 H547.6 M543.6 689.4 V697.4 M545.6 691.4 L553 685.4"/><path d="M554.6 684 l-3.6 0.6 l2.2 2.6 Z" fill="#bdbdc3"/><path d="M556.6 679.6 L559.2 682.2 L556.6 684.8 L554 682.2 Z" fill="#d0d0d6"/>
</g>
<!-- calc -->
<g>
<rect x="670.4" y="678.4" width="13" height="17.4" fill="#d9d9e1" stroke="#55555a" stroke-width="0.9"/>
<rect x="672.2" y="680.2" width="9.4" height="3.4" fill="#b8b8c8"/><rect x="678.6" y="680.8" width="2" height="2" fill="none" stroke="#333" stroke-width="0.6"/>
<g fill="#8a8a96"><rect x="672.6" y="685.6" width="1.8" height="1.8"/><rect x="676" y="685.6" width="1.8" height="1.8"/><rect x="679.4" y="685.6" width="1.8" height="1.8"/><rect x="672.6" y="689" width="1.8" height="1.8"/><rect x="676" y="689" width="1.8" height="1.8"/><rect x="672.6" y="692.4" width="1.8" height="1.8"/><rect x="676" y="692.4" width="1.8" height="1.8"/></g>
<rect x="681.6" y="688.6" width="3.6" height="9.4" fill="#1c86e0" stroke="#e8ebf5" stroke-width="0.6"/><rect x="686.6" y="688.6" width="3.4" height="9.4" fill="#1c86e0"/>
</g>
<!-- ruler -->
<g stroke="#1c86e0" fill="none">
<path d="M706.4 679.6 V688 M716.4 679.6 V688 M726.4 679.6 V688" stroke-width="1.1"/><path d="M706.4 684 H726.4" stroke-width="0.9"/>
<path d="M708.9 681.8 V686 M711.4 681.8 V686 M713.9 681.8 V686 M718.9 681.8 V686 M721.4 681.8 V686 M723.9 681.8 V686" stroke-width="0.8"/>
</g>
<text x="705.4" y="697.4" font-family="Liberation Sans, sans-serif" font-size="8.4" fill="#1c7ad8" letter-spacing="4.2">012</text>
<!-- crosshair -->
<g stroke="#1c7ad0" stroke-width="1" fill="none"><circle cx="804" cy="687.2" r="8.6"/><path d="M793 687.2 H815 M804 676.4 V698"/></g>
<!-- thickness -->
<g stroke="#1c7ad0" stroke-width="1" fill="none"><path d="M878.6 688.8 H887.6" stroke-dasharray="1 1"/><path d="M888.4 679.4 H896.6 V687.4 L895 690.2 H890 L888.4 687.4 Z" fill="#dfe6f4"/><path d="M890 692.2 H895 M890 694.2 H895 M890.8 696.2 H894.2"/></g>
<!-- diameter -->
<g stroke="#1c7ad0" stroke-width="1.1" fill="none"><circle cx="975.2" cy="687.8" r="6.8"/><path d="M967.8 695.2 L982.8 680.2"/></g>
<!-- radius -->
<g stroke="#1c7ad0" stroke-width="1.2" fill="none"><path d="M1069.4 680 L1057 692.4"/><path d="M1055.6 693.8 L1056.6 688.6 M1055.6 693.8 L1060.8 692.8"/><path d="M1051.2 689 Q1052.6 695.8 1060 697.8" stroke-width="1"/></g>
</svg>

</body>
</html>
